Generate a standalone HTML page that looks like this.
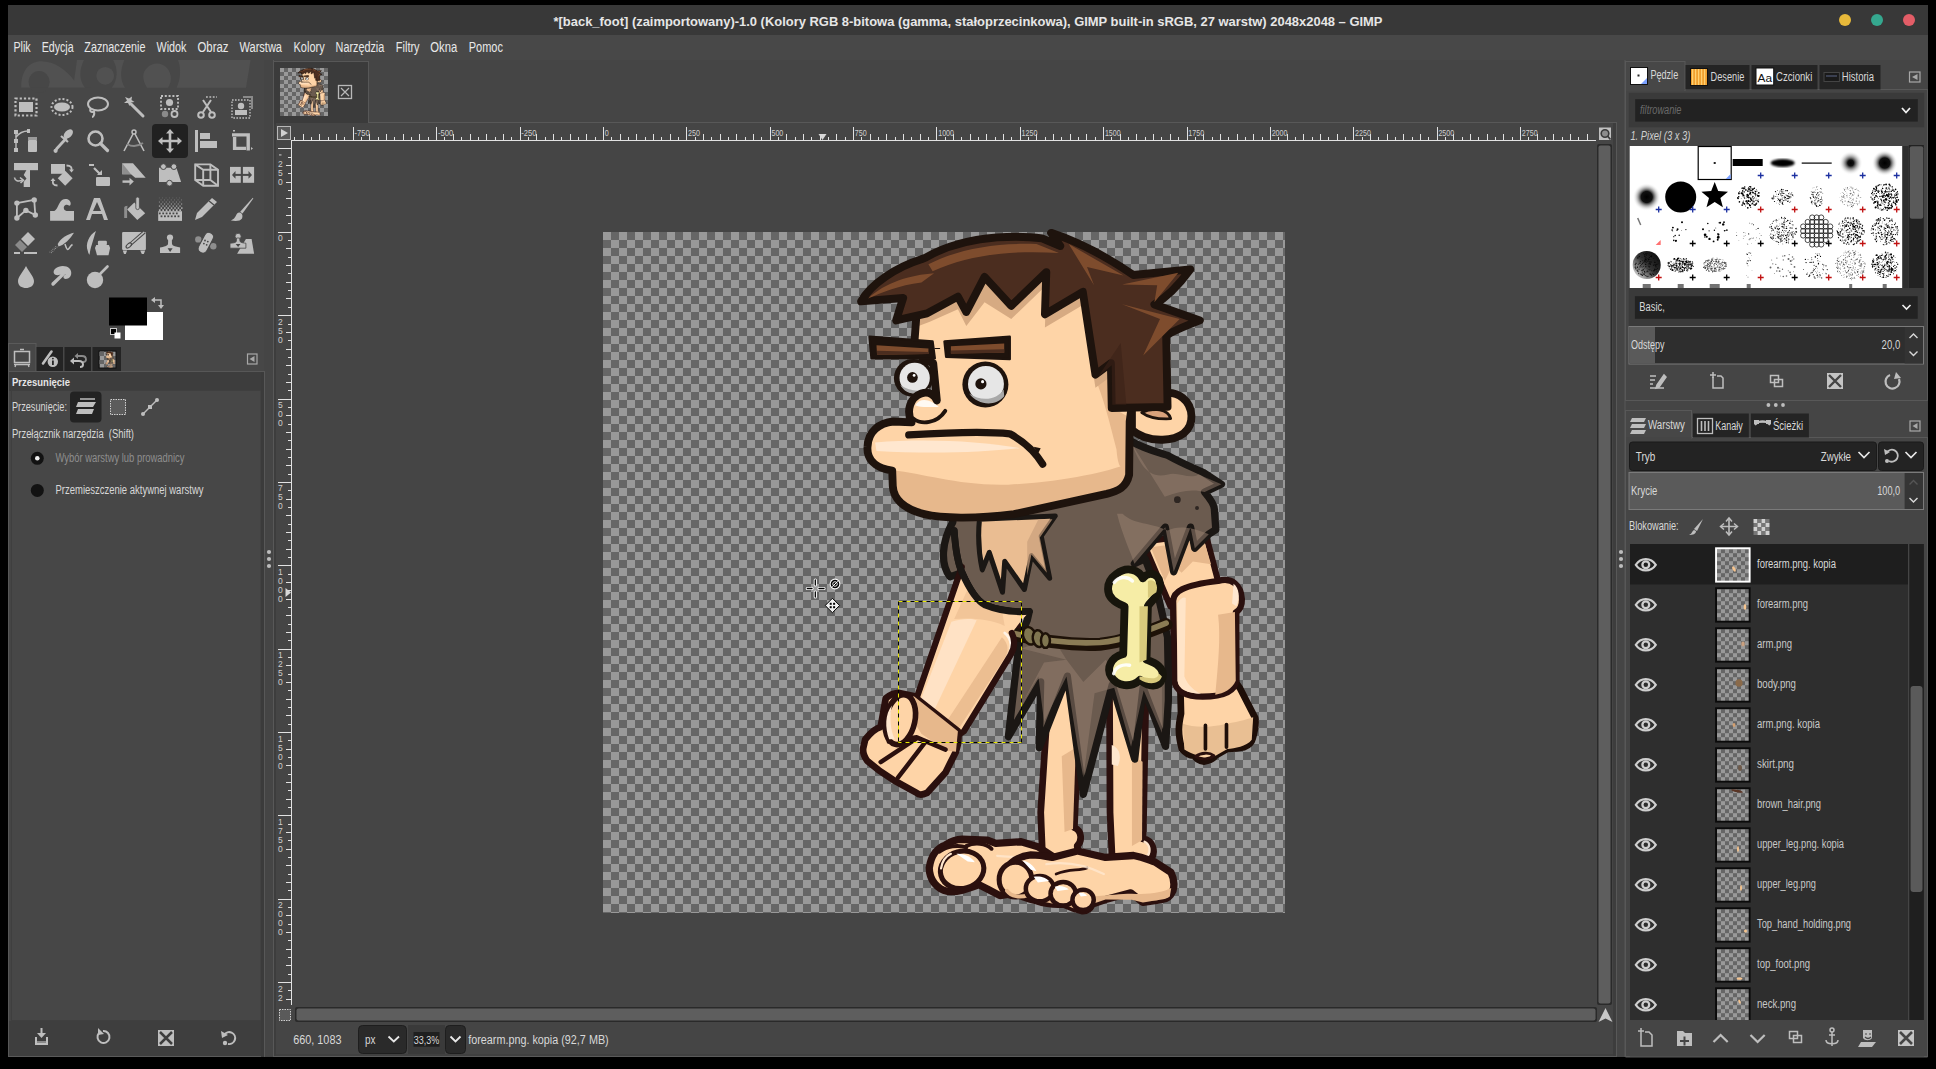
<!DOCTYPE html>
<html><head><meta charset="utf-8"><title>GIMP</title>
<style>
html,body{margin:0;padding:0;background:#000;width:1936px;height:1069px;overflow:hidden}
svg{display:block;font-family:"Liberation Sans",sans-serif}
</style></head><body>
<svg width="1936" height="1069" viewBox="0 0 1936 1069">
<defs>
<pattern id="chk" patternUnits="userSpaceOnUse" x="603" y="232" width="16" height="16"><rect width="16" height="16" fill="#999999"/><rect x="8" width="8" height="8" fill="#666666"/><rect y="8" width="8" height="8" fill="#666666"/></pattern>
<pattern id="chk4" patternUnits="userSpaceOnUse" width="8" height="8"><rect width="8" height="8" fill="#999"/><rect x="4" width="4" height="4" fill="#666"/><rect y="4" width="4" height="4" fill="#666"/></pattern>
<pattern id="chkth" patternUnits="userSpaceOnUse" x="280" y="68" width="8" height="8"><rect width="8" height="8" fill="#999"/><rect x="4" width="4" height="4" fill="#666"/><rect y="4" width="4" height="4" fill="#666"/></pattern>
<g id="cave"><g transform="translate(840,700) scale(0.280702)" stroke-linejoin="round" stroke-linecap="round">
<path d="M960,-60 L1090,-40 L1080,495 C1115,500 1125,540 1110,565 L1040,590 L970,575 L962,400 Z" fill="#fed4a7" stroke="#2b100e" stroke-width="24"/>
<path d="M1040,200 L1078,220 L1076,500 L1040,520 Z" fill="#e7b88c"/>
<path d="M968,160 C995,170 1005,200 990,235 L968,230 Z" fill="#ffe7cf"/>
<path d="M1085,505 C1105,515 1108,540 1095,555" fill="none" stroke="#ffe7cf" stroke-width="8"/>
<path d="M745,-60 L855,-40 L835,455 C860,465 865,500 845,520 L855,570 L722,570 L715,400 Z" fill="#fed4a7" stroke="#2b100e" stroke-width="24"/>
<path d="M790,200 L840,170 L830,460 L800,470 Z" fill="#e7b88c"/>
<path d="M318,598 C325,550 350,525 375,517 C400,500 420,496 435,496 L525,499 L555,511 L645,505 L705,523 L770,565 L760,640 C700,665 620,690 570,697 L525,673 L495,658 C450,675 420,685 384,682 C345,675 318,640 318,598 Z" fill="#fed4a7" stroke="#2b100e" stroke-width="26"/>
<ellipse cx="435" cy="605" rx="78" ry="66" transform="rotate(-15 435 605)" fill="#fed4a7" stroke="#2b100e" stroke-width="18"/>
<path d="M360,600 C365,570 380,555 395,548" fill="none" stroke="#ffe7cf" stroke-width="8"/>
<path d="M355,540 C380,520 420,515 450,525 M450,520 C480,505 520,510 540,530" fill="none" stroke="#2b100e" stroke-width="14"/>
<path d="M415,548 C440,545 470,560 480,578 L455,575 Z" fill="#fff"/>
<path d="M560,555 C620,560 680,560 720,570" fill="none" stroke="#ffe7cf" stroke-width="8" opacity="0.8"/>
<path d="M590,640 C585,590 620,560 680,552 C700,552 730,556 756,561 L846,538 L946,561 L1046,554 C1080,560 1100,570 1122,577 L1179,614 C1192,640 1192,660 1186,680 C1175,705 1160,711 1146,711 L1079,721 L1036,687 L946,711 L899,727 C890,745 875,752 862,751 L829,741 L796,727 C760,730 730,725 700,715 C650,705 600,685 590,640 Z" fill="#fed4a7" stroke="#2b100e" stroke-width="26"/>
<path d="M640,690 C700,705 800,700 900,700 C960,695 1000,690 1040,690 C1100,695 1150,685 1180,670 L1175,700 C1160,711 1146,711 1079,721 L1040,712 L946,711 L899,727 C880,745 850,745 829,741 L796,727 C760,730 700,715 640,690Z" fill="#e7b88c"/>
<ellipse cx="625" cy="640" rx="58" ry="62" fill="#fed4a7" stroke="#2b100e" stroke-width="18"/>
<path d="M595,680 C610,700 640,705 670,695" fill="none" stroke="#e7b88c" stroke-width="14"/>
<ellipse cx="712" cy="672" rx="50" ry="45" fill="#fed4a7" stroke="#2b100e" stroke-width="16"/>
<ellipse cx="795" cy="690" rx="45" ry="42" fill="#fed4a7" stroke="#2b100e" stroke-width="16"/>
<ellipse cx="866" cy="712" rx="38" ry="36" fill="#fed4a7" stroke="#2b100e" stroke-width="16"/>

<path d="M650,572 C670,575 690,590 700,610 L680,605 Z M690,630 C710,625 735,632 745,645 L705,650 Z M765,665 C785,660 805,665 815,675 L775,680 Z M850,688 C862,685 875,690 880,697 L858,700 Z" fill="#fff"/>
<path d="M770,620 C820,600 850,610 880,598" fill="none" stroke="#2b100e" stroke-width="10"/>
<path d="M735,585 C800,575 870,585 940,620" fill="none" stroke="#ffe7cf" stroke-width="8" opacity="0.8"/>
</g>
<g transform="translate(870,480) scale(0.280702)" stroke-linejoin="round" stroke-linecap="round">
<path d="M327,300 L470,330 L540,560 L440,600 L250,560 Z" fill="#fed4a7" stroke="#2b100e" stroke-width="20"/>
<path d="M340,380 L420,420 L470,500 L360,510 Z" fill="#e7b88c" opacity="0.6"/>
<path d="M972,220 L1195,190 L1240,360 L1305,470 L1305,720 L1085,720 L1080,425 L1070,450 Z" fill="#fed4a7" stroke="#2b100e" stroke-width="22"/>
<path d="M1000,240 L1190,215 L1215,300 L1150,290 L1110,330 L1080,300 L1050,360 Z" fill="#e7b88c"/>
<path d="M1105,712 L1108,832 C1100,870 1095,900 1111,958 C1125,975 1140,982 1153,982 C1165,995 1180,1003 1189,1003 C1210,1000 1225,990 1231,982 L1273,958 C1300,958 1320,955 1333,952 C1350,945 1360,935 1363,922 C1372,890 1375,860 1372,847 L1318,742 L1297,712 Z" fill="#fed4a7" stroke="#1e0e08" stroke-width="24"/>
<path d="M1115,868 C1150,880 1200,885 1270,868 C1320,860 1350,850 1365,845 L1360,925 C1340,950 1300,955 1273,958 L1231,982 C1200,990 1160,985 1120,960 Z" fill="#e9bf93"/>
<path d="M1195,874 L1195,958 M1270,871 L1270,952" fill="none" stroke="#1e0e08" stroke-width="13"/>
<path d="M1160,985 C1180,970 1210,970 1225,982 C1210,995 1180,998 1160,985Z" fill="#fed4a7" stroke="#2b100e" stroke-width="10"/>
<path d="M1080,430 C1082,400 1110,375 1240,360 C1290,345 1322,375 1325,425 C1326,450 1315,465 1303,472 L1305,715 C1300,755 1260,772 1185,772 C1125,772 1088,752 1085,715 Z" fill="#fed4a7" stroke="#2b100e" stroke-width="22"/>
<path d="M1240,480 L1300,470 L1303,715 C1290,745 1260,760 1230,765 C1240,660 1250,560 1240,480 Z" fill="#e7b88c"/>
<path d="M1095,440 C1105,420 1120,415 1125,420 L1120,700 C1130,730 1160,755 1180,762 C1130,760 1100,745 1095,715 Z" fill="#ffe7cf" opacity="0.8"/>
<path d="M1295,370 C1315,385 1320,420 1305,450 L1290,440 Z" fill="#ffe7cf"/>
<path d="M295,120 L700,60 L880,-20 L932,-137 C980,-110 1020,-100 1062,-87 C1110,-60 1160,-40 1187,-27 L1252,15 L1192,43 C1215,70 1228,90 1227,107 L1232,177 L1207,193 L1157,243 L1142,168 L1082,327 L1052,168 L942,298 L980,280 L1022,392 L1060,560 L1063,720 L1063,784 L1053,949 L973,739 L943,994 L863,729 L760,1120 L703,699 L603,954 L608,719 L493,914 L523,649 L535,560 L560,500 L567,470 C520,472 460,465 411,448 C380,432 350,385 327,330 L285,345 C250,300 255,220 295,150 Z" fill="#6b5b4f" stroke="#1b1714" stroke-width="26"/>
<path d="M540,800 L600,700 L620,860 L700,700 L740,950 L760,1060 L800,760 L870,740 L930,950 L975,750 L1040,900 L1040,700 L980,640 L900,720 L840,640 L760,720 L700,640 L620,650 Z" fill="#978070" opacity="0.5"/>
<path d="M540,600 L700,640 L650,560 Z" fill="#978070" opacity="0.45"/>
<path d="M300,180 C305,260 315,300 327,328 C350,380 380,430 411,446 C460,466 520,472 567,468" fill="none" stroke="#1b1714" stroke-width="24"/>
<path d="M390,140 L660,128 L610,200 L640,350 L575,270 L550,390 L480,290 L472,400 L425,258 L400,320 C385,250 385,190 390,140 Z" fill="#eabd92" stroke="#1b1714" stroke-width="18"/>
<path d="M600,140 L650,140 L605,205 L630,330 L575,265 L560,340 L560,220 Z" fill="#c9a07c" opacity="0.7"/>
<path d="M932,-130 C960,-60 990,0 1062,-20 C1100,-30 1140,0 1170,-20 L1252,15 L1192,43 C1150,30 1100,40 1050,60 Z" fill="#978070" opacity="0.5"/>
<path d="M880,120 C900,200 930,260 942,298 L1052,168 L1082,327 L1142,168 L1157,243 L1207,193 C1150,170 1100,160 1060,180 C1000,150 940,160 900,120 Z" fill="#978070" opacity="0.55"/>
<path d="M1095,70 m-12,0 a12,12 0 1,0 24,0 a12,12 0 1,0 -24,0 M1165,100 m-7,0 a7,7 0 1,0 14,0 a7,7 0 1,0 -14,0" fill="#2e2622"/>
<path d="M480,540 C600,575 700,590 820,585 C900,578 980,545 1055,515" fill="none" stroke="#1e1208" stroke-width="46"/>
<path d="M480,538 C600,570 700,585 820,579 C900,572 980,540 1055,510" fill="none" stroke="#8b7c55" stroke-width="20"/>
<g fill="#807650" stroke="#1e1208" stroke-width="9"><ellipse cx="568" cy="555" rx="22" ry="32" transform="rotate(-20 568 555)"/><ellipse cx="600" cy="565" rx="20" ry="30" transform="rotate(-10 600 565)"/><ellipse cx="625" cy="572" rx="16" ry="26"/></g>
<path d="M878,335 C915,305 958,320 972,350 C995,320 1040,335 1032,385 C1025,420 1000,430 990,450 L985,640 C1010,650 1052,665 1042,705 C1030,745 990,735 962,712 C930,742 880,735 860,702 C840,670 858,632 902,620 L907,450 C880,440 848,420 848,388 C848,365 860,348 878,335 Z" fill="#f6eda6" stroke="#17150c" stroke-width="28"/>
<path d="M960,450 L990,450 L985,640 L960,650 Z M990,360 C1010,350 1030,370 1020,400 L990,420 Z M960,700 C980,700 1020,720 1030,690 L1040,700 C1030,730 990,730 960,710 Z" fill="#d8ca7c"/>
<path d="M870,365 C885,345 915,340 935,360 M868,690 C875,665 900,655 925,660" fill="none" stroke="#fff" stroke-width="12" opacity="0.9"/>
<path d="M327,330 L165,780 C140,820 150,865 190,895 C240,925 300,925 335,895 L500,625 C515,600 520,575 505,545 L540,500 L567,470 C520,472 460,466 411,446 C380,430 350,385 327,330 Z" fill="#fed4a7"/>
<path d="M345,395 C380,430 420,450 470,465 L480,520 C430,495 360,490 300,495 Z" fill="#e7b88c" opacity="0.55"/>
<path d="M290,505 C330,493 360,493 380,500 L215,850 C190,840 175,820 178,790 Z" fill="#ffe7cf" opacity="0.75"/>
<path d="M470,560 C490,580 495,600 485,625 L320,880 C300,890 280,890 260,880 Z" fill="#e7b88c" opacity="0.8"/>
<path d="M480,545 C505,565 510,600 490,630" fill="none" stroke="#fff" stroke-width="10" opacity="0.7"/>
<path d="M327,310 L165,780 C140,820 150,865 190,895 C240,925 300,925 335,895 L500,625 C515,600 520,575 505,545" fill="none" stroke="#2b100e" stroke-width="22"/>
<path d="M300,180 C305,260 315,300 327,328 C350,380 380,430 411,446 C460,466 520,472 567,468" fill="none" stroke="#1b1714" stroke-width="24"/>
</g>
<g transform="translate(840,700) scale(0.280702)" stroke-linejoin="round" stroke-linecap="round">
<path d="M90,140 C110,115 130,100 145,96 L163,-6 C180,-20 200,-25 211,-25 L262,-14 L420,111 C425,140 420,165 413,184 L376,258 L310,331 C290,340 280,338 273,331 L193,287 L138,250 L97,217 C85,200 80,185 83,170 Z" fill="#fed4a7" stroke="#2b100e" stroke-width="24"/>
<path d="M262,-14 L420,111 L413,184 L376,180 L290,120 L240,40 Z" fill="#e7b88c"/>
<path d="M145,221 L273,137 M207,276 L303,151 M174,148 L273,133 L376,177" fill="none" stroke="#2b100e" stroke-width="16"/>
<ellipse cx="215" cy="70" rx="52" ry="90" transform="rotate(12 215 70)" fill="#fed4a7" stroke="#2b100e" stroke-width="20"/>
<path d="M185,20 C175,60 180,110 195,140 L175,140 C160,100 160,50 185,20 Z" fill="#ffe7cf"/>
</g>
<g transform="translate(840,225) scale(0.280702)" stroke-linejoin="round" stroke-linecap="round">
<path d="M1150,600 C1205,590 1250,625 1252,680 C1254,735 1210,762 1150,765 C1100,767 1060,748 1040,730 L1040,650 Z" fill="#fed4a7" stroke="#1e130d" stroke-width="28"/>
<path d="M1075,668 C1115,648 1170,655 1178,690 C1140,692 1105,690 1075,668 Z" fill="#d9a27c" stroke="#1e130d" stroke-width="10"/>
<ellipse cx="262" cy="545" rx="70" ry="68" fill="#1e130d"/>
<ellipse cx="266" cy="545" rx="54" ry="54" fill="#e6e6e6"/>
<path d="M215,570 C230,600 270,610 310,595 L320,580 C290,595 250,595 215,570Z" fill="#a9a9a9"/>
<circle cx="258" cy="543" r="19" fill="#1e130d"/><circle cx="264" cy="536" r="5" fill="#fff"/>
<path d="M300,150 L1000,150 L1040,640 L1032,700 L1030,890 C1020,935 990,948 950,958 L620,1030 C480,1048 360,1045 300,1030 C220,1010 190,970 188,930 L186,875 C120,865 95,830 98,790 C100,735 140,705 190,700 L255,703 C235,660 250,615 290,600 C320,590 340,610 345,625 L332,492 C290,480 268,450 265,420 L285,150 Z" fill="#fed4a7"/>
<path d="M188,875 C300,885 420,930 600,925 C800,915 950,880 1030,850 L1030,890 C1020,935 990,948 950,958 L620,1030 C480,1048 360,1045 300,1030 C220,1010 190,970 188,930 Z" fill="#e7b88c"/>
<path d="M905,535 L965,495 L968,650 L1040,690 L1030,860 C1000,880 990,860 985,800 C960,700 940,620 905,535 Z" fill="#e7b88c"/>
<path d="M125,775 C300,760 500,770 640,795 C500,812 300,815 130,805 Z" fill="#ffe7cf"/>
<path d="M280,360 L320,345 L420,300 L450,360 L515,275 L610,335 L735,215 L730,365 L865,285 L910,580 L965,540 L968,150 L280,150 Z" fill="#d6aa82"/>
<path d="M300,150 L1000,150 L1040,640 L1032,700 L1030,890 C1020,935 990,948 950,958 L620,1030 C480,1048 360,1045 300,1030 C220,1010 190,970 188,930 L186,875 C120,865 95,830 98,790 C100,735 140,705 190,700 L255,703 C235,660 250,615 290,600 C320,590 340,610 345,625 L332,492 C290,480 268,450 265,420 L285,150 Z" fill="none" stroke="#1e130d" stroke-width="28"/>
<circle cx="518" cy="568" r="82" fill="#1e130d"/><circle cx="520" cy="566" r="64" fill="#e6e6e6"/>
<path d="M460,600 C490,640 550,650 585,610 L583,585 C560,625 500,630 460,600Z" fill="#a9a9a9"/>
<circle cx="502" cy="566" r="20" fill="#1e130d"/><circle cx="508" cy="558" r="5.5" fill="#fff"/>
<path d="M262,690 C290,712 345,708 375,662" fill="none" stroke="#1e130d" stroke-width="14"/>
<path d="M268,642 C285,615 320,618 352,648 C320,648 290,652 268,642 Z" fill="#fff" opacity="0.85"/>
<path d="M245,748 C400,738 540,736 605,744 C650,768 690,800 722,852" fill="none" stroke="#1e130d" stroke-width="26"/>
<path d="M690,790 L715,795 L705,815 Z" fill="#1e130d"/>
<path d="M105,398 L330,415 L338,475 L112,475 Z" fill="#1e130d" stroke="#1e130d" stroke-width="8"/>
<path d="M130,428 L315,440 L315,460 L132,462 Z" fill="#7e4c2d"/><path d="M132,448 L315,452 L315,460 L132,462 Z" fill="#4b2d1f"/>
<path d="M372,415 L605,398 L605,478 L378,470 Z" fill="#1e130d" stroke="#1e130d" stroke-width="8"/>
<path d="M395,432 L585,422 L585,455 L395,458 Z" fill="#7e4c2d"/><path d="M395,447 L585,443 L585,455 L395,458 Z" fill="#4b2d1f"/>
<path d="M338,440 L355,440" stroke="#1e130d" stroke-width="4"/>
<path d="M75,272 C110,210 200,150 290,122 L305,116 C370,78 460,52 560,44 C630,40 680,42 720,48 L785,75 L752,28 C850,60 960,120 1045,178 L1248,158 C1210,210 1160,260 1120,283 L1282,340 C1230,360 1180,380 1162,395 L1167,648 L968,652 L965,492 L910,533 L865,238 L730,318 L735,168 L610,288 L515,185 L450,310 L420,255 L310,315 L200,340 L225,260 Z" fill="#4b2d1f" stroke="#1e130d" stroke-width="28"/>
<path d="M315,140 C420,85 560,62 700,68 L780,100 C640,90 470,100 330,165 Z" fill="#7e4c2d"/>
<path d="M100,262 C160,205 250,178 335,172 L290,205 C210,215 150,240 100,262 Z" fill="#7e4c2d"/>
<path d="M815,68 L1010,180 L880,150 L905,215 Z" fill="#7e4c2d"/>
<path d="M1005,212 L1205,170 L1120,275 L1130,215 Z" fill="#7e4c2d"/>
<path d="M1005,282 L1210,335 L1080,465 L1140,335 Z" fill="#7e4c2d"/>
<path d="M920,540 L968,500 L970,640 L1020,640 L1000,420 Z" fill="#3a2217" opacity="0.6"/>
</g></g>
<filter id="bl1"><feGaussianBlur stdDeviation="1.2"/></filter>
<linearGradient id="lg1" x1="1" y1="0" x2="0" y2="1"><stop offset="0" stop-color="#000"/><stop offset="0.5" stop-color="#333"/><stop offset="1" stop-color="#fff"/></linearGradient>
<radialGradient id="rg1"><stop offset="0" stop-color="#000"/><stop offset="0.25" stop-color="#111"/><stop offset="1" stop-color="#fff" stop-opacity="0"/></radialGradient>
<radialGradient id="rg2"><stop offset="0" stop-color="#000"/><stop offset="0.4" stop-color="#111"/><stop offset="1" stop-color="#fff" stop-opacity="0"/></radialGradient>
<pattern id="chkl0" patternUnits="userSpaceOnUse" x="1717" y="549.2" width="8" height="8"><rect width="8" height="8" fill="#999"/><rect x="4" width="4" height="4" fill="#666"/><rect y="4" width="4" height="4" fill="#666"/></pattern><pattern id="chkl1" patternUnits="userSpaceOnUse" x="1717" y="589.2" width="8" height="8"><rect width="8" height="8" fill="#999"/><rect x="4" width="4" height="4" fill="#666"/><rect y="4" width="4" height="4" fill="#666"/></pattern><pattern id="chkl2" patternUnits="userSpaceOnUse" x="1717" y="629.2" width="8" height="8"><rect width="8" height="8" fill="#999"/><rect x="4" width="4" height="4" fill="#666"/><rect y="4" width="4" height="4" fill="#666"/></pattern><pattern id="chkl3" patternUnits="userSpaceOnUse" x="1717" y="669.2" width="8" height="8"><rect width="8" height="8" fill="#999"/><rect x="4" width="4" height="4" fill="#666"/><rect y="4" width="4" height="4" fill="#666"/></pattern><pattern id="chkl4" patternUnits="userSpaceOnUse" x="1717" y="709.2" width="8" height="8"><rect width="8" height="8" fill="#999"/><rect x="4" width="4" height="4" fill="#666"/><rect y="4" width="4" height="4" fill="#666"/></pattern><pattern id="chkl5" patternUnits="userSpaceOnUse" x="1717" y="749.2" width="8" height="8"><rect width="8" height="8" fill="#999"/><rect x="4" width="4" height="4" fill="#666"/><rect y="4" width="4" height="4" fill="#666"/></pattern><pattern id="chkl6" patternUnits="userSpaceOnUse" x="1717" y="789.2" width="8" height="8"><rect width="8" height="8" fill="#999"/><rect x="4" width="4" height="4" fill="#666"/><rect y="4" width="4" height="4" fill="#666"/></pattern><pattern id="chkl7" patternUnits="userSpaceOnUse" x="1717" y="829.2" width="8" height="8"><rect width="8" height="8" fill="#999"/><rect x="4" width="4" height="4" fill="#666"/><rect y="4" width="4" height="4" fill="#666"/></pattern><pattern id="chkl8" patternUnits="userSpaceOnUse" x="1717" y="869.2" width="8" height="8"><rect width="8" height="8" fill="#999"/><rect x="4" width="4" height="4" fill="#666"/><rect y="4" width="4" height="4" fill="#666"/></pattern><pattern id="chkl9" patternUnits="userSpaceOnUse" x="1717" y="909.2" width="8" height="8"><rect width="8" height="8" fill="#999"/><rect x="4" width="4" height="4" fill="#666"/><rect y="4" width="4" height="4" fill="#666"/></pattern><pattern id="chkl10" patternUnits="userSpaceOnUse" x="1717" y="949.2" width="8" height="8"><rect width="8" height="8" fill="#999"/><rect x="4" width="4" height="4" fill="#666"/><rect y="4" width="4" height="4" fill="#666"/></pattern><pattern id="chkl11" patternUnits="userSpaceOnUse" x="1717" y="989.2" width="8" height="8"><rect width="8" height="8" fill="#999"/><rect x="4" width="4" height="4" fill="#666"/><rect y="4" width="4" height="4" fill="#666"/></pattern>
</defs>
<rect x="0" y="0" width="1936" height="1069" fill="#000" />
<rect x="8" y="5" width="1920" height="1052" fill="#454545" />
<rect x="8" y="5" width="1920" height="30" fill="#383838" />
<text x="553.5" y="25.5" font-size="13.5" fill="#e6e6e6" textLength="829.0" lengthAdjust="spacingAndGlyphs" font-weight="bold">*[back_foot] (zaimportowany)-1.0 (Kolory RGB 8-bitowa (gamma, stałoprzecinkowa), GIMP built-in sRGB, 27 warstw) 2048x2048 – GIMP</text>
<circle cx="1845" cy="20" r="6" fill="#e8b93a"/>
<circle cx="1877" cy="20" r="6" fill="#35a88f"/>
<circle cx="1909" cy="20" r="6" fill="#e35d67"/>
<rect x="8" y="35" width="1920" height="25" fill="#484848" />
<text x="13.5" y="52" font-size="14" fill="#e8e8e8" textLength="17.2" lengthAdjust="spacingAndGlyphs">Plik</text>
<text x="41.7" y="52" font-size="14" fill="#e8e8e8" textLength="31.9" lengthAdjust="spacingAndGlyphs">Edycja</text>
<text x="84.3" y="52" font-size="14" fill="#e8e8e8" textLength="61.2" lengthAdjust="spacingAndGlyphs">Zaznaczenie</text>
<text x="156.5" y="52" font-size="14" fill="#e8e8e8" textLength="30.0" lengthAdjust="spacingAndGlyphs">Widok</text>
<text x="197.5" y="52" font-size="14" fill="#e8e8e8" textLength="31.0" lengthAdjust="spacingAndGlyphs">Obraz</text>
<text x="239.5" y="52" font-size="14" fill="#e8e8e8" textLength="42.5" lengthAdjust="spacingAndGlyphs">Warstwa</text>
<text x="293.5" y="52" font-size="14" fill="#e8e8e8" textLength="31.2" lengthAdjust="spacingAndGlyphs">Kolory</text>
<text x="335.6" y="52" font-size="14" fill="#e8e8e8" textLength="48.7" lengthAdjust="spacingAndGlyphs">Narzędzia</text>
<text x="395.8" y="52" font-size="14" fill="#e8e8e8" textLength="23.8" lengthAdjust="spacingAndGlyphs">Filtry</text>
<text x="430.3" y="52" font-size="14" fill="#e8e8e8" textLength="26.9" lengthAdjust="spacingAndGlyphs">Okna</text>
<text x="468.7" y="52" font-size="14" fill="#e8e8e8" textLength="34.2" lengthAdjust="spacingAndGlyphs">Pomoc</text>
<rect x="8" y="60" width="256" height="997" fill="#474747" />
<path d="M21.2,87.8 C21,70 30,61.3 41,61.3 C55,61.3 66,70 74.1,80.5 L77,60 L84,60 C79,70 79,80 85,87.8 Z" fill="#515151"/>
<ellipse cx="39.1" cy="82" rx="10.5" ry="11" fill="#474747"/>
<rect x="21" y="87.8" width="70" height="2" fill="#474747"/>
<circle cx="105.2" cy="75.8" r="8.9" fill="#515151"/>
<path d="M113.1,60 L124.4,60 C120,70 120,80 125,87.8 L111.8,87.8 C118,80 118,68 113.1,60 Z" fill="#515151"/>
<path d="M147,87.8 C142,80 142,72 147,68 C152,62 162,62 167,68 C172,74 172,82 168,87.8 Z" fill="#515151"/>
<path d="M178,60 L250.6,60 L246,87.8 L176.6,87.8 C181,78 181,68 178,60 Z" fill="#515151"/>
<rect x="152" y="124" width="36" height="34" fill="#212121" rx="4" />
<g transform="translate(14,95)" fill="#bebebe" stroke="none"><rect x="1.5" y="3.5" width="21" height="17" stroke="#bebebe" fill="none" stroke-width="2.2" stroke-dasharray="2.2,2"/><rect x="5" y="7" width="14" height="10"/></g>
<g transform="translate(50,95)" fill="#bebebe" stroke="none"><ellipse cx="12" cy="12" rx="10.5" ry="8" stroke="#bebebe" fill="none" stroke-width="2" stroke-dasharray="2,2"/><ellipse cx="12" cy="12" rx="8" ry="4.5"/></g>
<g transform="translate(86,95)" fill="#bebebe" stroke="none"><ellipse cx="12" cy="9" rx="10" ry="6.5" stroke="#bebebe" fill="none" stroke-width="2"/><path d="M5,13 C2,17 8,18 8,16 C9,20 7,22 6,22" stroke="#bebebe" fill="none" stroke-width="2"/></g>
<g transform="translate(122,95)" fill="#bebebe" stroke="none"><path d="M3,2 L5,5.5 L2,8 L6,8 L7.5,11 L9,7.5 L12.5,7 L9.5,5 L10,1.5 L7,3.5 Z"/><path d="M9,9 L21,21" stroke="#bebebe" stroke-width="3" stroke-linecap="round"/></g>
<g transform="translate(158,95)" fill="#bebebe" stroke="none"><rect x="3" y="1" width="17" height="13" stroke="#bebebe" fill="none" stroke-width="1.8" stroke-dasharray="2,1.8"/><circle cx="11.5" cy="7.5" r="3.6"/><circle cx="7" cy="19" r="3.2" fill="#8a8a8a"/><circle cx="16.5" cy="19" r="3" stroke="#bebebe" fill="none" stroke-width="1.8"/></g>
<g transform="translate(194,95)" fill="#bebebe" stroke="none"><path d="M9,5 L17,17 M17,5 L9,17" stroke="#bebebe" stroke-width="2"/><circle cx="7" cy="20" r="2.8" stroke="#bebebe" fill="none" stroke-width="2"/><circle cx="18" cy="20" r="2.8" stroke="#bebebe" fill="none" stroke-width="2"/><path d="M12,2 L23,2" stroke="#bebebe" stroke-width="1.6" stroke-dasharray="1.8,1.6"/></g>
<g transform="translate(230,95)" fill="#bebebe" stroke="none"><rect x="2" y="5" width="18" height="18" stroke="#bebebe" fill="none" stroke-width="1.4" stroke-dasharray="1.6,1.4"/><path d="M13,1 L23,1 L23,14 L21,14 L21,3 L13,3Z" fill="#8a8a8a"/><circle cx="11" cy="11" r="3.2"/><rect x="5" y="15" width="12" height="5"/></g>
<g transform="translate(14,129)" fill="#bebebe" stroke="none"><rect x="0" y="1" width="4" height="4"/><rect x="0" y="10" width="4" height="4"/><rect x="0" y="19" width="4" height="4"/><rect x="1.3" y="2" width="1.4" height="20"/><path d="M2,8 C6,3 10,2 14,2" stroke="#bebebe" stroke-width="1.5" fill="none"/><rect x="13" y="0" width="3" height="4"/><rect x="14" y="8" width="9" height="3" fill="#9a9a9a"/><rect x="14" y="11" width="9" height="12" rx="1"/></g>
<g transform="translate(50,129)" fill="#bebebe" stroke="none"><ellipse cx="18.3" cy="5" rx="3.6" ry="5.5" transform="rotate(45 18.3 5)"/><path d="M11,7 L18,13" stroke="#bebebe" stroke-width="2.2"/><path d="M16.5,9 L6,20.5" stroke="#bebebe" stroke-width="2.8"/><circle cx="5.6" cy="21.8" r="2.1"/></g>
<g transform="translate(86,129)" fill="#bebebe" stroke="none"><circle cx="9.5" cy="9.5" r="7" stroke="#bebebe" fill="none" stroke-width="2.6"/><path d="M14.5,14.5 L21.5,21.5" stroke="#bebebe" stroke-width="3.2" stroke-linecap="round"/></g>
<g transform="translate(122,129)" fill="#bebebe" stroke="none"><circle cx="12" cy="3" r="2" stroke="#bebebe" fill="none" stroke-width="1.5"/><path d="M11,5 L2,22 M13,5 L22,22" stroke="#bebebe" stroke-width="1.6"/><path d="M5,15 C10,18 15,18 21,14" stroke="#8a8a8a" stroke-width="2" fill="none"/></g>
<g transform="translate(158,129)" fill="#bebebe" stroke="none"><path d="M12,0 L16,4.5 L13.3,4.5 L13.3,10.7 L19.5,10.7 L19.5,8 L24,12 L19.5,16 L19.5,13.3 L13.3,13.3 L13.3,19.5 L16,19.5 L12,24 L8,19.5 L10.7,19.5 L10.7,13.3 L4.5,13.3 L4.5,16 L0,12 L4.5,8 L4.5,10.7 L10.7,10.7 L10.7,4.5 L8,4.5Z"/></g>
<g transform="translate(194,129)" fill="#bebebe" stroke="none"><rect x="1" y="1" width="3" height="22"/><rect x="6" y="4" width="10" height="6"/><rect x="6" y="12" width="17" height="7"/></g>
<g transform="translate(230,129)" fill="#bebebe" stroke="none"><path d="M4.6,8 V19.4 H16" fill="none" stroke="#bebebe" stroke-width="3.4"/><path d="M2,5.9 H18.2 V21.5" fill="none" stroke="#bebebe" stroke-width="3.4"/><rect x="3" y="1" width="2" height="1.5"/><path d="M21,18 L23,19.5 L21,21Z"/></g>
<g transform="translate(14,163)" fill="#bebebe" stroke="none"><rect x="0" y="0" width="24" height="7.2"/><path d="M16,0.6 L16,23.9 L9.7,23.9 L9.7,19 L12.5,15.5 L9.7,12 Z"/><path d="M0.5,14.5 C1,18 4,18.5 8,17.5" stroke="#bebebe" stroke-width="1.6" fill="none"/><path d="M6,14.5 L9.5,17.3 L6.5,20" stroke="#bebebe" stroke-width="1.6" fill="none"/></g>
<g transform="translate(50,163)" fill="#bebebe" stroke="none"><rect x="1" y="1" width="14" height="9.8"/><rect x="10" y="10" width="10.5" height="10.5" transform="rotate(45 15.2 15.2)"/><path d="M16.5,2.5 C21,2.5 22,4.5 21.5,7.5" stroke="#bebebe" stroke-width="1.8" fill="none"/><path d="M19,6.5 L21.5,9.5 L24,6.5Z"/><path d="M7.5,22.5 C3,22.5 2.5,20 3,17.5" stroke="#bebebe" stroke-width="1.8" fill="none"/><path d="M0.5,18 L3,15 L5.5,18Z"/></g>
<g transform="translate(86,163)" fill="#bebebe" stroke="none"><rect x="10" y="14" width="14" height="9" rx="1"/><path d="M3,2 L8,2 M8,5 L14,11" stroke="#bebebe" stroke-width="2.2"/><path d="M11,12 L16,12 L16,7Z"/></g>
<g transform="translate(122,163)" fill="#bebebe" stroke="none"><path d="M0.2,0.3 L11,0.3 L23.7,14.8 L13.2,14.8 L9,11.2 L0.2,11.2Z"/><path d="M0.2,0.3 L9,11.2 L0.2,11.2Z" fill="#8e8e8e"/><path d="M0.5,18.6 H9" stroke="#bebebe" stroke-width="2.4"/><path d="M7.5,14.8 L11.8,18.6 L7.5,22.5Z"/></g>
<g transform="translate(158,163)" fill="#bebebe" stroke="none"><path d="M1,4.7 L18.4,4.7 L23.1,19.1 L1,19.1Z"/><circle cx="5.4" cy="3.6" r="2.9" stroke="#474747" stroke-width="1"/><circle cx="15.9" cy="3.6" r="2.9" stroke="#474747" stroke-width="1"/><circle cx="11.5" cy="20.2" r="2.9" stroke="#474747" stroke-width="1"/></g>
<g transform="translate(194,163)" fill="#bebebe" stroke="none"><g fill="none" stroke="#bebebe" stroke-width="1.9"><path d="M1.2,1.4 H16.4 L24,6.8 V22.7 H9.2 L1.2,17 Z"/><path d="M1.2,1.4 L9.2,6.8 H24 M9.2,6.8 V22.7 M1.2,17 H16.4 V1.4 M16.4,17 L24,22.7"/></g></g>
<g transform="translate(230,163)" fill="#bebebe" stroke="none"><rect x="0" y="3.9" width="10.8" height="15.9"/><rect x="12.9" y="3.9" width="11.2" height="15.9"/><path d="M2,11.9 L5.5,8 L5.5,15.8Z M22,11.9 L18.5,8 L18.5,15.8Z" fill="#474747"/><rect x="5" y="10.9" width="14" height="2" fill="#474747"/></g>
<g transform="translate(14,197)" fill="#bebebe" stroke="none"><path d="M2.9,6.1 L20.2,2.9 L21.3,18 L11.9,13.4 L2.9,21 Z" stroke="#bebebe" fill="none" stroke-width="1.8"/><circle cx="2.9" cy="6.1" r="2.7"/><circle cx="20.2" cy="2.9" r="2.7"/><circle cx="21.3" cy="18" r="2.7"/><circle cx="2.9" cy="21" r="2.7"/><circle cx="11.9" cy="13.4" r="2.7"/></g>
<g transform="translate(50,197)" fill="#bebebe" stroke="none"><path d="M0.1,14.1 L3.4,14.1 C6,14 7,11 9.2,6.8 C11,3.5 13,2.1 15.5,2.1 C18.5,2.1 20.7,4 20.7,6.5 C20.7,8 20,8.7 19.3,8.7 C18,8 17,7.5 15.5,8 C13.8,8.6 13.5,10.5 14,12 C14.5,13.5 16,14.1 18,14.1 L24,14.1 L24,23.8 L0.1,23.8Z"/></g>
<g transform="translate(86,197)" fill="#bebebe" stroke="none"><path d="M8,1 L14,1 L22,23 L18,23 L16,17 L6,17 L4,23 L0,23 Z M11,5 L7,14 L15,14Z"/></g>
<g transform="translate(122,197)" fill="#bebebe" stroke="none"><path d="M5.1,12.6 L12.3,5.4 L23.2,16.2 L15.3,23.1Z"/><rect x="13.8" y="0" width="3.6" height="12.6" rx="1.8" stroke="#474747" stroke-width="0.8"/><path d="M2.2,10.8 C2.2,9.5 3.5,9 5.5,8.8 L5.1,12.6 L5.1,21 L2.2,21Z" fill="#8e8e8e"/></g>
<g transform="translate(158,197)" fill="#bebebe" stroke="none"><rect x="0.2" y="14.2" width="23.8" height="9.7"/><rect x="0.9" y="0.6" width="0.70" height="0.70" opacity="0.45"/><rect x="4.3" y="0.6" width="0.70" height="0.70" opacity="0.45"/><rect x="7.7" y="0.6" width="0.70" height="0.70" opacity="0.45"/><rect x="11.1" y="0.6" width="0.70" height="0.70" opacity="0.45"/><rect x="14.5" y="0.6" width="0.70" height="0.70" opacity="0.45"/><rect x="17.9" y="0.6" width="0.70" height="0.70" opacity="0.45"/><rect x="21.3" y="0.6" width="0.70" height="0.70" opacity="0.45"/><rect x="2.6" y="2.5" width="0.87" height="0.87" opacity="0.53"/><rect x="6.0" y="2.5" width="0.87" height="0.87" opacity="0.53"/><rect x="9.4" y="2.5" width="0.87" height="0.87" opacity="0.53"/><rect x="12.8" y="2.5" width="0.87" height="0.87" opacity="0.53"/><rect x="16.2" y="2.5" width="0.87" height="0.87" opacity="0.53"/><rect x="19.6" y="2.5" width="0.87" height="0.87" opacity="0.53"/><rect x="23.0" y="2.5" width="0.87" height="0.87" opacity="0.53"/><rect x="0.9" y="4.5" width="1.04" height="1.04" opacity="0.61"/><rect x="4.3" y="4.5" width="1.04" height="1.04" opacity="0.61"/><rect x="7.7" y="4.5" width="1.04" height="1.04" opacity="0.61"/><rect x="11.1" y="4.5" width="1.04" height="1.04" opacity="0.61"/><rect x="14.5" y="4.5" width="1.04" height="1.04" opacity="0.61"/><rect x="17.9" y="4.5" width="1.04" height="1.04" opacity="0.61"/><rect x="21.3" y="4.5" width="1.04" height="1.04" opacity="0.61"/><rect x="2.6" y="6.4" width="1.21" height="1.21" opacity="0.69"/><rect x="6.0" y="6.4" width="1.21" height="1.21" opacity="0.69"/><rect x="9.4" y="6.4" width="1.21" height="1.21" opacity="0.69"/><rect x="12.8" y="6.4" width="1.21" height="1.21" opacity="0.69"/><rect x="16.2" y="6.4" width="1.21" height="1.21" opacity="0.69"/><rect x="19.6" y="6.4" width="1.21" height="1.21" opacity="0.69"/><rect x="23.0" y="6.4" width="1.21" height="1.21" opacity="0.69"/><rect x="0.9" y="8.4" width="1.38" height="1.38" opacity="0.77"/><rect x="4.3" y="8.4" width="1.38" height="1.38" opacity="0.77"/><rect x="7.7" y="8.4" width="1.38" height="1.38" opacity="0.77"/><rect x="11.1" y="8.4" width="1.38" height="1.38" opacity="0.77"/><rect x="14.5" y="8.4" width="1.38" height="1.38" opacity="0.77"/><rect x="17.9" y="8.4" width="1.38" height="1.38" opacity="0.77"/><rect x="21.3" y="8.4" width="1.38" height="1.38" opacity="0.77"/><rect x="2.6" y="10.3" width="1.55" height="1.55" opacity="0.85"/><rect x="6.0" y="10.3" width="1.55" height="1.55" opacity="0.85"/><rect x="9.4" y="10.3" width="1.55" height="1.55" opacity="0.85"/><rect x="12.8" y="10.3" width="1.55" height="1.55" opacity="0.85"/><rect x="16.2" y="10.3" width="1.55" height="1.55" opacity="0.85"/><rect x="19.6" y="10.3" width="1.55" height="1.55" opacity="0.85"/><rect x="23.0" y="10.3" width="1.55" height="1.55" opacity="0.85"/><rect x="0.9" y="12.3" width="1.72" height="1.72" opacity="0.93"/><rect x="4.3" y="12.3" width="1.72" height="1.72" opacity="0.93"/><rect x="7.7" y="12.3" width="1.72" height="1.72" opacity="0.93"/><rect x="11.1" y="12.3" width="1.72" height="1.72" opacity="0.93"/><rect x="14.5" y="12.3" width="1.72" height="1.72" opacity="0.93"/><rect x="17.9" y="12.3" width="1.72" height="1.72" opacity="0.93"/><rect x="21.3" y="12.3" width="1.72" height="1.72" opacity="0.93"/><rect x="0.9" y="15.5" width="1.8" height="1.8" fill="#474747"/><rect x="4.3" y="15.5" width="1.8" height="1.8" fill="#474747"/><rect x="7.7" y="15.5" width="1.8" height="1.8" fill="#474747"/><rect x="11.1" y="15.5" width="1.8" height="1.8" fill="#474747"/><rect x="14.5" y="15.5" width="1.8" height="1.8" fill="#474747"/><rect x="17.9" y="15.5" width="1.8" height="1.8" fill="#474747"/><rect x="2.6" y="18.4" width="1.8" height="1.8" fill="#474747"/><rect x="6.0" y="18.4" width="1.8" height="1.8" fill="#474747"/><rect x="9.4" y="18.4" width="1.8" height="1.8" fill="#474747"/><rect x="12.8" y="18.4" width="1.8" height="1.8" fill="#474747"/><rect x="16.2" y="18.4" width="1.8" height="1.8" fill="#474747"/><rect x="19.6" y="18.4" width="1.8" height="1.8" fill="#474747"/></g>
<g transform="translate(194,197)" fill="#bebebe" stroke="none"><path d="M18,1 L23,5 L8,20 L1,23 L3,16Z"/><path d="M15,4 L20,8" stroke="#454545" stroke-width="1.2"/></g>
<g transform="translate(230,197)" fill="#bebebe" stroke="none"><path d="M22.8,0.7 L23.3,1.5 L12.5,16.5 L10.2,14.8 Z"/><path d="M9.5,15.5 C12.5,16 13,19 12,21.5 C10.5,24 6,24.5 0.9,23.5 C3.5,22.5 5,20.5 6,18.5 C6.8,16.5 8,15.3 9.5,15.5Z"/></g>
<g transform="translate(14,231)" fill="#bebebe" stroke="none"><path d="M14,1 L21,8 L14,15 L7,8Z"/><path d="M6,9 L13,16 L8,21 L1,14Z" fill="#8a8a8a"/><rect x="0" y="21" width="6" height="2"/><rect x="10" y="21" width="13" height="2"/></g>
<g transform="translate(50,231)" fill="#bebebe" stroke="none"><path d="M24,1.8 C18,3 11,7 7.7,13 L8.5,15.5 C14,14 19.5,9 24,1.8Z"/><path d="M15,13 C16,16 16.5,18.5 17.8,18.5 C19,18.5 20,15 22.5,13.5" stroke="#bebebe" stroke-width="1.5" fill="none"/><circle cx="7.0" cy="16.0" r="0.55" opacity="0.7"/><circle cx="5.5" cy="15.5" r="0.5" opacity="0.6"/><circle cx="5.6" cy="17.4" r="0.55" opacity="0.7"/><circle cx="4.1" cy="16.9" r="0.5" opacity="0.6"/><circle cx="4.2" cy="18.8" r="0.55" opacity="0.7"/><circle cx="2.7" cy="18.3" r="0.5" opacity="0.6"/><circle cx="2.8" cy="20.2" r="0.55" opacity="0.7"/><circle cx="1.3" cy="19.7" r="0.5" opacity="0.6"/><circle cx="1.4" cy="21.6" r="0.55" opacity="0.7"/><circle cx="-0.1" cy="21.1" r="0.5" opacity="0.6"/></g>
<g transform="translate(86,231)" fill="#bebebe" stroke="none"><path d="M10,0 C3,4 -1,13 1.8,20 C2.2,22 3,23.5 3.5,23.8 C4,21 4.5,17 6,13 C7.5,8 8.5,4 10,0Z"/><rect x="11.9" y="9.7" width="9" height="4.6" rx="1.2"/><path d="M10.2,14.1 L22.9,14.1 L24.1,17 L22.5,24.2 L11,24.2 L9,17Z"/></g>
<g transform="translate(122,231)" fill="#bebebe" stroke="none"><rect x="0.1" y="1" width="23.8" height="18.1" rx="1"/><path d="M0.8,19.5 H5.1 L3.8,23.1 H2Z M18.2,19.5 H23.2 L21.8,23.1 H19.8Z"/><path d="M22.5,0.8 L7.5,14" stroke="#474747" stroke-width="3.6"/><path d="M22.3,1 L7.8,13.7" stroke="#bebebe" stroke-width="1.6"/><ellipse cx="6.8" cy="14.5" rx="3.8" ry="2.2" transform="rotate(-40 6.8 14.5)" fill="#474747"/><ellipse cx="6.8" cy="14.5" rx="2.6" ry="1.2" transform="rotate(-40 6.8 14.5)"/></g>
<g transform="translate(158,231)" fill="#bebebe" stroke="none"><circle cx="12" cy="6.5" r="3.1"/><path d="M10.2,8.4 L13.8,8.4 L14,13 C14.5,15 17,15.5 20,16 L22.1,16.5 L22.1,21.9 L2,21.9 L2,16.5 C6,15.8 9.5,15 10,13Z"/><path d="M9.6,17.2 L14.6,17.2 L12.1,20.9Z" fill="#474747"/></g>
<g transform="translate(194,231)" fill="#bebebe" stroke="none"><circle cx="4.3" cy="8.4" r="3.2" fill="#8e8e8e"/><circle cx="19.3" cy="15.3" r="3.2" fill="#8e8e8e"/><rect x="7.2" y="0.8" width="9.2" height="22" rx="4.6" transform="rotate(28 11.8 11.8)" stroke="#474747" stroke-width="1"/><circle cx="11" cy="9.5" r="0.9" fill="#474747"/><circle cx="13.8" cy="10.6" r="0.9" fill="#474747"/><circle cx="9.9" cy="12.6" r="0.9" fill="#474747"/><circle cx="12.7" cy="13.8" r="0.9" fill="#474747"/></g>
<g transform="translate(230,231)" fill="#bebebe" stroke="none"><path d="M7.1,22.8 L15.9,8.1 L21.6,8.1 L24.1,22.8Z"/><circle cx="8.1" cy="5.3" r="3" stroke="#474747" stroke-width="0.8"/><path d="M6.5,7 L9.7,7 L10,10.5 C11,11.8 14,12 15.9,12.2 L15.9,17.2 L0,17.2 L0,12.2 C3,12 5.5,11.8 6.3,10.5Z" stroke="#474747" stroke-width="0.8"/><path d="M5.7,13 L10.5,13 L8.1,16Z" fill="#474747"/></g>
<g transform="translate(14,265)" fill="#bebebe" stroke="none"><path d="M12,1 C15,7 20,12 20,16 C20,21 16,23 12,23 C8,23 4,21 4,16 C4,12 9,7 12,1Z"/></g>
<g transform="translate(50,265)" fill="#bebebe" stroke="none"><path d="M5.5,3.5 C9,0.5 16,0 19.5,3.5 C22.5,7 21.5,12 18,13.5 C15,14.5 13,13.5 13.5,11.5 C14,10 16,10 15.5,9 L5,19.5 C4,21 2.5,21 1.8,20.2 C1,19.3 1.2,18 2.5,17 L10.5,9.5 C8,10.5 5,10.5 4,8.5 C3,6.8 4,4.8 5.5,3.5Z"/></g>
<g transform="translate(86,265)" fill="#bebebe" stroke="none"><circle cx="9" cy="15" r="8.2"/><path d="M13.5,9.5 L21.5,1.5" stroke="#bebebe" stroke-width="2.6" stroke-linecap="round"/></g>
<rect x="125" y="312" width="38" height="28" fill="#fff" />
<rect x="109" y="297.5" width="38" height="28" fill="#000" />
<path d="M154,300 L161,300 L161,307" stroke="#bebebe" stroke-width="1.5" fill="none"/><path d="M151,300 L155,297 L155,303Z M158,305 L164,305 L161,309Z" fill="#bebebe"/>
<rect x="110.5" y="328.5" width="6" height="6" fill="#000" stroke="#ccc" stroke-width="1" />
<rect x="114.5" y="332.5" width="6" height="6" fill="#fff" />
<rect x="8.5" y="343.5" width="27.5" height="28" fill="#474747" stroke="#5a5a5a" stroke-width="1" />
<rect x="36.5" y="347" width="26.5" height="24.5" fill="#242424" />
<rect x="64.5" y="347" width="26.5" height="24.5" fill="#242424" />
<rect x="92.5" y="347" width="28.5" height="24.5" fill="#242424" />
<rect x="14.5" y="351.5" width="15" height="11" fill="none" stroke="#bebebe" stroke-width="1.5"/><path d="M14,364.5 L30,364.5 M16,364 L15,367 M28,364 L29,367 M20,349.5 L24,349.5" stroke="#bebebe" stroke-width="1.3"/>
<path d="M51.5,351.5 L43,363.5" stroke="#bebebe" stroke-width="2.6" stroke-linecap="round"/><circle cx="52.8" cy="361.8" r="5.2" fill="#bebebe"/><rect x="52" y="360.5" width="1.8" height="4.5" fill="#242424"/><circle cx="52.9" cy="358.6" r="0.9" fill="#242424"/>
<path d="M76,356 H82 C85,356 86,358 86,359.5 C86,361 85,362 83,362" stroke="#8a8a8a" stroke-width="1.8" fill="none"/><path d="M78,353 L74.5,356 L78,359Z" fill="#8a8a8a"/><path d="M72,361 H79 C82,361 83,363 83,364.5 C83,366 82,367 80,367" stroke="#bebebe" stroke-width="2" fill="none"/><path d="M74,357.5 L70,361 L74,364.5Z" fill="#bebebe"/>
<rect x="98.5" y="350.5" width="18" height="18" fill="#111"/><rect x="99.5" y="351.5" width="16" height="16" fill="url(#chk4)"/><use href="#cave" transform="translate(99.5,351.5) scale(0.02346) translate(-603,-232)"/>
<rect x="247.5" y="354" width="9.5" height="10" fill="none" stroke="#a8a8a8" stroke-width="1.2"/><path d="M254.5,356 L249.5,359 L254.5,362Z" fill="#a8a8a8"/>
<rect x="8.5" y="371.5" width="256" height="685" fill="#454545" stroke="#575757" stroke-width="1" />
<rect x="9" y="372" width="255" height="19" fill="#3d3d3d" />
<rect x="11.5" y="390.5" width="249.5" height="630" fill="#474747" stroke="#3f3f3f" stroke-width="1" />
<text x="12" y="386" font-size="11.5" fill="#e6e6e6" textLength="58.0" lengthAdjust="spacingAndGlyphs" font-weight="bold">Przesunięcie</text>
<text x="12" y="410.5" font-size="12" fill="#d8d8d8" textLength="55.0" lengthAdjust="spacingAndGlyphs">Przesunięcie:</text>
<rect x="70" y="391.5" width="31.5" height="31" fill="#232323" rx="4" />
<path d="M78,402 L96,402 L93,407 L76,407Z M78,409 L94,409 L92,414 L76,414Z" fill="#bebebe"/><path d="M80,399 L95,399" stroke="#bebebe" stroke-width="1.5"/>
<rect x="110.5" y="399.5" width="15" height="15" fill="#5c5c5c" stroke="#d0d0d0" stroke-width="1" stroke-dasharray="1.5,1"/>
<path d="M143,414 L157,400" stroke="#bebebe" stroke-width="1.4"/><circle cx="143" cy="414" r="2" fill="#bebebe"/><circle cx="157" cy="400" r="2" fill="#bebebe"/><rect x="148" y="405" width="4" height="4" fill="#bebebe"/>
<text xml:space="preserve" x="12" y="438" font-size="12" fill="#d8d8d8" textLength="122.0" lengthAdjust="spacingAndGlyphs">Przełącznik narzędzia  (Shift)</text>
<circle cx="37.3" cy="458.3" r="6.5" fill="#121212"/><circle cx="37.3" cy="458.3" r="2.3" fill="#f0f0f0"/>
<text x="55.5" y="462" font-size="12" fill="#8e8e8e" textLength="129.0" lengthAdjust="spacingAndGlyphs">Wybór warstwy lub prowadnicy</text>
<circle cx="37.3" cy="490.4" r="6.5" fill="#121212"/>
<text x="55.5" y="494" font-size="12" fill="#d8d8d8" textLength="148.0" lengthAdjust="spacingAndGlyphs">Przemieszczenie aktywnej warstwy</text>
<rect x="9" y="1021" width="255" height="36" fill="#3e3e3e" />
<rect x="8" y="1056" width="257" height="1" fill="#5a5a5a" />
<g fill="#bebebe"><rect x="40.5" y="1028" width="2" height="7"/><path d="M37,1033 L46,1033 L41.5,1038Z"/><path d="M35,1037 L35,1045 L48,1045 L48,1037 L46,1037 L46,1043 L37,1043 L37,1037Z"/><rect x="37" y="1041" width="9" height="2" fill="#8a8a8a"/></g>
<path d="M99,1033 A6,6 0 1 0 103,1031" stroke="#bebebe" stroke-width="2" fill="none"/><path d="M98,1028 L98,1035 L104,1034Z" fill="#bebebe"/>
<rect x="158" y="1030" width="16" height="16" fill="#bebebe"/><path d="M160,1032 L172,1044 M172,1032 L160,1044" stroke="#3e3e3e" stroke-width="2.5"/>
<path d="M224,1035 A6,6 0 1 1 228,1044" stroke="#bebebe" stroke-width="2" fill="none"/><path d="M221,1031 L222,1038 L228,1035Z" fill="#bebebe"/><circle cx="225" cy="1043" r="2.2" fill="#bebebe"/>
<rect x="261" y="372" width="3" height="685" fill="#3b3b3b" />
<rect x="264" y="372" width="1" height="685" fill="#585858" />
<rect x="273" y="60" width="1" height="997" fill="#585858" />
<rect x="274" y="122" width="2" height="935" fill="#3d3d3d" />
<circle cx="269" cy="552" r="2.1" fill="#bdbdbd"/>
<circle cx="269" cy="559" r="2.1" fill="#bdbdbd"/>
<circle cx="269" cy="566" r="2.1" fill="#bdbdbd"/>
<rect x="273.5" y="61.5" width="95" height="62" fill="#3b3b3b" stroke="#575757" stroke-width="1" />
<rect x="274" y="121" width="94" height="3" fill="#3b3b3b" />
<rect x="368" y="122" width="1249" height="1" fill="#585858" />
<rect x="280" y="68" width="48" height="48" fill="url(#chkth)"/>
<use href="#cave" transform="translate(280,68) scale(0.07038) translate(-603,-232)"/>
<rect x="338.5" y="85.5" width="13" height="13" fill="none" stroke="#b8b8b8" stroke-width="1.3"/><path d="M341,88 L349,96 M349,88 L341,96" stroke="#b8b8b8" stroke-width="1.2"/>
<rect x="1616" y="122" width="1" height="935" fill="#585858" />
<rect x="1613" y="123" width="3" height="934" fill="#3d3d3d" />
<rect x="276" y="123" width="1337" height="18" fill="#454545" />
<rect x="277.5" y="126.5" width="13" height="13" fill="#5a5a5a" stroke="#b8b8b8" stroke-width="1"/><path d="M281,129 L288,133 L281,137Z" fill="#d0d0d0"/>
<rect x="291" y="140" width="1305" height="1" fill="#e2e2e2" />
<path d="M294.5,137V140 M303.5,134V140 M311.5,137V140 M319.5,134V140 M328.5,137V140 M336.5,134V140 M344.5,137V140 M353.5,127V140 M361.5,137V140 M369.5,134V140 M378.5,137V140 M386.5,134V140 M394.5,137V140 M403.5,134V140 M411.5,137V140 M419.5,134V140 M428.5,137V140 M436.5,127V140 M444.5,137V140 M453.5,134V140 M461.5,137V140 M470.5,134V140 M478.5,137V140 M486.5,134V140 M495.5,137V140 M503.5,134V140 M511.5,137V140 M520.5,127V140 M528.5,137V140 M536.5,134V140 M545.5,137V140 M553.5,134V140 M561.5,137V140 M570.5,134V140 M578.5,137V140 M586.5,134V140 M595.5,137V140 M603.5,127V140 M611.5,137V140 M620.5,134V140 M628.5,137V140 M636.5,134V140 M645.5,137V140 M653.5,134V140 M661.5,137V140 M670.5,134V140 M678.5,137V140 M686.5,127V140 M695.5,137V140 M703.5,134V140 M711.5,137V140 M720.5,134V140 M728.5,137V140 M736.5,134V140 M745.5,137V140 M753.5,134V140 M761.5,137V140 M770.5,127V140 M778.5,137V140 M786.5,134V140 M795.5,137V140 M803.5,134V140 M811.5,137V140 M820.5,134V140 M828.5,137V140 M836.5,134V140 M845.5,137V140 M853.5,127V140 M861.5,137V140 M870.5,134V140 M878.5,137V140 M886.5,134V140 M895.5,137V140 M903.5,134V140 M911.5,137V140 M920.5,134V140 M928.5,137V140 M936.5,127V140 M945.5,137V140 M953.5,134V140 M961.5,137V140 M970.5,134V140 M978.5,137V140 M986.5,134V140 M995.5,137V140 M1003.5,134V140 M1011.5,137V140 M1020.5,127V140 M1028.5,137V140 M1036.5,134V140 M1045.5,137V140 M1053.5,134V140 M1061.5,137V140 M1070.5,134V140 M1078.5,137V140 M1086.5,134V140 M1095.5,137V140 M1103.5,127V140 M1111.5,137V140 M1120.5,134V140 M1128.5,137V140 M1136.5,134V140 M1145.5,137V140 M1153.5,134V140 M1161.5,137V140 M1170.5,134V140 M1178.5,137V140 M1187.5,127V140 M1195.5,137V140 M1203.5,134V140 M1212.5,137V140 M1220.5,134V140 M1228.5,137V140 M1237.5,134V140 M1245.5,137V140 M1253.5,134V140 M1262.5,137V140 M1270.5,127V140 M1278.5,137V140 M1287.5,134V140 M1295.5,137V140 M1303.5,134V140 M1312.5,137V140 M1320.5,134V140 M1328.5,137V140 M1337.5,134V140 M1345.5,137V140 M1353.5,127V140 M1362.5,137V140 M1370.5,134V140 M1378.5,137V140 M1387.5,134V140 M1395.5,137V140 M1403.5,134V140 M1412.5,137V140 M1420.5,134V140 M1428.5,137V140 M1437.5,127V140 M1445.5,137V140 M1453.5,134V140 M1462.5,137V140 M1470.5,134V140 M1478.5,137V140 M1487.5,134V140 M1495.5,137V140 M1503.5,134V140 M1512.5,137V140 M1520.5,127V140 M1528.5,137V140 M1537.5,134V140 M1545.5,137V140 M1553.5,134V140 M1562.5,137V140 M1570.5,134V140 M1578.5,137V140 M1587.5,134V140" stroke="#e2e2e2" stroke-width="1"/>
<text x="354.5832788634696" y="136" font-size="8.5" fill="#cfcfcf" textLength="15.2" lengthAdjust="spacingAndGlyphs">-750</text>
<text x="437.9555192423131" y="136" font-size="8.5" fill="#cfcfcf" textLength="15.2" lengthAdjust="spacingAndGlyphs">-500</text>
<text x="521.3277596211565" y="136" font-size="8.5" fill="#cfcfcf" textLength="15.2" lengthAdjust="spacingAndGlyphs">-250</text>
<text x="604.6999999999999" y="136" font-size="8.5" fill="#cfcfcf" textLength="4.0" lengthAdjust="spacingAndGlyphs">0</text>
<text x="688.0722403788434" y="136" font-size="8.5" fill="#cfcfcf" textLength="11.9" lengthAdjust="spacingAndGlyphs">250</text>
<text x="771.4444807576868" y="136" font-size="8.5" fill="#cfcfcf" textLength="11.9" lengthAdjust="spacingAndGlyphs">500</text>
<text x="854.8167211365303" y="136" font-size="8.5" fill="#cfcfcf" textLength="11.9" lengthAdjust="spacingAndGlyphs">750</text>
<text x="938.1889615153738" y="136" font-size="8.5" fill="#cfcfcf" textLength="15.8" lengthAdjust="spacingAndGlyphs">1000</text>
<text x="1021.5612018942172" y="136" font-size="8.5" fill="#cfcfcf" textLength="15.8" lengthAdjust="spacingAndGlyphs">1250</text>
<text x="1104.9334422730606" y="136" font-size="8.5" fill="#cfcfcf" textLength="15.8" lengthAdjust="spacingAndGlyphs">1500</text>
<text x="1188.3056826519041" y="136" font-size="8.5" fill="#cfcfcf" textLength="15.8" lengthAdjust="spacingAndGlyphs">1750</text>
<text x="1271.6779230307477" y="136" font-size="8.5" fill="#cfcfcf" textLength="15.8" lengthAdjust="spacingAndGlyphs">2000</text>
<text x="1355.050163409591" y="136" font-size="8.5" fill="#cfcfcf" textLength="15.8" lengthAdjust="spacingAndGlyphs">2250</text>
<text x="1438.4224037884344" y="136" font-size="8.5" fill="#cfcfcf" textLength="15.8" lengthAdjust="spacingAndGlyphs">2500</text>
<text x="1521.794644167278" y="136" font-size="8.5" fill="#cfcfcf" textLength="15.8" lengthAdjust="spacingAndGlyphs">2750</text>
<rect x="276" y="141" width="16" height="866" fill="#454545" />
<rect x="291" y="141" width="1" height="864" fill="#e2e2e2" />
<path d="M278,148.5H291 M288,157.5H291 M286,165.5H291 M288,173.5H291 M286,182.5H291 M288,190.5H291 M286,198.5H291 M288,207.5H291 M286,215.5H291 M288,223.5H291 M278,232.5H291 M288,240.5H291 M286,248.5H291 M288,257.5H291 M286,265.5H291 M288,273.5H291 M286,282.5H291 M288,290.5H291 M286,298.5H291 M288,307.5H291 M278,315.5H291 M288,324.5H291 M286,332.5H291 M288,340.5H291 M286,349.5H291 M288,357.5H291 M286,365.5H291 M288,374.5H291 M286,382.5H291 M288,390.5H291 M278,399.5H291 M288,407.5H291 M286,415.5H291 M288,424.5H291 M286,432.5H291 M288,440.5H291 M286,449.5H291 M288,457.5H291 M286,465.5H291 M288,474.5H291 M278,482.5H291 M288,490.5H291 M286,499.5H291 M288,507.5H291 M286,515.5H291 M288,524.5H291 M286,532.5H291 M288,540.5H291 M286,549.5H291 M288,557.5H291 M278,565.5H291 M288,574.5H291 M286,582.5H291 M288,590.5H291 M286,599.5H291 M288,607.5H291 M286,615.5H291 M288,624.5H291 M286,632.5H291 M288,640.5H291 M278,649.5H291 M288,657.5H291 M286,665.5H291 M288,674.5H291 M286,682.5H291 M288,690.5H291 M286,699.5H291 M288,707.5H291 M286,715.5H291 M288,724.5H291 M278,732.5H291 M288,740.5H291 M286,749.5H291 M288,757.5H291 M286,765.5H291 M288,774.5H291 M286,782.5H291 M288,790.5H291 M286,799.5H291 M288,807.5H291 M278,815.5H291 M288,824.5H291 M286,832.5H291 M288,840.5H291 M286,849.5H291 M288,857.5H291 M286,865.5H291 M288,874.5H291 M286,882.5H291 M288,890.5H291 M278,899.5H291 M288,907.5H291 M286,915.5H291 M288,924.5H291 M286,932.5H291 M288,940.5H291 M286,949.5H291 M288,957.5H291 M286,965.5H291 M288,974.5H291 M278,982.5H291 M288,990.5H291 M286,999.5H291" stroke="#e2e2e2" stroke-width="1"/>
<rect x="279" y="154.42775962115655" width="2.5" height="1" fill="#cfcfcf" />
<text x="280.3" y="166.9" font-size="8.5" fill="#cfcfcf" text-anchor="middle">2</text>
<text x="280.3" y="175.9" font-size="8.5" fill="#cfcfcf" text-anchor="middle">5</text>
<text x="280.3" y="184.9" font-size="8.5" fill="#cfcfcf" text-anchor="middle">0</text>
<text x="280.3" y="241.3" font-size="8.5" fill="#cfcfcf" text-anchor="middle">0</text>
<text x="280.3" y="324.7" font-size="8.5" fill="#cfcfcf" text-anchor="middle">2</text>
<text x="280.3" y="333.7" font-size="8.5" fill="#cfcfcf" text-anchor="middle">5</text>
<text x="280.3" y="342.7" font-size="8.5" fill="#cfcfcf" text-anchor="middle">0</text>
<text x="280.3" y="408.0" font-size="8.5" fill="#cfcfcf" text-anchor="middle">5</text>
<text x="280.3" y="417.0" font-size="8.5" fill="#cfcfcf" text-anchor="middle">0</text>
<text x="280.3" y="426.0" font-size="8.5" fill="#cfcfcf" text-anchor="middle">0</text>
<text x="280.3" y="491.4" font-size="8.5" fill="#cfcfcf" text-anchor="middle">7</text>
<text x="280.3" y="500.4" font-size="8.5" fill="#cfcfcf" text-anchor="middle">5</text>
<text x="280.3" y="509.4" font-size="8.5" fill="#cfcfcf" text-anchor="middle">0</text>
<text x="280.3" y="574.8" font-size="8.5" fill="#cfcfcf" text-anchor="middle">1</text>
<text x="280.3" y="583.8" font-size="8.5" fill="#cfcfcf" text-anchor="middle">0</text>
<text x="280.3" y="592.8" font-size="8.5" fill="#cfcfcf" text-anchor="middle">0</text>
<text x="280.3" y="601.8" font-size="8.5" fill="#cfcfcf" text-anchor="middle">0</text>
<text x="280.3" y="658.2" font-size="8.5" fill="#cfcfcf" text-anchor="middle">1</text>
<text x="280.3" y="667.2" font-size="8.5" fill="#cfcfcf" text-anchor="middle">2</text>
<text x="280.3" y="676.2" font-size="8.5" fill="#cfcfcf" text-anchor="middle">5</text>
<text x="280.3" y="685.2" font-size="8.5" fill="#cfcfcf" text-anchor="middle">0</text>
<text x="280.3" y="741.5" font-size="8.5" fill="#cfcfcf" text-anchor="middle">1</text>
<text x="280.3" y="750.5" font-size="8.5" fill="#cfcfcf" text-anchor="middle">5</text>
<text x="280.3" y="759.5" font-size="8.5" fill="#cfcfcf" text-anchor="middle">0</text>
<text x="280.3" y="768.5" font-size="8.5" fill="#cfcfcf" text-anchor="middle">0</text>
<text x="280.3" y="824.9" font-size="8.5" fill="#cfcfcf" text-anchor="middle">1</text>
<text x="280.3" y="833.9" font-size="8.5" fill="#cfcfcf" text-anchor="middle">7</text>
<text x="280.3" y="842.9" font-size="8.5" fill="#cfcfcf" text-anchor="middle">5</text>
<text x="280.3" y="851.9" font-size="8.5" fill="#cfcfcf" text-anchor="middle">0</text>
<text x="280.3" y="908.3" font-size="8.5" fill="#cfcfcf" text-anchor="middle">2</text>
<text x="280.3" y="917.3" font-size="8.5" fill="#cfcfcf" text-anchor="middle">0</text>
<text x="280.3" y="926.3" font-size="8.5" fill="#cfcfcf" text-anchor="middle">0</text>
<text x="280.3" y="935.3" font-size="8.5" fill="#cfcfcf" text-anchor="middle">0</text>
<text x="280.3" y="991.7" font-size="8.5" fill="#cfcfcf" text-anchor="middle">2</text>
<text x="280.3" y="1000.7" font-size="8.5" fill="#cfcfcf" text-anchor="middle">2</text>
<rect x="1599" y="127.5" width="12" height="12.5" fill="#c0c0c0"/><circle cx="1605" cy="133.5" r="3.8" fill="#8c8c8c" stroke="#3a3a3a" stroke-width="1.6"/><path d="M1607.5,136 L1610.5,139.5" stroke="#3a3a3a" stroke-width="1.8"/>
<path d="M818.5,134 L826.5,134 L822.5,140Z" fill="#d8d8d8"/>
<path d="M285.5,588 L285.5,597 L291,592.5Z" fill="#d8d8d8"/>
<rect x="603" y="232" width="682" height="681" fill="url(#chk)"/>
<use href="#cave"/>
<rect x="898.5" y="601.5" width="123" height="141" fill="none" stroke="#000" stroke-width="1"/>
<rect x="898.5" y="601.5" width="123" height="141" fill="none" stroke="#e8e800" stroke-width="1" stroke-dasharray="4,4"/>
<g stroke-linecap="round"><path d="M815.3,580 V585 M815.3,592 V597 M807.3,588.5 H812 M819,588.5 H824" stroke="#fff" stroke-width="3.2"/><path d="M815.3,580 V585 M815.3,592 V597 M807.3,588.5 H812 M819,588.5 H824" stroke="#000" stroke-width="1.3"/></g>
<circle cx="835" cy="584" r="5.4" fill="#fff"/><circle cx="835" cy="584" r="4.3" fill="#000"/><circle cx="835" cy="584" r="2.3" fill="none" stroke="#fff" stroke-width="0.9"/><path d="M832.3,586.7 L837.7,581.3" stroke="#fff" stroke-width="1"/>
<path d="M832.4,598.3 L839.6,605.5 L832.4,612.7 L825.2,605.5Z" fill="#f0f0f0" stroke="#000" stroke-width="1"/><g fill="#000"><rect x="829.7" y="602.8" width="2" height="2"/><rect x="833.1" y="602.8" width="2" height="2"/><rect x="829.7" y="606.2" width="2" height="2"/><rect x="833.1" y="606.2" width="2" height="2"/></g>
<rect x="1597" y="144" width="15" height="861" fill="#2a2a2a" rx="2" />
<rect x="1598.5" y="145.5" width="12" height="858" fill="#5e5e5e" rx="2" />
<rect x="295" y="1007" width="1302" height="15" fill="#2a2a2a" rx="2" />
<rect x="296.5" y="1008.5" width="1299" height="12" fill="#5e5e5e" rx="2" />
<rect x="279.5" y="1009.5" width="11" height="11" fill="#5a5a5a" stroke="#cfcfcf" stroke-width="1" stroke-dasharray="1.5,1"/>
<path d="M1605.5,1008 L1612.5,1022 L1605.5,1018.5 L1598.5,1022Z" fill="#c8c8c8"/>
<rect x="273" y="1056" width="1344" height="1" fill="#5a5a5a" />
<rect x="276" y="1054" width="1337" height="2" fill="#404040" />
<text x="293.2" y="1043.5" font-size="12.5" fill="#d8d8d8" textLength="48.3" lengthAdjust="spacingAndGlyphs">660, 1083</text>
<rect x="358.5" y="1025.5" width="48" height="28" fill="#2a2a2a" rx="4" stroke="#1e1e1e" stroke-width="1" />
<text x="365" y="1043.5" font-size="12.5" fill="#d8d8d8" textLength="10.5" lengthAdjust="spacingAndGlyphs">px</text>
<path d="M388.5,1036.5 L393.8,1041.5 L399,1036.5" stroke="#e8e8e8" stroke-width="1.8" fill="none"/>
<rect x="408" y="1025" width="37" height="29" fill="#3a3a3a" />
<rect x="413.5" y="1032" width="26" height="14.7" fill="#1f1f1f" />
<text x="413.8" y="1043.5" font-size="11.5" fill="#d8d8d8" textLength="25.5" lengthAdjust="spacingAndGlyphs">33,3%</text>
<rect x="445.5" y="1025.5" width="20" height="28" fill="#2a2a2a" rx="4" stroke="#1e1e1e" stroke-width="1" />
<path d="M450.5,1036.5 L455.5,1041.5 L460.5,1036.5" stroke="#e8e8e8" stroke-width="1.8" fill="none"/>
<text x="468.2" y="1043.5" font-size="12.5" fill="#d8d8d8" textLength="140.5" lengthAdjust="spacingAndGlyphs">forearm.png. kopia (92,7 MB)</text>
<rect x="1617" y="60" width="9" height="997" fill="#454545" />
<rect x="1624.5" y="60" width="1" height="997" fill="#585858" />
<circle cx="1621" cy="552" r="2.1" fill="#bdbdbd"/>
<circle cx="1621" cy="559" r="2.1" fill="#bdbdbd"/>
<circle cx="1621" cy="566" r="2.1" fill="#bdbdbd"/>
<rect x="1625.5" y="89.5" width="302" height="311" fill="#454545" stroke="#585858" stroke-width="1" />
<rect x="1625.5" y="61.5" width="59.5" height="29" fill="#474747" stroke="#585858" stroke-width="1" />
<rect x="1626" y="89" width="58.5" height="2" fill="#474747" />
<rect x="1685.5" y="65" width="64" height="24.5" fill="#242424" />
<rect x="1751.5" y="65" width="66" height="24.5" fill="#242424" />
<rect x="1819.5" y="65" width="61" height="24.5" fill="#242424" />
<rect x="1630.5" y="67.5" width="17" height="17" fill="#fff" stroke="#111" stroke-width="1"/><rect x="1637.5" y="74.5" width="2" height="2" fill="#222"/><path d="M1647,78 L1647,84 L1641,84Z" fill="#7aa0ff"/>
<rect x="1690.5" y="68.5" width="17" height="17" fill="#f0a030" stroke="#111" stroke-width="1"/><rect x="1692" y="69" width="1.2" height="16" fill="#ffd070"/><rect x="1695" y="69" width="1.2" height="16" fill="#ffd070"/><rect x="1698" y="69" width="1.2" height="16" fill="#ffd070"/><rect x="1701" y="69" width="1.2" height="16" fill="#ffd070"/><rect x="1704" y="69" width="1.2" height="16" fill="#ffd070"/>
<rect x="1756" y="68" width="17.7" height="17" fill="#fff" stroke="#111" stroke-width="1"/>
<text x="1757.5" y="81.5" font-size="11" fill="#111" textLength="14.5" lengthAdjust="spacingAndGlyphs">Aa</text>
<rect x="1824" y="72.5" width="15.4" height="9" fill="#1a1a1a" stroke="#444" stroke-width="1"/><rect x="1826" y="75" width="11" height="2" fill="#3a3f50"/>
<text x="1650.4" y="78.8" font-size="12" fill="#d8d8d8" textLength="27.8" lengthAdjust="spacingAndGlyphs">Pędzle</text>
<text x="1710.5" y="81" font-size="12" fill="#d8d8d8" textLength="33.8" lengthAdjust="spacingAndGlyphs">Desenie</text>
<text x="1776" y="81" font-size="12" fill="#d8d8d8" textLength="36.3" lengthAdjust="spacingAndGlyphs">Czcionki</text>
<text x="1841.8" y="81" font-size="12" fill="#d8d8d8" textLength="32.2" lengthAdjust="spacingAndGlyphs">Historia</text>
<rect x="1909.5" y="72" width="10.5" height="10" fill="none" stroke="#a8a8a8" stroke-width="1.2"/><path d="M1917.5,74 L1912,77 L1917.5,80Z" fill="#a8a8a8"/>
<rect x="1628.8" y="92.8" width="295.4" height="34.5" fill="#3a3a3a" />
<rect x="1635.2" y="99.2" width="282.6" height="22.4" fill="#222222" />
<text x="1640" y="114" font-size="12" fill="#6a6a6a" textLength="41.5" lengthAdjust="spacingAndGlyphs" font-style="italic">filtrowanie</text>
<path d="M1902,108 L1906,112.5 L1910,108" stroke="#f0f0f0" stroke-width="1.8" fill="none"/>
<text x="1630.4" y="140.2" font-size="12" fill="#d0d0d0" textLength="60.0" lengthAdjust="spacingAndGlyphs" font-style="italic">1. Pixel (3 x 3)</text>
<rect x="1629.7" y="146" width="272.6" height="142" fill="#ffffff" />
<rect x="1902.5" y="146" width="6" height="142" fill="#2e2e2e" />
<rect x="1908.8" y="145" width="15" height="143" fill="#222" />
<rect x="1909.8" y="146.3" width="13.4" height="72.5" fill="#5a5a5a" rx="2" />
<rect x="1698.2" y="146.5" width="33" height="33" fill="none" stroke="#000" stroke-width="1.2"/><rect x="1713.7" y="162" width="2" height="2" fill="#222"/><path d="M1730.7,174 L1730.7,179 L1725.7,179Z" fill="#7aa0ff"/>
<rect x="1732.7" y="159" width="30" height="7" fill="#000"/>
<path d="M1760.7,172.5 V178.5 M1757.7,175.5 H1763.7" stroke="#1b2fa0" stroke-width="1.3"/>
<ellipse cx="1782.7" cy="163" rx="12" ry="4" fill="#000" filter="url(#bl1)"/>
<path d="M1794.7,172.5 V178.5 M1791.7,175.5 H1797.7" stroke="#1b2fa0" stroke-width="1.3"/>
<rect x="1801.7" y="162.5" width="30" height="1.2" fill="#000"/>
<path d="M1828.7,172.5 V178.5 M1825.7,175.5 H1831.7" stroke="#1b2fa0" stroke-width="1.3"/>
<circle cx="1850.7" cy="163" r="12" fill="url(#rg1)"/>
<path d="M1862.7,172.5 V178.5 M1859.7,175.5 H1865.7" stroke="#1b2fa0" stroke-width="1.3"/>
<circle cx="1884.7" cy="163" r="13" fill="url(#rg2)"/>
<path d="M1896.7,172.5 V178.5 M1893.7,175.5 H1899.7" stroke="#1b2fa0" stroke-width="1.3"/>
<circle cx="1646.7" cy="197" r="14" fill="url(#rg2)"/>
<path d="M1658.7,206.5 V212.5 M1655.7,209.5 H1661.7" stroke="#1b2fa0" stroke-width="1.3"/>
<circle cx="1680.7" cy="197" r="15.5" fill="#000"/>
<path d="M1692.7,206.5 V212.5 M1689.7,209.5 H1695.7" stroke="#1b2fa0" stroke-width="1.3"/>
<polygon points="1714.7,182.0 1718.2,191.1 1728.0,191.7 1720.4,197.9 1722.9,207.3 1714.7,202.0 1706.5,207.3 1709.0,197.9 1701.4,191.7 1711.2,191.1" fill="#000"/>
<path d="M1726.7,206.5 V212.5 M1723.7,209.5 H1729.7" stroke="#1b2fa0" stroke-width="1.3"/>
<g fill="#000" opacity="1.0"><circle cx="1746.8" cy="200.8" r="0.69"/><circle cx="1755.9" cy="200.5" r="0.52"/><circle cx="1756.0" cy="199.8" r="0.32"/><circle cx="1746.0" cy="198.2" r="0.35"/><circle cx="1739.8" cy="201.6" r="0.37"/><circle cx="1750.2" cy="205.6" r="0.87"/><circle cx="1742.6" cy="193.8" r="0.89"/><circle cx="1758.5" cy="199.9" r="0.47"/><circle cx="1751.0" cy="200.0" r="0.49"/><circle cx="1750.6" cy="192.7" r="0.65"/><circle cx="1744.4" cy="191.9" r="0.63"/><circle cx="1751.2" cy="198.0" r="0.42"/><circle cx="1745.7" cy="190.5" r="0.49"/><circle cx="1742.3" cy="193.2" r="0.48"/><circle cx="1751.2" cy="188.2" r="0.45"/><circle cx="1741.6" cy="193.4" r="0.83"/><circle cx="1747.9" cy="191.1" r="0.89"/><circle cx="1753.9" cy="201.8" r="0.75"/><circle cx="1753.1" cy="203.3" r="0.32"/><circle cx="1744.0" cy="188.6" r="0.64"/><circle cx="1753.1" cy="192.7" r="0.72"/><circle cx="1741.8" cy="192.3" r="0.57"/><circle cx="1754.4" cy="188.0" r="0.58"/><circle cx="1747.3" cy="194.7" r="0.72"/><circle cx="1742.1" cy="188.3" r="0.79"/><circle cx="1747.2" cy="203.7" r="0.70"/><circle cx="1756.1" cy="198.1" r="0.40"/><circle cx="1750.7" cy="198.8" r="0.76"/><circle cx="1752.5" cy="201.0" r="0.53"/><circle cx="1750.9" cy="194.7" r="0.57"/><circle cx="1738.9" cy="193.8" r="0.79"/><circle cx="1752.5" cy="192.6" r="0.55"/><circle cx="1742.2" cy="205.0" r="0.87"/><circle cx="1751.4" cy="200.8" r="0.44"/><circle cx="1749.5" cy="204.6" r="0.65"/><circle cx="1748.6" cy="197.7" r="0.55"/><circle cx="1743.1" cy="203.1" r="0.87"/><circle cx="1745.8" cy="189.6" r="0.67"/><circle cx="1747.6" cy="194.7" r="0.84"/><circle cx="1750.6" cy="186.9" r="0.78"/><circle cx="1743.3" cy="201.3" r="0.36"/><circle cx="1746.9" cy="194.9" r="0.34"/><circle cx="1749.8" cy="201.3" r="0.50"/><circle cx="1748.9" cy="197.1" r="0.39"/><circle cx="1754.0" cy="200.9" r="0.32"/><circle cx="1754.8" cy="190.9" r="0.39"/><circle cx="1748.6" cy="203.5" r="0.52"/><circle cx="1756.0" cy="204.1" r="0.90"/><circle cx="1741.2" cy="198.6" r="0.35"/><circle cx="1753.9" cy="200.9" r="0.46"/><circle cx="1750.8" cy="193.1" r="0.31"/><circle cx="1756.3" cy="194.6" r="0.39"/><circle cx="1747.0" cy="196.5" r="0.62"/><circle cx="1758.8" cy="195.6" r="0.72"/><circle cx="1748.2" cy="203.6" r="0.40"/><circle cx="1749.8" cy="189.0" r="0.77"/><circle cx="1746.2" cy="201.6" r="0.79"/><circle cx="1758.8" cy="196.0" r="0.78"/><circle cx="1752.6" cy="188.4" r="0.44"/><circle cx="1742.2" cy="196.3" r="0.32"/><circle cx="1754.4" cy="198.0" r="0.46"/><circle cx="1744.9" cy="186.9" r="0.57"/><circle cx="1758.8" cy="192.8" r="0.87"/><circle cx="1745.3" cy="200.9" r="0.44"/><circle cx="1750.3" cy="201.7" r="0.67"/><circle cx="1756.9" cy="191.1" r="0.59"/><circle cx="1743.1" cy="188.9" r="0.35"/><circle cx="1743.1" cy="188.1" r="0.77"/><circle cx="1748.7" cy="189.4" r="0.41"/><circle cx="1750.2" cy="190.8" r="0.78"/><circle cx="1755.5" cy="195.8" r="0.54"/><circle cx="1757.5" cy="193.9" r="0.40"/><circle cx="1751.7" cy="200.1" r="0.84"/><circle cx="1750.2" cy="193.1" r="0.80"/><circle cx="1757.5" cy="195.9" r="0.51"/><circle cx="1744.9" cy="195.8" r="0.31"/><circle cx="1757.4" cy="195.4" r="0.62"/><circle cx="1755.3" cy="194.1" r="0.82"/><circle cx="1751.0" cy="192.5" r="0.45"/><circle cx="1747.3" cy="202.2" r="0.65"/><circle cx="1748.3" cy="204.1" r="0.38"/><circle cx="1754.2" cy="193.5" r="0.57"/><circle cx="1739.6" cy="191.8" r="0.55"/><circle cx="1755.5" cy="193.1" r="0.62"/><circle cx="1747.2" cy="196.8" r="0.56"/><circle cx="1749.0" cy="197.6" r="0.78"/><circle cx="1752.2" cy="203.7" r="0.74"/><circle cx="1742.8" cy="194.8" r="0.61"/><circle cx="1739.5" cy="193.7" r="0.36"/><circle cx="1743.6" cy="195.0" r="0.47"/><circle cx="1749.8" cy="189.2" r="0.64"/><circle cx="1749.4" cy="186.5" r="0.57"/><circle cx="1742.8" cy="191.9" r="0.61"/><circle cx="1746.1" cy="190.1" r="0.62"/><circle cx="1738.1" cy="198.5" r="0.72"/><circle cx="1756.3" cy="189.5" r="0.46"/><circle cx="1738.8" cy="193.1" r="0.80"/><circle cx="1751.2" cy="199.9" r="0.57"/><circle cx="1753.5" cy="199.4" r="0.34"/><circle cx="1744.0" cy="188.5" r="0.84"/><circle cx="1754.0" cy="204.7" r="0.70"/><circle cx="1755.1" cy="205.1" r="0.88"/><circle cx="1750.7" cy="207.5" r="0.54"/><circle cx="1737.8" cy="197.9" r="0.80"/><circle cx="1752.5" cy="203.1" r="0.61"/><circle cx="1746.1" cy="201.1" r="0.49"/><circle cx="1748.4" cy="195.5" r="0.63"/><circle cx="1747.3" cy="197.5" r="0.50"/><circle cx="1743.1" cy="191.5" r="0.34"/><circle cx="1758.4" cy="196.1" r="0.88"/><circle cx="1753.2" cy="200.5" r="0.32"/><circle cx="1749.7" cy="191.4" r="0.38"/><circle cx="1739.4" cy="201.9" r="0.79"/><circle cx="1748.5" cy="201.2" r="0.85"/><circle cx="1740.4" cy="193.1" r="0.35"/><circle cx="1757.2" cy="200.2" r="0.56"/><circle cx="1758.3" cy="201.7" r="0.68"/><circle cx="1749.7" cy="194.0" r="0.81"/><circle cx="1758.0" cy="201.2" r="0.57"/><circle cx="1744.4" cy="203.9" r="0.86"/><circle cx="1748.3" cy="200.9" r="0.62"/><circle cx="1749.0" cy="200.6" r="0.40"/><circle cx="1753.4" cy="198.5" r="0.49"/><circle cx="1745.5" cy="206.0" r="0.47"/><circle cx="1744.1" cy="197.0" r="0.51"/><circle cx="1754.2" cy="197.6" r="0.31"/><circle cx="1747.8" cy="188.9" r="0.41"/><circle cx="1738.2" cy="198.7" r="0.36"/><circle cx="1751.7" cy="190.4" r="0.60"/><circle cx="1752.2" cy="191.1" r="0.60"/><circle cx="1744.5" cy="186.9" r="0.51"/><circle cx="1753.3" cy="189.0" r="0.68"/><circle cx="1743.3" cy="200.7" r="0.33"/><circle cx="1750.7" cy="199.1" r="0.74"/><circle cx="1748.5" cy="201.4" r="0.35"/><circle cx="1754.3" cy="188.4" r="0.70"/><circle cx="1747.6" cy="202.3" r="0.48"/><circle cx="1744.5" cy="198.1" r="0.57"/><circle cx="1747.8" cy="207.8" r="0.88"/><circle cx="1743.5" cy="195.4" r="0.88"/><circle cx="1746.3" cy="203.1" r="0.30"/><circle cx="1743.1" cy="202.1" r="0.60"/><circle cx="1751.1" cy="204.4" r="0.30"/><circle cx="1748.4" cy="200.3" r="0.54"/><circle cx="1750.3" cy="197.4" r="0.48"/><circle cx="1749.6" cy="205.4" r="0.62"/><circle cx="1748.7" cy="188.1" r="0.73"/><circle cx="1753.7" cy="192.3" r="0.50"/><circle cx="1752.9" cy="196.6" r="0.73"/><circle cx="1747.3" cy="195.2" r="0.80"/><circle cx="1755.5" cy="191.5" r="0.74"/><circle cx="1750.3" cy="193.2" r="0.61"/><circle cx="1738.7" cy="196.7" r="0.78"/><circle cx="1752.6" cy="189.5" r="0.84"/><circle cx="1745.0" cy="188.6" r="0.44"/><circle cx="1752.6" cy="197.8" r="0.52"/><circle cx="1756.6" cy="203.2" r="0.64"/><circle cx="1742.7" cy="190.7" r="0.71"/><circle cx="1748.1" cy="197.0" r="0.78"/><circle cx="1748.6" cy="189.2" r="0.62"/></g>
<path d="M1760.7,206.5 V212.5 M1757.7,209.5 H1763.7" stroke="#c01010" stroke-width="1.3"/>
<g fill="#000" opacity="1"><circle cx="1781.2" cy="195.3" r="0.56"/><circle cx="1782.7" cy="199.1" r="0.34"/><circle cx="1782.1" cy="193.5" r="0.56"/><circle cx="1790.3" cy="196.2" r="0.40"/><circle cx="1773.7" cy="197.8" r="0.57"/><circle cx="1776.2" cy="192.9" r="0.26"/><circle cx="1786.0" cy="200.1" r="0.56"/><circle cx="1779.9" cy="202.5" r="0.23"/><circle cx="1788.0" cy="198.5" r="0.53"/><circle cx="1779.5" cy="191.1" r="0.36"/><circle cx="1775.2" cy="196.5" r="0.43"/><circle cx="1790.3" cy="201.9" r="0.31"/><circle cx="1793.2" cy="196.0" r="0.23"/><circle cx="1773.1" cy="198.8" r="0.66"/><circle cx="1777.3" cy="198.2" r="0.32"/><circle cx="1787.5" cy="195.8" r="0.49"/><circle cx="1787.7" cy="201.3" r="0.65"/><circle cx="1789.4" cy="202.2" r="0.45"/><circle cx="1789.7" cy="192.8" r="0.33"/><circle cx="1788.8" cy="193.8" r="0.24"/><circle cx="1790.4" cy="197.1" r="0.43"/><circle cx="1781.4" cy="199.7" r="0.38"/><circle cx="1778.6" cy="203.5" r="0.23"/><circle cx="1782.7" cy="189.9" r="0.28"/><circle cx="1791.0" cy="194.1" r="0.63"/><circle cx="1781.0" cy="201.6" r="0.40"/><circle cx="1791.1" cy="197.0" r="0.39"/><circle cx="1777.5" cy="198.8" r="0.25"/><circle cx="1790.8" cy="201.2" r="0.35"/><circle cx="1787.7" cy="195.5" r="0.34"/><circle cx="1777.9" cy="196.8" r="0.39"/><circle cx="1792.7" cy="195.0" r="0.59"/><circle cx="1775.5" cy="191.6" r="0.65"/><circle cx="1773.8" cy="195.0" r="0.25"/><circle cx="1781.9" cy="191.9" r="0.56"/><circle cx="1779.1" cy="193.8" r="0.25"/><circle cx="1786.2" cy="195.8" r="0.44"/><circle cx="1779.4" cy="200.5" r="0.56"/><circle cx="1788.2" cy="196.4" r="0.52"/><circle cx="1780.1" cy="202.5" r="0.40"/><circle cx="1784.9" cy="199.7" r="0.32"/><circle cx="1789.1" cy="194.0" r="0.32"/><circle cx="1791.8" cy="192.7" r="0.43"/><circle cx="1785.8" cy="199.6" r="0.27"/><circle cx="1780.9" cy="198.9" r="0.33"/><circle cx="1782.3" cy="202.8" r="0.62"/><circle cx="1782.7" cy="192.1" r="0.41"/><circle cx="1776.0" cy="196.3" r="0.38"/><circle cx="1788.1" cy="198.5" r="0.66"/><circle cx="1788.2" cy="200.9" r="0.51"/><circle cx="1786.0" cy="194.3" r="0.35"/><circle cx="1782.8" cy="201.9" r="0.43"/><circle cx="1792.4" cy="195.0" r="0.62"/><circle cx="1784.7" cy="197.2" r="0.54"/><circle cx="1788.7" cy="193.8" r="0.49"/><circle cx="1789.6" cy="197.0" r="0.64"/><circle cx="1787.4" cy="190.7" r="0.66"/><circle cx="1782.7" cy="199.5" r="0.29"/><circle cx="1773.7" cy="196.1" r="0.65"/><circle cx="1781.1" cy="190.9" r="0.57"/><circle cx="1774.8" cy="198.5" r="0.24"/><circle cx="1783.8" cy="193.4" r="0.64"/><circle cx="1779.0" cy="193.6" r="0.28"/><circle cx="1782.6" cy="203.1" r="0.54"/><circle cx="1784.9" cy="198.3" r="0.46"/><circle cx="1776.8" cy="194.6" r="0.33"/><circle cx="1781.8" cy="196.5" r="0.36"/><circle cx="1772.3" cy="198.8" r="0.52"/><circle cx="1788.3" cy="193.5" r="0.33"/><circle cx="1782.9" cy="204.5" r="0.54"/><circle cx="1782.1" cy="198.1" r="0.45"/><circle cx="1779.4" cy="192.6" r="0.34"/><circle cx="1777.4" cy="190.6" r="0.33"/><circle cx="1788.9" cy="198.0" r="0.41"/><circle cx="1780.7" cy="193.9" r="0.58"/><circle cx="1782.2" cy="191.5" r="0.32"/><circle cx="1788.7" cy="196.2" r="0.59"/><circle cx="1783.3" cy="200.6" r="0.57"/><circle cx="1779.7" cy="204.2" r="0.45"/><circle cx="1784.7" cy="200.4" r="0.41"/><circle cx="1777.3" cy="190.5" r="0.29"/><circle cx="1778.7" cy="199.2" r="0.66"/><circle cx="1784.3" cy="198.4" r="0.25"/><circle cx="1774.5" cy="201.5" r="0.62"/><circle cx="1781.5" cy="189.4" r="0.64"/><circle cx="1780.4" cy="199.9" r="0.65"/><circle cx="1782.7" cy="195.6" r="0.52"/><circle cx="1777.8" cy="200.3" r="0.37"/><circle cx="1783.0" cy="197.4" r="0.35"/><circle cx="1776.3" cy="203.0" r="0.28"/><circle cx="1787.6" cy="196.2" r="0.39"/><circle cx="1787.0" cy="190.7" r="0.42"/><circle cx="1789.9" cy="198.6" r="0.39"/><circle cx="1786.9" cy="195.4" r="0.39"/><circle cx="1784.2" cy="196.2" r="0.41"/><circle cx="1786.3" cy="190.8" r="0.24"/><circle cx="1785.4" cy="197.4" r="0.64"/><circle cx="1782.3" cy="203.6" r="0.63"/><circle cx="1779.7" cy="200.4" r="0.66"/><circle cx="1778.5" cy="194.4" r="0.55"/><circle cx="1780.4" cy="200.7" r="0.23"/><circle cx="1783.1" cy="189.6" r="0.51"/><circle cx="1784.3" cy="196.6" r="0.33"/><circle cx="1772.1" cy="198.2" r="0.65"/><circle cx="1778.5" cy="199.5" r="0.42"/><circle cx="1772.1" cy="197.3" r="0.31"/><circle cx="1785.8" cy="190.7" r="0.60"/><circle cx="1783.9" cy="191.1" r="0.37"/><circle cx="1779.9" cy="201.2" r="0.58"/><circle cx="1787.0" cy="198.6" r="0.56"/></g>
<path d="M1794.7,206.5 V212.5 M1791.7,209.5 H1797.7" stroke="#c01010" stroke-width="1.3"/>
<g fill="#000" opacity="1"><circle cx="1816.7" cy="199.8" r="0.22"/><circle cx="1813.1" cy="195.0" r="0.61"/><circle cx="1821.6" cy="189.7" r="0.32"/><circle cx="1818.5" cy="198.7" r="0.41"/><circle cx="1815.6" cy="189.9" r="0.30"/><circle cx="1812.2" cy="201.3" r="0.48"/><circle cx="1816.6" cy="186.9" r="0.48"/><circle cx="1821.1" cy="204.0" r="0.33"/><circle cx="1813.0" cy="194.3" r="0.51"/><circle cx="1817.7" cy="202.2" r="0.31"/><circle cx="1820.2" cy="205.5" r="0.44"/><circle cx="1814.8" cy="203.1" r="0.62"/><circle cx="1813.5" cy="196.8" r="0.54"/><circle cx="1812.9" cy="188.0" r="0.25"/><circle cx="1810.8" cy="198.6" r="0.55"/><circle cx="1817.8" cy="195.9" r="0.33"/><circle cx="1818.8" cy="200.3" r="0.61"/><circle cx="1811.2" cy="191.7" r="0.36"/><circle cx="1819.6" cy="191.5" r="0.31"/><circle cx="1817.8" cy="186.5" r="0.25"/><circle cx="1812.4" cy="192.1" r="0.30"/><circle cx="1815.0" cy="200.0" r="0.29"/><circle cx="1816.5" cy="205.5" r="0.48"/><circle cx="1816.9" cy="198.1" r="0.34"/><circle cx="1815.5" cy="192.7" r="0.34"/><circle cx="1818.4" cy="206.4" r="0.43"/><circle cx="1818.6" cy="198.4" r="0.37"/><circle cx="1811.7" cy="194.3" r="0.24"/><circle cx="1819.5" cy="204.9" r="0.38"/><circle cx="1815.9" cy="203.0" r="0.60"/><circle cx="1814.8" cy="204.7" r="0.35"/><circle cx="1811.4" cy="202.1" r="0.62"/><circle cx="1814.8" cy="200.7" r="0.51"/><circle cx="1816.8" cy="197.8" r="0.58"/><circle cx="1811.4" cy="201.6" r="0.37"/><circle cx="1820.0" cy="192.0" r="0.27"/><circle cx="1821.6" cy="197.8" r="0.47"/><circle cx="1818.4" cy="195.2" r="0.46"/><circle cx="1813.5" cy="202.7" r="0.27"/><circle cx="1815.7" cy="204.8" r="0.59"/><circle cx="1820.3" cy="201.9" r="0.54"/><circle cx="1819.6" cy="196.0" r="0.26"/><circle cx="1822.8" cy="193.2" r="0.41"/><circle cx="1822.7" cy="200.5" r="0.37"/><circle cx="1821.0" cy="192.1" r="0.55"/><circle cx="1819.8" cy="205.2" r="0.30"/><circle cx="1811.7" cy="202.7" r="0.55"/><circle cx="1818.0" cy="201.7" r="0.37"/><circle cx="1812.6" cy="196.2" r="0.26"/><circle cx="1816.8" cy="206.4" r="0.58"/><circle cx="1821.5" cy="199.1" r="0.52"/><circle cx="1822.6" cy="199.4" r="0.25"/><circle cx="1812.7" cy="192.2" r="0.46"/><circle cx="1815.2" cy="203.7" r="0.45"/><circle cx="1811.9" cy="201.0" r="0.39"/><circle cx="1815.8" cy="197.6" r="0.46"/><circle cx="1813.5" cy="197.4" r="0.52"/><circle cx="1817.5" cy="189.7" r="0.28"/><circle cx="1814.6" cy="197.6" r="0.26"/><circle cx="1814.9" cy="198.4" r="0.39"/><circle cx="1815.4" cy="196.9" r="0.47"/><circle cx="1821.6" cy="201.7" r="0.53"/><circle cx="1815.2" cy="196.8" r="0.41"/><circle cx="1812.1" cy="204.4" r="0.26"/><circle cx="1820.8" cy="188.4" r="0.51"/><circle cx="1817.9" cy="192.6" r="0.61"/><circle cx="1810.3" cy="197.6" r="0.58"/><circle cx="1819.7" cy="205.4" r="0.59"/><circle cx="1820.3" cy="199.6" r="0.52"/><circle cx="1820.1" cy="205.8" r="0.32"/><circle cx="1817.7" cy="193.2" r="0.41"/><circle cx="1819.3" cy="194.6" r="0.31"/><circle cx="1813.0" cy="196.8" r="0.22"/><circle cx="1817.8" cy="201.0" r="0.59"/><circle cx="1814.0" cy="187.6" r="0.28"/><circle cx="1817.2" cy="193.4" r="0.43"/><circle cx="1814.1" cy="192.0" r="0.57"/><circle cx="1812.0" cy="194.2" r="0.57"/><circle cx="1821.9" cy="203.7" r="0.47"/><circle cx="1812.1" cy="203.1" r="0.32"/><circle cx="1821.7" cy="196.5" r="0.35"/><circle cx="1817.1" cy="189.7" r="0.28"/><circle cx="1816.6" cy="194.6" r="0.54"/><circle cx="1816.6" cy="205.8" r="0.61"/><circle cx="1812.1" cy="192.4" r="0.34"/><circle cx="1817.9" cy="197.0" r="0.27"/><circle cx="1813.5" cy="192.2" r="0.42"/><circle cx="1818.6" cy="194.6" r="0.30"/><circle cx="1816.1" cy="195.7" r="0.21"/><circle cx="1815.4" cy="199.8" r="0.35"/></g>
<path d="M1828.7,206.5 V212.5 M1825.7,209.5 H1831.7" stroke="#c01010" stroke-width="1.3"/>
<g fill="#000" opacity="0.7"><circle cx="1852.1" cy="205.3" r="0.41"/><circle cx="1853.2" cy="205.3" r="0.37"/><circle cx="1857.8" cy="205.0" r="0.28"/><circle cx="1852.7" cy="199.7" r="0.43"/><circle cx="1857.4" cy="190.0" r="0.34"/><circle cx="1850.6" cy="198.2" r="0.43"/><circle cx="1844.7" cy="194.5" r="0.43"/><circle cx="1840.7" cy="200.7" r="0.46"/><circle cx="1850.8" cy="207.5" r="0.20"/><circle cx="1843.8" cy="195.6" r="0.28"/><circle cx="1859.8" cy="200.5" r="0.19"/><circle cx="1840.6" cy="193.6" r="0.24"/><circle cx="1853.4" cy="205.1" r="0.38"/><circle cx="1844.5" cy="189.3" r="0.25"/><circle cx="1848.5" cy="202.6" r="0.21"/><circle cx="1858.2" cy="190.8" r="0.46"/><circle cx="1860.8" cy="197.4" r="0.47"/><circle cx="1841.5" cy="199.1" r="0.36"/><circle cx="1851.2" cy="200.5" r="0.27"/><circle cx="1856.9" cy="198.5" r="0.47"/><circle cx="1847.3" cy="187.5" r="0.45"/><circle cx="1849.9" cy="205.1" r="0.35"/><circle cx="1852.6" cy="189.3" r="0.29"/><circle cx="1843.9" cy="188.6" r="0.27"/><circle cx="1851.7" cy="196.1" r="0.29"/><circle cx="1851.5" cy="206.5" r="0.54"/><circle cx="1850.5" cy="190.7" r="0.52"/><circle cx="1848.2" cy="201.7" r="0.53"/><circle cx="1844.5" cy="190.3" r="0.44"/><circle cx="1858.2" cy="196.0" r="0.50"/><circle cx="1847.4" cy="187.4" r="0.35"/><circle cx="1849.4" cy="188.8" r="0.30"/><circle cx="1852.8" cy="205.4" r="0.22"/><circle cx="1854.2" cy="194.8" r="0.20"/><circle cx="1859.0" cy="203.6" r="0.32"/><circle cx="1851.9" cy="198.5" r="0.20"/><circle cx="1847.6" cy="188.8" r="0.45"/><circle cx="1850.5" cy="194.2" r="0.41"/><circle cx="1844.2" cy="204.5" r="0.49"/><circle cx="1852.9" cy="195.2" r="0.51"/><circle cx="1859.9" cy="191.5" r="0.23"/><circle cx="1851.7" cy="200.5" r="0.20"/><circle cx="1856.4" cy="188.9" r="0.43"/><circle cx="1854.7" cy="189.2" r="0.30"/><circle cx="1853.5" cy="199.0" r="0.47"/><circle cx="1852.4" cy="203.0" r="0.35"/><circle cx="1856.2" cy="197.7" r="0.29"/><circle cx="1849.3" cy="190.5" r="0.31"/><circle cx="1858.3" cy="195.2" r="0.51"/><circle cx="1849.3" cy="195.7" r="0.34"/><circle cx="1841.8" cy="200.8" r="0.32"/><circle cx="1848.4" cy="189.3" r="0.27"/><circle cx="1852.8" cy="194.5" r="0.49"/><circle cx="1850.9" cy="197.3" r="0.26"/><circle cx="1851.5" cy="186.2" r="0.19"/><circle cx="1843.0" cy="197.4" r="0.49"/><circle cx="1853.8" cy="204.1" r="0.32"/><circle cx="1853.5" cy="192.1" r="0.54"/><circle cx="1849.6" cy="202.0" r="0.45"/><circle cx="1847.1" cy="197.0" r="0.43"/><circle cx="1859.2" cy="201.8" r="0.45"/><circle cx="1852.7" cy="188.5" r="0.32"/><circle cx="1845.1" cy="201.0" r="0.52"/><circle cx="1859.6" cy="202.3" r="0.20"/><circle cx="1852.2" cy="202.4" r="0.53"/><circle cx="1843.9" cy="196.9" r="0.52"/><circle cx="1851.5" cy="204.4" r="0.39"/><circle cx="1851.0" cy="187.5" r="0.43"/><circle cx="1847.1" cy="202.1" r="0.25"/><circle cx="1855.6" cy="189.5" r="0.47"/><circle cx="1854.2" cy="203.4" r="0.48"/><circle cx="1847.3" cy="195.1" r="0.36"/><circle cx="1854.7" cy="193.5" r="0.26"/><circle cx="1847.8" cy="205.7" r="0.50"/><circle cx="1853.2" cy="200.6" r="0.28"/><circle cx="1847.0" cy="204.0" r="0.25"/><circle cx="1848.4" cy="201.2" r="0.55"/><circle cx="1850.2" cy="193.5" r="0.55"/><circle cx="1856.2" cy="201.1" r="0.56"/><circle cx="1853.3" cy="188.0" r="0.35"/><circle cx="1853.6" cy="205.3" r="0.23"/><circle cx="1852.6" cy="203.6" r="0.20"/><circle cx="1842.8" cy="202.8" r="0.45"/><circle cx="1842.0" cy="197.0" r="0.36"/><circle cx="1856.1" cy="203.6" r="0.34"/><circle cx="1850.1" cy="186.5" r="0.35"/><circle cx="1842.2" cy="192.7" r="0.35"/><circle cx="1852.0" cy="206.3" r="0.52"/><circle cx="1852.1" cy="187.9" r="0.51"/><circle cx="1846.9" cy="189.0" r="0.36"/><circle cx="1847.3" cy="205.0" r="0.22"/><circle cx="1842.2" cy="201.7" r="0.45"/><circle cx="1846.9" cy="193.0" r="0.35"/><circle cx="1842.4" cy="199.4" r="0.34"/><circle cx="1845.9" cy="187.5" r="0.26"/><circle cx="1845.2" cy="189.0" r="0.33"/><circle cx="1839.9" cy="197.7" r="0.20"/><circle cx="1846.5" cy="195.8" r="0.48"/><circle cx="1858.1" cy="194.1" r="0.23"/><circle cx="1843.5" cy="193.3" r="0.46"/><circle cx="1841.9" cy="196.3" r="0.50"/><circle cx="1843.7" cy="196.0" r="0.54"/><circle cx="1853.0" cy="205.8" r="0.33"/><circle cx="1851.0" cy="193.2" r="0.56"/><circle cx="1849.1" cy="199.1" r="0.29"/><circle cx="1849.7" cy="197.7" r="0.34"/><circle cx="1842.6" cy="201.4" r="0.32"/><circle cx="1850.2" cy="202.2" r="0.47"/><circle cx="1858.1" cy="194.1" r="0.27"/><circle cx="1852.9" cy="190.5" r="0.27"/><circle cx="1857.4" cy="204.0" r="0.49"/><circle cx="1845.7" cy="191.4" r="0.40"/><circle cx="1852.3" cy="207.7" r="0.32"/><circle cx="1844.3" cy="189.4" r="0.49"/><circle cx="1844.9" cy="198.2" r="0.39"/><circle cx="1857.8" cy="204.1" r="0.32"/><circle cx="1854.1" cy="192.4" r="0.33"/><circle cx="1850.5" cy="204.2" r="0.26"/><circle cx="1860.0" cy="197.2" r="0.29"/><circle cx="1850.9" cy="203.0" r="0.37"/></g>
<path d="M1862.7,206.5 V212.5 M1859.7,209.5 H1865.7" stroke="#c01010" stroke-width="1.3"/>
<g fill="#000" opacity="1.0"><circle cx="1874.6" cy="201.9" r="0.70"/><circle cx="1875.9" cy="207.3" r="0.81"/><circle cx="1896.6" cy="201.5" r="0.84"/><circle cx="1885.8" cy="191.9" r="0.80"/><circle cx="1883.6" cy="195.7" r="0.31"/><circle cx="1895.5" cy="193.6" r="0.45"/><circle cx="1888.9" cy="200.1" r="0.44"/><circle cx="1886.1" cy="188.9" r="0.39"/><circle cx="1895.0" cy="189.9" r="0.40"/><circle cx="1893.2" cy="190.1" r="0.77"/><circle cx="1878.2" cy="185.5" r="0.77"/><circle cx="1888.0" cy="191.7" r="0.72"/><circle cx="1872.9" cy="194.7" r="0.56"/><circle cx="1892.4" cy="190.0" r="0.46"/><circle cx="1885.2" cy="202.2" r="0.60"/><circle cx="1893.6" cy="200.4" r="0.39"/><circle cx="1874.8" cy="197.5" r="0.62"/><circle cx="1885.4" cy="196.1" r="0.80"/><circle cx="1874.4" cy="199.1" r="0.70"/><circle cx="1889.3" cy="189.8" r="0.55"/><circle cx="1888.4" cy="196.1" r="0.68"/><circle cx="1883.1" cy="195.2" r="0.67"/><circle cx="1879.1" cy="184.7" r="0.50"/><circle cx="1894.6" cy="195.9" r="0.59"/><circle cx="1886.8" cy="195.5" r="0.73"/><circle cx="1878.9" cy="191.2" r="0.82"/><circle cx="1878.3" cy="204.2" r="0.62"/><circle cx="1885.5" cy="190.6" r="0.56"/><circle cx="1875.5" cy="201.9" r="0.80"/><circle cx="1881.3" cy="209.3" r="0.54"/><circle cx="1877.4" cy="196.8" r="0.60"/><circle cx="1895.9" cy="195.2" r="0.78"/><circle cx="1880.9" cy="203.9" r="0.48"/><circle cx="1875.2" cy="191.2" r="0.77"/><circle cx="1896.2" cy="200.0" r="0.83"/><circle cx="1881.7" cy="196.1" r="0.48"/><circle cx="1890.8" cy="197.2" r="0.85"/><circle cx="1875.9" cy="189.8" r="0.77"/><circle cx="1893.9" cy="191.1" r="0.67"/><circle cx="1876.5" cy="188.6" r="0.66"/><circle cx="1882.0" cy="191.1" r="0.70"/><circle cx="1872.9" cy="200.2" r="0.36"/><circle cx="1885.8" cy="199.4" r="0.76"/><circle cx="1894.4" cy="191.2" r="0.52"/><circle cx="1890.2" cy="185.9" r="0.64"/><circle cx="1884.3" cy="204.7" r="0.55"/><circle cx="1880.9" cy="205.4" r="0.69"/><circle cx="1887.7" cy="195.7" r="0.64"/><circle cx="1889.4" cy="198.2" r="0.79"/><circle cx="1872.8" cy="190.9" r="0.57"/><circle cx="1893.4" cy="197.8" r="0.66"/><circle cx="1897.5" cy="191.7" r="0.59"/><circle cx="1880.9" cy="199.3" r="0.69"/><circle cx="1886.0" cy="202.3" r="0.31"/><circle cx="1896.3" cy="197.3" r="0.37"/><circle cx="1888.8" cy="196.1" r="0.82"/><circle cx="1886.0" cy="198.4" r="0.73"/><circle cx="1885.3" cy="209.0" r="0.41"/><circle cx="1896.4" cy="200.8" r="0.73"/><circle cx="1892.1" cy="187.6" r="0.35"/><circle cx="1876.6" cy="188.5" r="0.58"/><circle cx="1891.1" cy="194.1" r="0.88"/><circle cx="1884.4" cy="195.5" r="0.31"/><circle cx="1877.3" cy="186.7" r="0.35"/><circle cx="1880.2" cy="208.1" r="0.40"/><circle cx="1891.0" cy="189.5" r="0.34"/><circle cx="1877.6" cy="204.8" r="0.56"/><circle cx="1882.3" cy="192.2" r="0.78"/><circle cx="1877.4" cy="205.5" r="0.68"/><circle cx="1877.1" cy="201.3" r="0.77"/><circle cx="1896.4" cy="192.8" r="0.64"/><circle cx="1883.8" cy="200.3" r="0.88"/><circle cx="1881.0" cy="184.8" r="0.50"/><circle cx="1873.8" cy="188.5" r="0.80"/><circle cx="1878.4" cy="192.4" r="0.56"/><circle cx="1891.3" cy="191.4" r="0.71"/><circle cx="1874.1" cy="189.1" r="0.78"/><circle cx="1884.6" cy="197.6" r="0.46"/><circle cx="1875.2" cy="202.0" r="0.79"/><circle cx="1886.9" cy="195.1" r="0.80"/><circle cx="1889.6" cy="184.9" r="0.64"/><circle cx="1882.8" cy="209.8" r="0.78"/><circle cx="1879.4" cy="184.7" r="0.51"/><circle cx="1893.7" cy="202.3" r="0.78"/><circle cx="1888.4" cy="208.5" r="0.86"/><circle cx="1885.8" cy="207.9" r="0.71"/><circle cx="1878.5" cy="198.4" r="0.45"/><circle cx="1884.8" cy="184.5" r="0.58"/><circle cx="1895.4" cy="203.6" r="0.76"/><circle cx="1885.8" cy="207.6" r="0.84"/><circle cx="1892.3" cy="190.3" r="0.59"/><circle cx="1879.5" cy="193.8" r="0.42"/><circle cx="1889.6" cy="207.6" r="0.52"/><circle cx="1876.5" cy="193.5" r="0.61"/><circle cx="1886.5" cy="199.4" r="0.90"/><circle cx="1881.5" cy="200.2" r="0.68"/><circle cx="1886.0" cy="191.6" r="0.66"/><circle cx="1879.0" cy="205.3" r="0.31"/><circle cx="1898.3" cy="199.9" r="0.82"/><circle cx="1874.2" cy="197.9" r="0.46"/><circle cx="1886.4" cy="188.0" r="0.87"/><circle cx="1886.1" cy="184.4" r="0.88"/><circle cx="1884.6" cy="199.7" r="0.42"/><circle cx="1886.4" cy="200.7" r="0.33"/><circle cx="1872.5" cy="192.4" r="0.57"/><circle cx="1897.3" cy="192.6" r="0.34"/><circle cx="1877.5" cy="191.9" r="0.37"/><circle cx="1891.6" cy="195.2" r="0.64"/><circle cx="1876.0" cy="186.4" r="0.70"/><circle cx="1877.4" cy="202.8" r="0.40"/><circle cx="1898.3" cy="194.0" r="0.43"/><circle cx="1891.6" cy="198.7" r="0.51"/><circle cx="1895.6" cy="189.4" r="0.80"/><circle cx="1896.6" cy="200.6" r="0.73"/><circle cx="1876.3" cy="185.9" r="0.33"/><circle cx="1892.2" cy="206.6" r="0.86"/><circle cx="1881.3" cy="190.1" r="0.65"/><circle cx="1884.9" cy="192.5" r="0.49"/><circle cx="1884.5" cy="201.9" r="0.59"/><circle cx="1888.0" cy="203.0" r="0.39"/><circle cx="1884.0" cy="195.6" r="0.73"/><circle cx="1885.6" cy="199.5" r="0.86"/><circle cx="1887.2" cy="210.3" r="0.82"/><circle cx="1888.7" cy="193.6" r="0.57"/><circle cx="1895.8" cy="204.7" r="0.81"/><circle cx="1878.2" cy="190.2" r="0.50"/><circle cx="1889.0" cy="188.3" r="0.68"/><circle cx="1888.8" cy="202.2" r="0.33"/><circle cx="1882.3" cy="186.9" r="0.39"/><circle cx="1889.7" cy="191.8" r="0.55"/><circle cx="1888.8" cy="203.0" r="0.80"/><circle cx="1881.8" cy="201.9" r="0.59"/><circle cx="1879.2" cy="209.1" r="0.37"/><circle cx="1888.0" cy="196.6" r="0.84"/><circle cx="1881.5" cy="191.4" r="0.59"/><circle cx="1883.1" cy="203.9" r="0.42"/><circle cx="1875.5" cy="207.5" r="0.90"/><circle cx="1888.6" cy="195.0" r="0.47"/><circle cx="1887.4" cy="195.0" r="0.74"/><circle cx="1881.0" cy="210.3" r="0.31"/><circle cx="1887.6" cy="189.3" r="0.38"/><circle cx="1897.5" cy="197.2" r="0.62"/><circle cx="1888.3" cy="205.5" r="0.85"/><circle cx="1886.8" cy="207.4" r="0.38"/><circle cx="1889.9" cy="208.1" r="0.73"/><circle cx="1886.0" cy="200.7" r="0.35"/><circle cx="1877.0" cy="190.8" r="0.46"/><circle cx="1887.7" cy="207.5" r="0.72"/><circle cx="1888.7" cy="187.1" r="0.42"/><circle cx="1895.7" cy="201.8" r="0.54"/><circle cx="1884.1" cy="193.8" r="0.79"/><circle cx="1878.1" cy="208.0" r="0.82"/><circle cx="1883.0" cy="197.1" r="0.85"/><circle cx="1871.8" cy="198.9" r="0.46"/><circle cx="1889.7" cy="208.8" r="0.52"/><circle cx="1889.1" cy="204.3" r="0.66"/><circle cx="1894.8" cy="197.3" r="0.57"/><circle cx="1879.9" cy="196.5" r="0.73"/><circle cx="1890.0" cy="185.1" r="0.49"/><circle cx="1882.6" cy="188.6" r="0.75"/><circle cx="1896.8" cy="201.9" r="0.87"/><circle cx="1874.7" cy="197.3" r="0.62"/><circle cx="1882.7" cy="196.5" r="0.88"/><circle cx="1885.7" cy="202.9" r="0.36"/><circle cx="1884.7" cy="209.7" r="0.32"/><circle cx="1894.3" cy="203.7" r="0.42"/><circle cx="1895.5" cy="198.2" r="0.65"/><circle cx="1873.1" cy="195.3" r="0.36"/><circle cx="1892.8" cy="188.3" r="0.33"/><circle cx="1891.7" cy="203.9" r="0.60"/><circle cx="1883.8" cy="201.8" r="0.54"/><circle cx="1891.7" cy="205.2" r="0.82"/><circle cx="1891.1" cy="205.5" r="0.75"/><circle cx="1891.2" cy="207.9" r="0.86"/><circle cx="1877.8" cy="202.8" r="0.80"/><circle cx="1876.0" cy="195.6" r="0.86"/><circle cx="1886.1" cy="189.0" r="0.44"/><circle cx="1880.0" cy="205.0" r="0.89"/><circle cx="1889.2" cy="184.4" r="0.79"/><circle cx="1886.6" cy="194.4" r="0.61"/><circle cx="1897.8" cy="193.5" r="0.45"/><circle cx="1874.9" cy="202.2" r="0.52"/><circle cx="1881.1" cy="196.3" r="0.56"/><circle cx="1882.7" cy="196.9" r="0.38"/><circle cx="1896.8" cy="194.7" r="0.86"/><circle cx="1876.3" cy="187.6" r="0.83"/><circle cx="1886.6" cy="195.3" r="0.68"/><circle cx="1883.6" cy="208.5" r="0.46"/><circle cx="1871.7" cy="193.5" r="0.67"/><circle cx="1884.7" cy="207.1" r="0.56"/><circle cx="1891.9" cy="194.7" r="0.48"/><circle cx="1881.8" cy="193.1" r="0.66"/><circle cx="1894.4" cy="194.3" r="0.46"/><circle cx="1874.7" cy="199.1" r="0.39"/><circle cx="1888.3" cy="200.6" r="0.48"/><circle cx="1878.4" cy="201.2" r="0.45"/><circle cx="1893.5" cy="202.4" r="0.80"/><circle cx="1876.6" cy="190.3" r="0.69"/><circle cx="1888.3" cy="208.2" r="0.58"/><circle cx="1874.2" cy="193.7" r="0.58"/><circle cx="1882.1" cy="203.4" r="0.43"/><circle cx="1876.1" cy="196.3" r="0.65"/><circle cx="1893.0" cy="197.6" r="0.82"/><circle cx="1885.5" cy="207.4" r="0.59"/><circle cx="1881.7" cy="210.6" r="0.48"/><circle cx="1885.5" cy="191.5" r="0.34"/><circle cx="1891.1" cy="190.3" r="0.34"/><circle cx="1877.6" cy="203.0" r="0.74"/><circle cx="1889.8" cy="201.2" r="0.88"/><circle cx="1884.3" cy="191.5" r="0.50"/><circle cx="1877.8" cy="206.2" r="0.67"/><circle cx="1892.2" cy="186.7" r="0.61"/><circle cx="1883.8" cy="185.0" r="0.76"/><circle cx="1872.4" cy="198.9" r="0.73"/><circle cx="1889.0" cy="194.4" r="0.82"/><circle cx="1896.9" cy="197.3" r="0.65"/><circle cx="1871.0" cy="197.2" r="0.64"/><circle cx="1873.9" cy="203.1" r="0.82"/><circle cx="1878.0" cy="191.6" r="0.57"/><circle cx="1873.2" cy="200.1" r="0.48"/></g>
<path d="M1896.7,206.5 V212.5 M1893.7,209.5 H1899.7" stroke="#c01010" stroke-width="1.3"/>
<path d="M1637.7,218 L1640.7,225" stroke="#777" stroke-width="1.5"/><path d="M1660.7,240 L1660.7,245 L1655.7,245Z" fill="#ff7070"/>
<g fill="#000" opacity="1.0"><circle cx="1673.8" cy="236.7" r="0.60"/><circle cx="1676.0" cy="240.6" r="0.91"/><circle cx="1672.7" cy="231.0" r="0.46"/><circle cx="1679.2" cy="235.3" r="0.73"/><circle cx="1677.6" cy="229.3" r="0.96"/><circle cx="1675.8" cy="240.9" r="0.90"/><circle cx="1685.9" cy="229.6" r="0.63"/><circle cx="1681.7" cy="230.3" r="0.37"/><circle cx="1672.9" cy="227.6" r="0.96"/><circle cx="1682.0" cy="222.3" r="1.01"/><circle cx="1672.1" cy="230.1" r="0.80"/><circle cx="1675.2" cy="235.6" r="0.74"/><circle cx="1673.8" cy="240.4" r="0.79"/><circle cx="1677.0" cy="230.4" r="0.59"/></g>
<path d="M1692.7,240.5 V246.5 M1689.7,243.5 H1695.7" stroke="#000" stroke-width="1.3"/>
<g fill="#000" opacity="1.0"><circle cx="1706.8" cy="236.7" r="0.97"/><circle cx="1724.0" cy="222.2" r="0.89"/><circle cx="1705.1" cy="234.8" r="1.35"/><circle cx="1709.5" cy="238.9" r="1.18"/><circle cx="1718.2" cy="237.4" r="1.33"/><circle cx="1719.0" cy="222.7" r="0.55"/><circle cx="1723.2" cy="224.4" r="1.19"/><circle cx="1726.9" cy="230.2" r="0.83"/><circle cx="1718.6" cy="236.8" r="0.91"/><circle cx="1709.1" cy="230.8" r="0.61"/><circle cx="1707.8" cy="223.6" r="0.77"/><circle cx="1725.1" cy="230.6" r="0.49"/><circle cx="1704.9" cy="237.1" r="0.73"/><circle cx="1714.4" cy="230.2" r="0.72"/><circle cx="1720.1" cy="222.7" r="1.05"/><circle cx="1717.7" cy="239.7" r="0.95"/><circle cx="1713.6" cy="241.4" r="0.93"/><circle cx="1724.6" cy="230.8" r="0.82"/><circle cx="1718.4" cy="234.6" r="1.13"/><circle cx="1717.9" cy="233.6" r="0.60"/><circle cx="1703.0" cy="229.3" r="1.00"/><circle cx="1715.8" cy="228.0" r="0.46"/></g>
<path d="M1726.7,240.5 V246.5 M1723.7,243.5 H1729.7" stroke="#000" stroke-width="1.3"/>
<g fill="#000" opacity="1.0"><circle cx="1749.7" cy="223.1" r="0.46"/><circle cx="1745.2" cy="235.6" r="0.29"/><circle cx="1759.5" cy="238.8" r="0.41"/><circle cx="1743.2" cy="238.6" r="0.33"/><circle cx="1761.1" cy="235.5" r="0.41"/><circle cx="1757.7" cy="228.7" r="0.42"/><circle cx="1748.7" cy="233.9" r="0.54"/><circle cx="1753.5" cy="224.8" r="0.52"/><circle cx="1751.8" cy="223.9" r="0.41"/><circle cx="1758.2" cy="228.5" r="0.54"/><circle cx="1749.1" cy="239.7" r="0.46"/><circle cx="1750.1" cy="238.7" r="0.52"/><circle cx="1736.3" cy="232.2" r="0.28"/><circle cx="1752.6" cy="238.4" r="0.26"/><circle cx="1756.1" cy="229.7" r="0.40"/><circle cx="1756.4" cy="237.8" r="0.33"/><circle cx="1745.8" cy="233.0" r="0.23"/><circle cx="1752.5" cy="223.6" r="0.28"/><circle cx="1751.4" cy="238.0" r="0.28"/><circle cx="1759.8" cy="233.5" r="0.32"/><circle cx="1755.3" cy="240.8" r="0.22"/><circle cx="1747.1" cy="243.7" r="0.24"/><circle cx="1736.7" cy="235.5" r="0.49"/><circle cx="1753.2" cy="238.0" r="0.46"/><circle cx="1738.9" cy="240.6" r="0.27"/><circle cx="1758.2" cy="228.0" r="0.27"/><circle cx="1743.9" cy="232.5" r="0.45"/><circle cx="1747.8" cy="244.2" r="0.41"/><circle cx="1744.0" cy="236.1" r="0.42"/><circle cx="1751.7" cy="243.7" r="0.23"/></g>
<path d="M1760.7,240.5 V246.5 M1757.7,243.5 H1763.7" stroke="#000" stroke-width="1.3"/>
<g fill="#000" opacity="1.0"><circle cx="1772.4" cy="230.2" r="0.35"/><circle cx="1783.9" cy="222.4" r="0.52"/><circle cx="1775.6" cy="227.8" r="0.40"/><circle cx="1787.8" cy="234.0" r="0.61"/><circle cx="1777.8" cy="241.3" r="0.27"/><circle cx="1774.9" cy="227.8" r="0.45"/><circle cx="1781.7" cy="234.4" r="0.37"/><circle cx="1783.4" cy="235.9" r="0.55"/><circle cx="1780.9" cy="239.7" r="0.63"/><circle cx="1784.8" cy="218.0" r="0.61"/><circle cx="1787.7" cy="236.4" r="0.24"/><circle cx="1777.8" cy="220.7" r="0.38"/><circle cx="1773.0" cy="236.9" r="0.54"/><circle cx="1782.8" cy="243.9" r="0.38"/><circle cx="1778.6" cy="226.7" r="0.28"/><circle cx="1792.9" cy="224.7" r="0.55"/><circle cx="1785.4" cy="231.7" r="0.30"/><circle cx="1785.2" cy="238.3" r="0.40"/><circle cx="1790.3" cy="232.9" r="0.51"/><circle cx="1788.2" cy="242.6" r="0.48"/><circle cx="1781.2" cy="224.1" r="0.42"/><circle cx="1779.4" cy="223.4" r="0.23"/><circle cx="1788.9" cy="220.4" r="0.35"/><circle cx="1795.2" cy="234.5" r="0.50"/><circle cx="1789.3" cy="233.0" r="0.28"/><circle cx="1784.4" cy="224.8" r="0.64"/><circle cx="1782.7" cy="226.9" r="0.54"/><circle cx="1773.2" cy="238.5" r="0.60"/><circle cx="1781.9" cy="235.1" r="0.65"/><circle cx="1770.7" cy="237.2" r="0.54"/><circle cx="1781.8" cy="218.3" r="0.51"/><circle cx="1779.6" cy="232.0" r="0.54"/><circle cx="1773.7" cy="235.4" r="0.64"/><circle cx="1791.2" cy="239.8" r="0.24"/><circle cx="1779.0" cy="219.0" r="0.34"/><circle cx="1769.5" cy="227.0" r="0.51"/><circle cx="1776.0" cy="229.1" r="0.25"/><circle cx="1777.1" cy="238.0" r="0.32"/><circle cx="1780.8" cy="235.8" r="0.54"/><circle cx="1779.4" cy="225.0" r="0.33"/><circle cx="1773.4" cy="230.1" r="0.65"/><circle cx="1778.1" cy="237.2" r="0.62"/><circle cx="1789.3" cy="239.2" r="0.38"/><circle cx="1786.8" cy="221.5" r="0.57"/><circle cx="1788.3" cy="241.0" r="0.49"/><circle cx="1770.8" cy="234.0" r="0.60"/><circle cx="1788.4" cy="236.0" r="0.39"/><circle cx="1783.6" cy="234.3" r="0.35"/><circle cx="1786.5" cy="242.1" r="0.43"/><circle cx="1788.7" cy="236.2" r="0.44"/><circle cx="1779.0" cy="235.4" r="0.26"/><circle cx="1796.6" cy="231.9" r="0.56"/><circle cx="1792.9" cy="237.0" r="0.67"/><circle cx="1778.4" cy="229.2" r="0.44"/><circle cx="1777.1" cy="233.4" r="0.47"/><circle cx="1796.1" cy="231.7" r="0.52"/><circle cx="1773.3" cy="221.3" r="0.52"/><circle cx="1782.6" cy="237.9" r="0.29"/><circle cx="1794.8" cy="233.1" r="0.60"/><circle cx="1781.0" cy="236.8" r="0.51"/><circle cx="1790.3" cy="219.9" r="0.30"/><circle cx="1785.5" cy="218.5" r="0.56"/><circle cx="1779.9" cy="236.3" r="0.60"/><circle cx="1779.1" cy="238.7" r="0.47"/><circle cx="1774.0" cy="240.3" r="0.33"/><circle cx="1792.9" cy="233.7" r="0.51"/><circle cx="1787.7" cy="220.4" r="0.63"/><circle cx="1792.0" cy="227.7" r="0.45"/><circle cx="1786.9" cy="237.4" r="0.49"/><circle cx="1792.9" cy="236.6" r="0.30"/><circle cx="1769.8" cy="235.8" r="0.27"/><circle cx="1791.7" cy="233.3" r="0.31"/><circle cx="1782.6" cy="230.3" r="0.60"/><circle cx="1790.3" cy="221.2" r="0.42"/><circle cx="1780.3" cy="242.1" r="0.46"/><circle cx="1775.5" cy="234.9" r="0.42"/><circle cx="1776.3" cy="220.0" r="0.63"/><circle cx="1786.6" cy="237.5" r="0.42"/><circle cx="1775.1" cy="227.8" r="0.31"/><circle cx="1789.6" cy="235.1" r="0.43"/><circle cx="1795.8" cy="228.6" r="0.61"/><circle cx="1796.3" cy="228.8" r="0.50"/><circle cx="1784.0" cy="227.8" r="0.53"/><circle cx="1776.8" cy="226.2" r="0.48"/><circle cx="1792.0" cy="228.2" r="0.52"/><circle cx="1780.2" cy="238.8" r="0.62"/><circle cx="1788.7" cy="232.1" r="0.53"/><circle cx="1778.8" cy="232.3" r="0.52"/><circle cx="1775.3" cy="238.7" r="0.41"/><circle cx="1772.4" cy="229.0" r="0.40"/><circle cx="1787.2" cy="234.9" r="0.63"/><circle cx="1778.2" cy="229.6" r="0.61"/><circle cx="1782.6" cy="235.3" r="0.46"/><circle cx="1782.6" cy="240.8" r="0.47"/><circle cx="1784.3" cy="241.5" r="0.28"/><circle cx="1772.0" cy="230.1" r="0.26"/><circle cx="1779.5" cy="233.1" r="0.42"/><circle cx="1789.5" cy="223.1" r="0.55"/><circle cx="1782.9" cy="226.3" r="0.67"/><circle cx="1781.9" cy="226.6" r="0.60"/><circle cx="1778.2" cy="234.6" r="0.66"/><circle cx="1771.3" cy="226.2" r="0.29"/><circle cx="1783.2" cy="227.7" r="0.33"/><circle cx="1781.5" cy="232.2" r="0.49"/><circle cx="1784.5" cy="238.5" r="0.54"/><circle cx="1770.9" cy="236.9" r="0.50"/><circle cx="1790.0" cy="223.4" r="0.64"/><circle cx="1786.6" cy="226.8" r="0.56"/><circle cx="1776.1" cy="241.3" r="0.53"/><circle cx="1784.9" cy="226.6" r="0.39"/><circle cx="1781.6" cy="217.4" r="0.55"/><circle cx="1793.2" cy="233.9" r="0.27"/><circle cx="1770.7" cy="227.2" r="0.28"/><circle cx="1793.0" cy="225.8" r="0.34"/><circle cx="1786.0" cy="239.8" r="0.60"/><circle cx="1778.6" cy="228.7" r="0.23"/><circle cx="1792.3" cy="239.0" r="0.31"/><circle cx="1775.6" cy="228.5" r="0.53"/><circle cx="1778.8" cy="234.6" r="0.62"/><circle cx="1771.4" cy="228.2" r="0.59"/><circle cx="1784.3" cy="230.5" r="0.38"/><circle cx="1788.5" cy="239.1" r="0.62"/><circle cx="1783.5" cy="228.5" r="0.31"/><circle cx="1787.5" cy="220.5" r="0.40"/><circle cx="1777.2" cy="231.8" r="0.61"/><circle cx="1772.4" cy="239.1" r="0.50"/><circle cx="1789.8" cy="234.7" r="0.32"/><circle cx="1791.1" cy="224.4" r="0.24"/><circle cx="1786.8" cy="238.4" r="0.44"/><circle cx="1775.0" cy="226.9" r="0.38"/><circle cx="1793.3" cy="231.4" r="0.38"/><circle cx="1792.1" cy="232.2" r="0.67"/><circle cx="1787.8" cy="232.5" r="0.53"/><circle cx="1781.7" cy="238.2" r="0.45"/><circle cx="1781.9" cy="241.5" r="0.46"/><circle cx="1796.1" cy="227.3" r="0.24"/><circle cx="1771.3" cy="226.4" r="0.62"/><circle cx="1784.4" cy="220.0" r="0.51"/><circle cx="1777.9" cy="236.6" r="0.58"/><circle cx="1792.2" cy="221.3" r="0.53"/><circle cx="1778.6" cy="242.5" r="0.56"/><circle cx="1771.6" cy="230.4" r="0.38"/><circle cx="1774.2" cy="228.2" r="0.25"/><circle cx="1778.6" cy="237.8" r="0.67"/><circle cx="1774.3" cy="232.0" r="0.33"/><circle cx="1783.5" cy="239.2" r="0.29"/><circle cx="1795.8" cy="231.6" r="0.43"/><circle cx="1772.8" cy="234.5" r="0.36"/><circle cx="1784.5" cy="234.1" r="0.36"/><circle cx="1778.4" cy="242.1" r="0.47"/><circle cx="1790.2" cy="227.9" r="0.64"/><circle cx="1779.3" cy="229.0" r="0.31"/><circle cx="1770.5" cy="224.3" r="0.39"/><circle cx="1784.1" cy="221.9" r="0.62"/><circle cx="1791.6" cy="235.0" r="0.63"/><circle cx="1781.6" cy="238.0" r="0.24"/><circle cx="1786.4" cy="237.2" r="0.54"/><circle cx="1784.5" cy="239.7" r="0.32"/><circle cx="1772.3" cy="223.2" r="0.52"/><circle cx="1786.6" cy="242.3" r="0.66"/><circle cx="1779.5" cy="228.7" r="0.59"/><circle cx="1788.5" cy="225.2" r="0.29"/><circle cx="1786.6" cy="240.5" r="0.62"/><circle cx="1774.1" cy="220.6" r="0.32"/><circle cx="1777.1" cy="241.7" r="0.52"/><circle cx="1773.1" cy="237.5" r="0.38"/><circle cx="1791.1" cy="234.2" r="0.25"/><circle cx="1777.0" cy="225.2" r="0.45"/><circle cx="1776.9" cy="226.9" r="0.43"/><circle cx="1796.1" cy="232.1" r="0.48"/><circle cx="1786.0" cy="230.7" r="0.50"/><circle cx="1781.4" cy="223.1" r="0.27"/><circle cx="1785.6" cy="235.4" r="0.57"/><circle cx="1793.4" cy="237.8" r="0.42"/><circle cx="1772.3" cy="228.4" r="0.47"/><circle cx="1776.7" cy="221.9" r="0.37"/><circle cx="1782.3" cy="223.9" r="0.55"/><circle cx="1783.7" cy="218.7" r="0.36"/><circle cx="1784.7" cy="217.3" r="0.43"/><circle cx="1780.9" cy="241.0" r="0.65"/><circle cx="1783.6" cy="232.0" r="0.44"/><circle cx="1775.8" cy="220.8" r="0.39"/><circle cx="1789.4" cy="230.6" r="0.57"/><circle cx="1784.7" cy="232.3" r="0.29"/><circle cx="1791.9" cy="234.7" r="0.47"/><circle cx="1788.3" cy="243.3" r="0.39"/><circle cx="1786.2" cy="235.8" r="0.56"/><circle cx="1787.7" cy="228.3" r="0.24"/><circle cx="1783.9" cy="224.2" r="0.67"/><circle cx="1771.5" cy="231.1" r="0.38"/><circle cx="1785.7" cy="222.0" r="0.37"/><circle cx="1786.5" cy="228.4" r="0.56"/><circle cx="1793.0" cy="235.5" r="0.41"/><circle cx="1785.0" cy="228.4" r="0.48"/><circle cx="1771.4" cy="238.2" r="0.65"/><circle cx="1778.1" cy="226.3" r="0.34"/><circle cx="1782.0" cy="240.2" r="0.33"/><circle cx="1786.2" cy="242.7" r="0.51"/><circle cx="1778.5" cy="244.3" r="0.32"/><circle cx="1777.7" cy="228.7" r="0.61"/></g>
<path d="M1794.7,240.5 V246.5 M1791.7,243.5 H1797.7" stroke="#000" stroke-width="1.3"/>
<g fill="none" stroke="#000" stroke-width="0.7"><circle cx="1803.2" cy="226.5" r="2.6"/><circle cx="1803.2" cy="231.0" r="2.6"/><circle cx="1803.2" cy="235.5" r="2.6"/><circle cx="1807.7" cy="222.0" r="2.6"/><circle cx="1807.7" cy="226.5" r="2.6"/><circle cx="1807.7" cy="231.0" r="2.6"/><circle cx="1807.7" cy="235.5" r="2.6"/><circle cx="1807.7" cy="240.0" r="2.6"/><circle cx="1812.2" cy="217.5" r="2.6"/><circle cx="1812.2" cy="222.0" r="2.6"/><circle cx="1812.2" cy="226.5" r="2.6"/><circle cx="1812.2" cy="231.0" r="2.6"/><circle cx="1812.2" cy="235.5" r="2.6"/><circle cx="1812.2" cy="240.0" r="2.6"/><circle cx="1812.2" cy="244.5" r="2.6"/><circle cx="1816.7" cy="217.5" r="2.6"/><circle cx="1816.7" cy="222.0" r="2.6"/><circle cx="1816.7" cy="226.5" r="2.6"/><circle cx="1816.7" cy="231.0" r="2.6"/><circle cx="1816.7" cy="235.5" r="2.6"/><circle cx="1816.7" cy="240.0" r="2.6"/><circle cx="1816.7" cy="244.5" r="2.6"/><circle cx="1821.2" cy="217.5" r="2.6"/><circle cx="1821.2" cy="222.0" r="2.6"/><circle cx="1821.2" cy="226.5" r="2.6"/><circle cx="1821.2" cy="231.0" r="2.6"/><circle cx="1821.2" cy="235.5" r="2.6"/><circle cx="1821.2" cy="240.0" r="2.6"/><circle cx="1821.2" cy="244.5" r="2.6"/><circle cx="1825.7" cy="222.0" r="2.6"/><circle cx="1825.7" cy="226.5" r="2.6"/><circle cx="1825.7" cy="231.0" r="2.6"/><circle cx="1825.7" cy="235.5" r="2.6"/><circle cx="1825.7" cy="240.0" r="2.6"/><circle cx="1830.2" cy="226.5" r="2.6"/><circle cx="1830.2" cy="231.0" r="2.6"/><circle cx="1830.2" cy="235.5" r="2.6"/></g>
<path d="M1828.7,240.5 V246.5 M1825.7,243.5 H1831.7" stroke="#000" stroke-width="1.3"/>
<g fill="#000" opacity="1.0"><circle cx="1855.6" cy="225.7" r="0.66"/><circle cx="1854.0" cy="224.3" r="0.44"/><circle cx="1837.5" cy="232.2" r="0.35"/><circle cx="1846.3" cy="221.1" r="0.50"/><circle cx="1839.1" cy="224.7" r="0.37"/><circle cx="1857.0" cy="225.4" r="0.67"/><circle cx="1854.6" cy="226.5" r="0.72"/><circle cx="1858.3" cy="230.8" r="0.28"/><circle cx="1861.3" cy="239.9" r="0.27"/><circle cx="1855.3" cy="228.1" r="0.65"/><circle cx="1855.4" cy="234.3" r="0.62"/><circle cx="1857.6" cy="235.4" r="0.74"/><circle cx="1847.9" cy="218.1" r="0.78"/><circle cx="1857.3" cy="232.4" r="0.68"/><circle cx="1849.7" cy="228.5" r="0.53"/><circle cx="1851.8" cy="240.1" r="0.32"/><circle cx="1864.5" cy="232.7" r="0.43"/><circle cx="1854.2" cy="227.6" r="0.52"/><circle cx="1856.7" cy="237.9" r="0.36"/><circle cx="1848.6" cy="226.1" r="0.65"/><circle cx="1846.0" cy="231.0" r="0.45"/><circle cx="1837.3" cy="231.3" r="0.45"/><circle cx="1853.7" cy="244.4" r="0.73"/><circle cx="1849.8" cy="223.7" r="0.36"/><circle cx="1850.4" cy="234.7" r="0.29"/><circle cx="1841.8" cy="230.5" r="0.55"/><circle cx="1849.8" cy="232.1" r="0.62"/><circle cx="1844.8" cy="222.5" r="0.55"/><circle cx="1845.6" cy="218.1" r="0.72"/><circle cx="1848.9" cy="222.3" r="0.43"/><circle cx="1838.6" cy="237.7" r="0.47"/><circle cx="1844.0" cy="236.9" r="0.34"/><circle cx="1851.7" cy="231.0" r="0.58"/><circle cx="1857.0" cy="227.8" r="0.58"/><circle cx="1845.8" cy="235.8" r="0.37"/><circle cx="1860.3" cy="239.6" r="0.67"/><circle cx="1853.3" cy="229.3" r="0.63"/><circle cx="1845.6" cy="241.0" r="0.55"/><circle cx="1845.2" cy="243.6" r="0.26"/><circle cx="1850.4" cy="218.1" r="0.53"/><circle cx="1839.0" cy="223.4" r="0.39"/><circle cx="1842.4" cy="222.2" r="0.46"/><circle cx="1848.6" cy="222.5" r="0.54"/><circle cx="1842.0" cy="223.5" r="0.43"/><circle cx="1843.6" cy="223.5" r="0.38"/><circle cx="1845.2" cy="226.3" r="0.74"/><circle cx="1839.0" cy="233.0" r="0.54"/><circle cx="1844.2" cy="232.0" r="0.34"/><circle cx="1859.8" cy="226.5" r="0.54"/><circle cx="1838.3" cy="228.8" r="0.39"/><circle cx="1856.6" cy="242.2" r="0.50"/><circle cx="1842.6" cy="221.2" r="0.73"/><circle cx="1852.7" cy="228.8" r="0.46"/><circle cx="1856.9" cy="220.0" r="0.33"/><circle cx="1854.7" cy="236.8" r="0.32"/><circle cx="1842.9" cy="240.8" r="0.54"/><circle cx="1846.7" cy="232.2" r="0.47"/><circle cx="1862.4" cy="230.8" r="0.50"/><circle cx="1838.3" cy="232.7" r="0.66"/><circle cx="1857.5" cy="240.3" r="0.46"/><circle cx="1843.9" cy="230.1" r="0.46"/><circle cx="1846.1" cy="238.3" r="0.27"/><circle cx="1853.9" cy="241.1" r="0.29"/><circle cx="1855.9" cy="241.7" r="0.41"/><circle cx="1847.6" cy="237.2" r="0.70"/><circle cx="1860.1" cy="237.1" r="0.71"/><circle cx="1853.4" cy="239.7" r="0.68"/><circle cx="1844.4" cy="225.2" r="0.29"/><circle cx="1842.8" cy="234.0" r="0.64"/><circle cx="1848.2" cy="239.6" r="0.60"/><circle cx="1853.8" cy="223.3" r="0.46"/><circle cx="1838.8" cy="224.6" r="0.36"/><circle cx="1862.3" cy="228.9" r="0.46"/><circle cx="1846.6" cy="224.1" r="0.30"/><circle cx="1851.0" cy="222.4" r="0.54"/><circle cx="1837.4" cy="231.3" r="0.66"/><circle cx="1861.3" cy="232.7" r="0.51"/><circle cx="1838.2" cy="234.0" r="0.48"/><circle cx="1837.7" cy="233.2" r="0.49"/><circle cx="1840.7" cy="231.6" r="0.70"/><circle cx="1844.9" cy="220.4" r="0.47"/><circle cx="1861.9" cy="233.9" r="0.55"/><circle cx="1852.2" cy="218.8" r="0.32"/><circle cx="1851.4" cy="234.8" r="0.69"/><circle cx="1854.0" cy="233.5" r="0.66"/><circle cx="1847.7" cy="229.7" r="0.62"/><circle cx="1848.3" cy="221.6" r="0.29"/><circle cx="1847.4" cy="222.6" r="0.57"/><circle cx="1863.4" cy="230.8" r="0.72"/><circle cx="1855.6" cy="237.4" r="0.53"/><circle cx="1864.6" cy="231.5" r="0.41"/><circle cx="1850.1" cy="238.8" r="0.40"/><circle cx="1857.3" cy="222.9" r="0.53"/><circle cx="1847.9" cy="232.5" r="0.42"/><circle cx="1859.1" cy="221.7" r="0.71"/><circle cx="1850.4" cy="237.3" r="0.29"/><circle cx="1842.4" cy="229.0" r="0.51"/><circle cx="1840.0" cy="231.7" r="0.45"/><circle cx="1852.7" cy="225.1" r="0.75"/><circle cx="1847.7" cy="229.9" r="0.43"/><circle cx="1841.9" cy="229.2" r="0.56"/><circle cx="1847.4" cy="237.6" r="0.68"/><circle cx="1847.7" cy="242.4" r="0.68"/><circle cx="1842.8" cy="225.8" r="0.75"/><circle cx="1838.4" cy="235.5" r="0.29"/><circle cx="1840.5" cy="235.5" r="0.29"/><circle cx="1853.1" cy="228.1" r="0.58"/><circle cx="1856.4" cy="243.2" r="0.56"/><circle cx="1853.8" cy="221.6" r="0.62"/><circle cx="1847.2" cy="224.2" r="0.37"/><circle cx="1853.5" cy="226.5" r="0.74"/><circle cx="1851.9" cy="235.3" r="0.31"/><circle cx="1853.6" cy="217.7" r="0.48"/><circle cx="1846.8" cy="225.0" r="0.74"/><circle cx="1848.5" cy="225.9" r="0.29"/><circle cx="1849.7" cy="228.3" r="0.70"/><circle cx="1848.9" cy="237.5" r="0.57"/><circle cx="1846.3" cy="240.5" r="0.34"/><circle cx="1857.5" cy="226.8" r="0.70"/><circle cx="1857.9" cy="241.2" r="0.78"/><circle cx="1848.7" cy="232.6" r="0.46"/><circle cx="1846.5" cy="225.9" r="0.55"/><circle cx="1858.6" cy="236.3" r="0.64"/><circle cx="1840.3" cy="235.9" r="0.32"/><circle cx="1853.0" cy="226.7" r="0.75"/><circle cx="1864.3" cy="230.7" r="0.54"/><circle cx="1848.6" cy="239.0" r="0.66"/><circle cx="1837.2" cy="231.3" r="0.31"/><circle cx="1837.7" cy="232.2" r="0.58"/><circle cx="1846.7" cy="229.9" r="0.34"/><circle cx="1848.9" cy="244.1" r="0.71"/><circle cx="1852.6" cy="244.3" r="0.28"/><circle cx="1839.5" cy="223.0" r="0.44"/><circle cx="1861.4" cy="227.1" r="0.29"/><circle cx="1846.0" cy="239.1" r="0.39"/><circle cx="1850.4" cy="225.1" r="0.68"/><circle cx="1849.6" cy="234.5" r="0.56"/><circle cx="1859.3" cy="236.9" r="0.68"/><circle cx="1842.9" cy="225.6" r="0.28"/><circle cx="1846.3" cy="230.6" r="0.60"/><circle cx="1857.9" cy="238.8" r="0.45"/><circle cx="1842.7" cy="239.1" r="0.35"/><circle cx="1857.3" cy="242.9" r="0.44"/><circle cx="1857.9" cy="220.1" r="0.51"/><circle cx="1853.2" cy="234.5" r="0.72"/><circle cx="1858.0" cy="237.6" r="0.54"/><circle cx="1857.8" cy="237.4" r="0.35"/><circle cx="1841.0" cy="228.8" r="0.46"/><circle cx="1853.6" cy="239.4" r="0.37"/><circle cx="1855.5" cy="235.9" r="0.72"/><circle cx="1837.5" cy="230.9" r="0.27"/><circle cx="1859.9" cy="227.6" r="0.68"/><circle cx="1840.2" cy="226.0" r="0.38"/><circle cx="1850.7" cy="225.5" r="0.40"/><circle cx="1859.3" cy="232.7" r="0.53"/><circle cx="1847.3" cy="243.8" r="0.31"/><circle cx="1844.7" cy="227.8" r="0.58"/><circle cx="1853.2" cy="219.5" r="0.30"/><circle cx="1851.0" cy="241.8" r="0.78"/><circle cx="1861.3" cy="233.8" r="0.63"/><circle cx="1853.9" cy="223.5" r="0.69"/><circle cx="1837.7" cy="234.2" r="0.27"/><circle cx="1859.1" cy="227.7" r="0.48"/><circle cx="1856.6" cy="234.6" r="0.65"/><circle cx="1848.3" cy="226.1" r="0.44"/><circle cx="1854.7" cy="235.8" r="0.38"/><circle cx="1844.0" cy="243.1" r="0.79"/><circle cx="1853.2" cy="221.6" r="0.52"/><circle cx="1853.1" cy="217.9" r="0.66"/><circle cx="1846.6" cy="226.3" r="0.59"/><circle cx="1857.7" cy="220.8" r="0.31"/><circle cx="1849.0" cy="222.9" r="0.35"/><circle cx="1861.9" cy="228.5" r="0.65"/><circle cx="1859.1" cy="240.6" r="0.75"/><circle cx="1860.7" cy="224.2" r="0.70"/><circle cx="1854.2" cy="220.8" r="0.49"/><circle cx="1856.3" cy="220.0" r="0.72"/><circle cx="1846.5" cy="244.1" r="0.54"/><circle cx="1855.2" cy="229.4" r="0.77"/><circle cx="1852.3" cy="224.2" r="0.70"/><circle cx="1851.4" cy="237.2" r="0.50"/><circle cx="1851.5" cy="240.8" r="0.74"/><circle cx="1846.0" cy="220.2" r="0.47"/><circle cx="1853.3" cy="218.8" r="0.62"/><circle cx="1862.6" cy="226.4" r="0.48"/><circle cx="1860.4" cy="236.9" r="0.70"/><circle cx="1844.9" cy="240.1" r="0.70"/><circle cx="1851.0" cy="230.1" r="0.52"/><circle cx="1855.3" cy="231.5" r="0.69"/><circle cx="1841.2" cy="236.3" r="0.50"/><circle cx="1847.4" cy="236.6" r="0.45"/><circle cx="1856.9" cy="221.9" r="0.42"/><circle cx="1856.9" cy="234.8" r="0.63"/><circle cx="1840.1" cy="235.1" r="0.69"/><circle cx="1859.1" cy="239.0" r="0.28"/><circle cx="1853.4" cy="225.6" r="0.41"/><circle cx="1858.8" cy="228.8" r="0.38"/><circle cx="1859.1" cy="224.0" r="0.73"/><circle cx="1842.9" cy="237.1" r="0.76"/><circle cx="1836.8" cy="230.4" r="0.36"/><circle cx="1853.4" cy="226.1" r="0.54"/><circle cx="1856.6" cy="231.0" r="0.76"/><circle cx="1838.6" cy="234.5" r="0.39"/><circle cx="1848.0" cy="234.6" r="0.55"/><circle cx="1857.2" cy="223.4" r="0.46"/><circle cx="1862.6" cy="225.3" r="0.61"/><circle cx="1860.5" cy="236.1" r="0.50"/><circle cx="1858.8" cy="228.8" r="0.61"/><circle cx="1844.9" cy="224.7" r="0.54"/><circle cx="1844.8" cy="219.1" r="0.52"/><circle cx="1841.6" cy="241.4" r="0.29"/><circle cx="1856.6" cy="221.0" r="0.56"/><circle cx="1839.2" cy="234.9" r="0.73"/><circle cx="1849.1" cy="219.0" r="0.28"/><circle cx="1848.3" cy="235.6" r="0.76"/><circle cx="1854.8" cy="227.6" r="0.57"/><circle cx="1848.0" cy="229.6" r="0.47"/><circle cx="1850.5" cy="219.8" r="0.41"/><circle cx="1851.3" cy="223.5" r="0.55"/><circle cx="1838.5" cy="237.6" r="0.60"/><circle cx="1854.6" cy="220.2" r="0.46"/><circle cx="1862.2" cy="228.3" r="0.63"/><circle cx="1849.7" cy="236.5" r="0.56"/><circle cx="1856.4" cy="219.9" r="0.44"/><circle cx="1857.1" cy="238.7" r="0.72"/><circle cx="1857.0" cy="241.2" r="0.35"/><circle cx="1849.5" cy="234.0" r="0.42"/><circle cx="1840.5" cy="240.2" r="0.77"/><circle cx="1853.7" cy="238.2" r="0.76"/><circle cx="1853.3" cy="238.5" r="0.49"/><circle cx="1856.2" cy="235.5" r="0.47"/><circle cx="1840.4" cy="240.1" r="0.40"/><circle cx="1854.5" cy="243.8" r="0.50"/><circle cx="1856.5" cy="221.5" r="0.67"/><circle cx="1848.5" cy="236.0" r="0.66"/><circle cx="1840.4" cy="232.9" r="0.61"/><circle cx="1850.8" cy="223.7" r="0.45"/><circle cx="1859.5" cy="226.0" r="0.41"/><circle cx="1845.8" cy="225.8" r="0.67"/><circle cx="1863.0" cy="234.3" r="0.56"/></g>
<path d="M1862.7,240.5 V246.5 M1859.7,243.5 H1865.7" stroke="#c01010" stroke-width="1.3"/>
<g fill="#000" opacity="1.0"><circle cx="1876.5" cy="241.8" r="0.37"/><circle cx="1884.9" cy="234.7" r="0.51"/><circle cx="1885.0" cy="219.5" r="0.44"/><circle cx="1886.4" cy="226.6" r="0.39"/><circle cx="1876.2" cy="220.1" r="0.55"/><circle cx="1880.3" cy="219.5" r="0.44"/><circle cx="1895.9" cy="226.6" r="0.41"/><circle cx="1874.9" cy="238.9" r="0.41"/><circle cx="1889.8" cy="243.0" r="0.50"/><circle cx="1873.3" cy="229.5" r="0.68"/><circle cx="1890.1" cy="237.1" r="0.28"/><circle cx="1876.2" cy="236.1" r="0.66"/><circle cx="1879.4" cy="221.7" r="0.44"/><circle cx="1878.1" cy="227.7" r="0.66"/><circle cx="1887.8" cy="218.6" r="0.32"/><circle cx="1878.9" cy="220.3" r="0.49"/><circle cx="1895.4" cy="223.1" r="0.61"/><circle cx="1889.6" cy="220.8" r="0.67"/><circle cx="1892.7" cy="239.6" r="0.59"/><circle cx="1879.1" cy="226.2" r="0.28"/><circle cx="1874.6" cy="223.3" r="0.38"/><circle cx="1886.2" cy="237.4" r="0.29"/><circle cx="1878.5" cy="218.6" r="0.63"/><circle cx="1877.3" cy="240.0" r="0.28"/><circle cx="1888.9" cy="224.2" r="0.25"/><circle cx="1881.1" cy="227.2" r="0.38"/><circle cx="1893.4" cy="234.4" r="0.51"/><circle cx="1885.7" cy="228.4" r="0.65"/><circle cx="1889.8" cy="235.2" r="0.55"/><circle cx="1880.4" cy="237.8" r="0.52"/><circle cx="1887.2" cy="243.2" r="0.35"/><circle cx="1891.4" cy="220.3" r="0.51"/><circle cx="1896.8" cy="233.4" r="0.26"/><circle cx="1875.6" cy="230.7" r="0.27"/><circle cx="1876.5" cy="222.3" r="0.53"/><circle cx="1876.6" cy="236.9" r="0.53"/><circle cx="1886.6" cy="243.9" r="0.73"/><circle cx="1889.3" cy="218.1" r="0.40"/><circle cx="1888.4" cy="230.7" r="0.48"/><circle cx="1891.0" cy="238.0" r="0.58"/><circle cx="1882.3" cy="221.9" r="0.41"/><circle cx="1888.0" cy="239.3" r="0.38"/><circle cx="1888.8" cy="242.3" r="0.50"/><circle cx="1878.9" cy="233.3" r="0.59"/><circle cx="1887.1" cy="237.8" r="0.52"/><circle cx="1880.5" cy="217.8" r="0.61"/><circle cx="1897.4" cy="226.7" r="0.60"/><circle cx="1884.0" cy="227.6" r="0.34"/><circle cx="1897.7" cy="232.1" r="0.60"/><circle cx="1879.8" cy="225.8" r="0.42"/><circle cx="1890.4" cy="240.5" r="0.73"/><circle cx="1883.7" cy="233.8" r="0.33"/><circle cx="1876.5" cy="241.5" r="0.64"/><circle cx="1880.4" cy="232.2" r="0.30"/><circle cx="1891.7" cy="241.2" r="0.47"/><circle cx="1898.0" cy="230.2" r="0.63"/><circle cx="1872.1" cy="232.9" r="0.31"/><circle cx="1892.8" cy="237.6" r="0.49"/><circle cx="1886.5" cy="237.8" r="0.25"/><circle cx="1894.6" cy="224.6" r="0.70"/><circle cx="1893.9" cy="229.9" r="0.60"/><circle cx="1875.3" cy="239.4" r="0.65"/><circle cx="1885.8" cy="232.2" r="0.35"/><circle cx="1877.3" cy="226.6" r="0.25"/><circle cx="1890.7" cy="220.1" r="0.47"/><circle cx="1897.4" cy="234.5" r="0.50"/><circle cx="1891.9" cy="234.4" r="0.55"/><circle cx="1892.0" cy="224.6" r="0.56"/><circle cx="1886.6" cy="237.6" r="0.69"/><circle cx="1881.4" cy="234.0" r="0.53"/><circle cx="1889.1" cy="235.5" r="0.47"/><circle cx="1875.1" cy="225.3" r="0.59"/><circle cx="1881.3" cy="232.3" r="0.60"/><circle cx="1893.8" cy="234.2" r="0.44"/><circle cx="1879.2" cy="220.5" r="0.36"/><circle cx="1877.8" cy="221.6" r="0.47"/><circle cx="1893.1" cy="241.4" r="0.54"/><circle cx="1891.0" cy="233.6" r="0.72"/><circle cx="1885.9" cy="239.7" r="0.63"/><circle cx="1889.7" cy="221.0" r="0.61"/><circle cx="1888.9" cy="232.0" r="0.72"/><circle cx="1885.6" cy="228.4" r="0.27"/><circle cx="1885.5" cy="244.5" r="0.35"/><circle cx="1878.3" cy="219.1" r="0.56"/><circle cx="1891.0" cy="227.5" r="0.32"/><circle cx="1896.8" cy="232.4" r="0.29"/><circle cx="1896.3" cy="229.0" r="0.33"/><circle cx="1886.7" cy="225.7" r="0.49"/><circle cx="1894.5" cy="238.7" r="0.68"/><circle cx="1885.3" cy="230.7" r="0.66"/><circle cx="1872.8" cy="226.6" r="0.49"/><circle cx="1876.8" cy="223.6" r="0.63"/><circle cx="1887.6" cy="232.5" r="0.51"/><circle cx="1882.5" cy="239.5" r="0.25"/><circle cx="1884.6" cy="228.8" r="0.65"/><circle cx="1888.3" cy="222.2" r="0.30"/><circle cx="1881.0" cy="225.8" r="0.45"/><circle cx="1895.3" cy="239.8" r="0.51"/><circle cx="1882.1" cy="234.4" r="0.60"/><circle cx="1892.3" cy="220.6" r="0.29"/><circle cx="1879.5" cy="236.7" r="0.62"/><circle cx="1891.2" cy="239.7" r="0.72"/><circle cx="1884.8" cy="229.8" r="0.28"/><circle cx="1893.5" cy="238.6" r="0.54"/><circle cx="1875.3" cy="229.8" r="0.44"/><circle cx="1876.1" cy="223.8" r="0.69"/><circle cx="1883.3" cy="218.6" r="0.69"/><circle cx="1890.9" cy="220.9" r="0.26"/><circle cx="1879.3" cy="219.3" r="0.45"/><circle cx="1889.0" cy="226.9" r="0.70"/><circle cx="1873.7" cy="235.2" r="0.37"/><circle cx="1882.1" cy="238.9" r="0.40"/><circle cx="1892.4" cy="236.2" r="0.72"/><circle cx="1877.0" cy="219.9" r="0.62"/><circle cx="1891.9" cy="219.1" r="0.61"/><circle cx="1883.6" cy="237.9" r="0.44"/><circle cx="1891.4" cy="231.9" r="0.68"/><circle cx="1891.8" cy="227.2" r="0.62"/><circle cx="1886.8" cy="218.0" r="0.63"/><circle cx="1880.3" cy="230.1" r="0.65"/><circle cx="1880.4" cy="241.2" r="0.42"/><circle cx="1871.3" cy="227.8" r="0.32"/><circle cx="1873.6" cy="228.8" r="0.51"/><circle cx="1893.0" cy="227.6" r="0.69"/><circle cx="1879.6" cy="218.2" r="0.29"/><circle cx="1886.5" cy="238.3" r="0.69"/><circle cx="1891.8" cy="231.6" r="0.59"/><circle cx="1890.6" cy="230.6" r="0.46"/><circle cx="1880.2" cy="220.3" r="0.61"/><circle cx="1884.8" cy="224.0" r="0.37"/><circle cx="1896.2" cy="233.0" r="0.35"/><circle cx="1883.9" cy="244.7" r="0.56"/><circle cx="1875.2" cy="224.9" r="0.54"/><circle cx="1882.1" cy="223.7" r="0.27"/><circle cx="1886.2" cy="231.7" r="0.42"/><circle cx="1887.6" cy="234.7" r="0.48"/><circle cx="1896.1" cy="228.8" r="0.38"/><circle cx="1885.4" cy="225.1" r="0.29"/><circle cx="1881.8" cy="239.5" r="0.58"/><circle cx="1873.5" cy="235.1" r="0.29"/><circle cx="1892.2" cy="227.6" r="0.65"/><circle cx="1897.2" cy="233.4" r="0.35"/><circle cx="1892.4" cy="221.1" r="0.57"/><circle cx="1884.5" cy="232.4" r="0.34"/><circle cx="1889.3" cy="227.9" r="0.57"/><circle cx="1875.0" cy="225.1" r="0.33"/><circle cx="1887.4" cy="234.4" r="0.72"/><circle cx="1876.3" cy="238.6" r="0.52"/><circle cx="1885.3" cy="234.5" r="0.25"/><circle cx="1887.7" cy="227.0" r="0.71"/><circle cx="1876.9" cy="240.0" r="0.31"/><circle cx="1886.4" cy="224.2" r="0.42"/><circle cx="1880.1" cy="230.3" r="0.36"/><circle cx="1886.8" cy="223.8" r="0.43"/><circle cx="1885.3" cy="224.4" r="0.34"/><circle cx="1886.4" cy="239.5" r="0.42"/><circle cx="1878.6" cy="223.5" r="0.67"/><circle cx="1895.5" cy="234.6" r="0.65"/><circle cx="1884.9" cy="233.4" r="0.46"/><circle cx="1891.8" cy="237.3" r="0.59"/><circle cx="1888.7" cy="233.7" r="0.48"/><circle cx="1887.8" cy="237.0" r="0.46"/><circle cx="1887.4" cy="233.5" r="0.42"/><circle cx="1871.4" cy="233.6" r="0.51"/><circle cx="1890.6" cy="233.9" r="0.61"/><circle cx="1872.6" cy="226.0" r="0.71"/><circle cx="1887.6" cy="227.4" r="0.70"/><circle cx="1877.9" cy="229.9" r="0.33"/><circle cx="1889.0" cy="226.2" r="0.28"/><circle cx="1883.4" cy="244.4" r="0.47"/><circle cx="1884.3" cy="227.2" r="0.46"/><circle cx="1882.1" cy="236.8" r="0.57"/><circle cx="1881.6" cy="234.7" r="0.72"/><circle cx="1878.8" cy="231.7" r="0.25"/><circle cx="1878.9" cy="222.8" r="0.26"/><circle cx="1872.9" cy="233.2" r="0.51"/><circle cx="1885.7" cy="240.8" r="0.54"/><circle cx="1881.6" cy="226.7" r="0.64"/><circle cx="1896.0" cy="227.0" r="0.66"/><circle cx="1875.7" cy="240.8" r="0.33"/><circle cx="1886.3" cy="241.7" r="0.68"/><circle cx="1890.4" cy="234.2" r="0.26"/><circle cx="1879.8" cy="233.0" r="0.34"/><circle cx="1884.6" cy="220.3" r="0.70"/><circle cx="1875.3" cy="237.7" r="0.25"/><circle cx="1891.1" cy="228.8" r="0.48"/><circle cx="1871.1" cy="230.0" r="0.48"/><circle cx="1895.7" cy="230.4" r="0.35"/><circle cx="1887.9" cy="225.6" r="0.73"/><circle cx="1878.3" cy="232.8" r="0.71"/><circle cx="1880.8" cy="239.0" r="0.41"/><circle cx="1883.7" cy="229.1" r="0.43"/><circle cx="1891.4" cy="241.8" r="0.24"/><circle cx="1879.2" cy="226.6" r="0.47"/><circle cx="1873.8" cy="226.5" r="0.31"/><circle cx="1885.0" cy="235.9" r="0.71"/><circle cx="1887.8" cy="235.2" r="0.50"/><circle cx="1873.2" cy="224.5" r="0.27"/><circle cx="1885.3" cy="236.7" r="0.53"/><circle cx="1876.1" cy="233.6" r="0.68"/><circle cx="1877.9" cy="220.0" r="0.71"/><circle cx="1883.1" cy="244.5" r="0.44"/><circle cx="1897.4" cy="235.3" r="0.29"/><circle cx="1892.2" cy="231.8" r="0.38"/><circle cx="1897.5" cy="228.3" r="0.45"/><circle cx="1872.0" cy="228.6" r="0.64"/><circle cx="1879.0" cy="222.8" r="0.30"/><circle cx="1885.1" cy="242.3" r="0.53"/><circle cx="1888.9" cy="218.4" r="0.71"/><circle cx="1886.1" cy="234.6" r="0.68"/><circle cx="1879.3" cy="228.5" r="0.58"/><circle cx="1884.5" cy="237.8" r="0.42"/><circle cx="1873.3" cy="229.3" r="0.28"/><circle cx="1884.1" cy="220.0" r="0.47"/><circle cx="1878.8" cy="220.0" r="0.25"/><circle cx="1873.3" cy="232.8" r="0.59"/><circle cx="1881.1" cy="226.2" r="0.71"/><circle cx="1886.2" cy="224.4" r="0.45"/><circle cx="1890.9" cy="229.3" r="0.44"/><circle cx="1897.6" cy="227.8" r="0.36"/></g>
<path d="M1896.7,240.5 V246.5 M1893.7,243.5 H1899.7" stroke="#c01010" stroke-width="1.3"/>
<circle cx="1646.7" cy="265" r="14" fill="url(#lg1)"/>
<g fill="#000" opacity="0.8"><circle cx="1646.0" cy="257.8" r="0.61"/><circle cx="1647.2" cy="260.7" r="0.38"/><circle cx="1648.1" cy="271.0" r="0.28"/><circle cx="1651.7" cy="270.8" r="0.48"/><circle cx="1654.8" cy="269.3" r="0.76"/><circle cx="1640.4" cy="261.7" r="0.63"/><circle cx="1642.1" cy="266.9" r="0.52"/><circle cx="1656.5" cy="266.1" r="0.35"/><circle cx="1638.7" cy="273.6" r="0.67"/><circle cx="1651.6" cy="256.7" r="0.60"/><circle cx="1643.4" cy="253.7" r="0.37"/><circle cx="1647.4" cy="258.5" r="0.40"/><circle cx="1650.7" cy="256.6" r="0.71"/><circle cx="1653.2" cy="258.5" r="0.37"/><circle cx="1655.4" cy="265.8" r="0.64"/><circle cx="1646.3" cy="268.1" r="0.26"/><circle cx="1651.3" cy="273.9" r="0.26"/><circle cx="1647.5" cy="271.1" r="0.64"/><circle cx="1648.4" cy="264.9" r="0.32"/><circle cx="1657.5" cy="260.3" r="0.34"/><circle cx="1642.3" cy="272.5" r="0.43"/><circle cx="1639.5" cy="269.1" r="0.40"/><circle cx="1650.0" cy="266.2" r="0.35"/><circle cx="1654.7" cy="270.1" r="0.63"/><circle cx="1645.8" cy="275.6" r="0.65"/><circle cx="1642.1" cy="272.1" r="0.36"/><circle cx="1654.8" cy="261.1" r="0.29"/><circle cx="1652.4" cy="273.2" r="0.46"/><circle cx="1645.5" cy="259.4" r="0.68"/><circle cx="1647.9" cy="261.5" r="0.57"/><circle cx="1650.3" cy="274.4" r="0.68"/><circle cx="1648.2" cy="259.4" r="0.31"/><circle cx="1642.0" cy="257.3" r="0.34"/><circle cx="1649.9" cy="273.6" r="0.32"/><circle cx="1642.8" cy="260.6" r="0.40"/><circle cx="1638.9" cy="269.1" r="0.64"/><circle cx="1656.7" cy="267.0" r="0.38"/><circle cx="1644.3" cy="274.3" r="0.63"/><circle cx="1638.1" cy="257.5" r="0.37"/><circle cx="1643.0" cy="274.1" r="0.40"/><circle cx="1649.8" cy="269.8" r="0.67"/><circle cx="1651.4" cy="256.0" r="0.77"/><circle cx="1648.5" cy="258.6" r="0.43"/><circle cx="1646.2" cy="262.2" r="0.58"/><circle cx="1649.0" cy="266.4" r="0.53"/><circle cx="1653.4" cy="274.4" r="0.72"/><circle cx="1641.5" cy="266.3" r="0.33"/><circle cx="1638.0" cy="264.6" r="0.45"/><circle cx="1644.9" cy="256.5" r="0.67"/><circle cx="1649.2" cy="267.0" r="0.47"/><circle cx="1640.7" cy="265.6" r="0.61"/><circle cx="1647.9" cy="271.7" r="0.51"/><circle cx="1644.2" cy="254.8" r="0.46"/><circle cx="1635.8" cy="268.8" r="0.75"/><circle cx="1643.8" cy="262.4" r="0.50"/><circle cx="1642.6" cy="260.2" r="0.28"/><circle cx="1658.1" cy="263.6" r="0.33"/><circle cx="1637.5" cy="267.0" r="0.42"/><circle cx="1656.1" cy="269.3" r="0.67"/><circle cx="1643.5" cy="266.3" r="0.47"/><circle cx="1656.5" cy="271.6" r="0.29"/><circle cx="1644.2" cy="275.2" r="0.33"/><circle cx="1649.2" cy="267.0" r="0.35"/><circle cx="1636.0" cy="262.8" r="0.35"/><circle cx="1651.5" cy="274.3" r="0.49"/><circle cx="1644.5" cy="268.6" r="0.39"/><circle cx="1650.7" cy="264.3" r="0.40"/><circle cx="1646.0" cy="253.7" r="0.74"/><circle cx="1635.1" cy="267.0" r="0.58"/><circle cx="1644.7" cy="272.9" r="0.64"/><circle cx="1646.3" cy="260.7" r="0.36"/><circle cx="1650.5" cy="264.0" r="0.69"/><circle cx="1643.5" cy="270.1" r="0.40"/><circle cx="1635.0" cy="267.3" r="0.34"/><circle cx="1650.9" cy="259.6" r="0.35"/><circle cx="1646.5" cy="258.0" r="0.36"/><circle cx="1637.2" cy="270.3" r="0.72"/><circle cx="1645.6" cy="264.4" r="0.66"/><circle cx="1637.8" cy="257.9" r="0.76"/><circle cx="1641.6" cy="274.8" r="0.69"/><circle cx="1646.0" cy="272.2" r="0.46"/><circle cx="1642.3" cy="270.9" r="0.32"/><circle cx="1648.3" cy="276.3" r="0.48"/><circle cx="1639.3" cy="256.5" r="0.66"/><circle cx="1647.1" cy="276.5" r="0.68"/><circle cx="1656.9" cy="264.4" r="0.66"/><circle cx="1649.0" cy="259.4" r="0.61"/><circle cx="1638.7" cy="272.5" r="0.33"/><circle cx="1639.9" cy="263.3" r="0.69"/><circle cx="1640.5" cy="274.1" r="0.71"/><circle cx="1649.9" cy="261.9" r="0.76"/><circle cx="1646.3" cy="255.1" r="0.61"/><circle cx="1657.4" cy="268.3" r="0.55"/><circle cx="1640.0" cy="266.9" r="0.67"/><circle cx="1648.9" cy="254.0" r="0.37"/><circle cx="1643.5" cy="270.1" r="0.32"/><circle cx="1645.8" cy="266.7" r="0.68"/><circle cx="1647.2" cy="268.2" r="0.30"/><circle cx="1646.4" cy="259.7" r="0.51"/><circle cx="1637.9" cy="271.2" r="0.76"/><circle cx="1643.2" cy="273.9" r="0.73"/><circle cx="1635.5" cy="267.1" r="0.65"/><circle cx="1642.5" cy="275.4" r="0.56"/><circle cx="1653.9" cy="270.7" r="0.70"/><circle cx="1638.4" cy="264.0" r="0.48"/><circle cx="1653.9" cy="258.3" r="0.37"/><circle cx="1642.0" cy="270.5" r="0.77"/><circle cx="1645.3" cy="261.0" r="0.74"/><circle cx="1655.7" cy="267.0" r="0.49"/><circle cx="1645.1" cy="257.3" r="0.31"/><circle cx="1636.0" cy="263.4" r="0.68"/><circle cx="1643.2" cy="269.4" r="0.65"/><circle cx="1648.5" cy="259.7" r="0.73"/><circle cx="1654.6" cy="264.6" r="0.46"/><circle cx="1643.8" cy="253.8" r="0.37"/><circle cx="1644.5" cy="271.5" r="0.65"/><circle cx="1650.1" cy="273.2" r="0.53"/><circle cx="1644.5" cy="261.0" r="0.76"/><circle cx="1655.7" cy="265.0" r="0.68"/><circle cx="1651.4" cy="275.5" r="0.55"/><circle cx="1647.4" cy="253.8" r="0.45"/><circle cx="1651.6" cy="262.5" r="0.27"/><circle cx="1635.3" cy="264.8" r="0.74"/><circle cx="1654.9" cy="262.6" r="0.75"/><circle cx="1642.5" cy="263.3" r="0.59"/><circle cx="1649.3" cy="257.6" r="0.58"/><circle cx="1646.3" cy="271.3" r="0.48"/><circle cx="1638.5" cy="264.3" r="0.31"/><circle cx="1653.7" cy="265.2" r="0.64"/><circle cx="1646.6" cy="259.2" r="0.40"/><circle cx="1641.7" cy="264.5" r="0.58"/><circle cx="1651.1" cy="261.9" r="0.57"/><circle cx="1644.8" cy="254.8" r="0.64"/><circle cx="1645.2" cy="258.9" r="0.70"/><circle cx="1649.2" cy="263.8" r="0.76"/><circle cx="1643.4" cy="266.2" r="0.30"/><circle cx="1649.6" cy="255.5" r="0.34"/><circle cx="1637.4" cy="267.4" r="0.79"/><circle cx="1641.3" cy="274.0" r="0.39"/><circle cx="1648.2" cy="269.6" r="0.48"/></g>
<path d="M1658.7,274.5 V280.5 M1655.7,277.5 H1661.7" stroke="#c01010" stroke-width="1.3"/>
<g fill="#000" opacity="1"><circle cx="1675.4" cy="262.3" r="0.35"/><circle cx="1681.4" cy="267.0" r="0.36"/><circle cx="1677.0" cy="269.7" r="0.36"/><circle cx="1672.1" cy="265.6" r="0.77"/><circle cx="1668.1" cy="265.6" r="0.51"/><circle cx="1683.9" cy="270.2" r="0.34"/><circle cx="1682.4" cy="266.7" r="0.63"/><circle cx="1688.8" cy="264.1" r="0.45"/><circle cx="1673.8" cy="266.9" r="0.63"/><circle cx="1676.8" cy="266.8" r="0.72"/><circle cx="1679.8" cy="264.7" r="0.71"/><circle cx="1679.7" cy="260.8" r="0.59"/><circle cx="1687.9" cy="262.8" r="0.49"/><circle cx="1677.8" cy="270.1" r="0.61"/><circle cx="1679.5" cy="258.1" r="0.34"/><circle cx="1672.7" cy="269.9" r="0.68"/><circle cx="1671.7" cy="261.8" r="0.44"/><circle cx="1689.8" cy="263.2" r="0.47"/><circle cx="1682.5" cy="267.2" r="0.73"/><circle cx="1681.4" cy="263.9" r="0.43"/><circle cx="1671.6" cy="265.6" r="0.45"/><circle cx="1686.8" cy="262.4" r="0.54"/><circle cx="1690.1" cy="262.5" r="0.51"/><circle cx="1676.7" cy="268.9" r="0.58"/><circle cx="1682.2" cy="261.4" r="0.46"/><circle cx="1674.7" cy="267.8" r="0.74"/><circle cx="1674.1" cy="264.1" r="0.44"/><circle cx="1683.0" cy="262.4" r="0.62"/><circle cx="1686.4" cy="265.4" r="0.29"/><circle cx="1682.4" cy="262.4" r="0.38"/><circle cx="1686.9" cy="266.3" r="0.65"/><circle cx="1678.4" cy="258.3" r="0.76"/><circle cx="1668.9" cy="262.8" r="0.31"/><circle cx="1688.3" cy="262.9" r="0.36"/><circle cx="1680.6" cy="258.4" r="0.47"/><circle cx="1690.8" cy="268.7" r="0.66"/><circle cx="1670.2" cy="261.0" r="0.28"/><circle cx="1685.0" cy="265.9" r="0.27"/><circle cx="1678.0" cy="259.5" r="0.32"/><circle cx="1683.6" cy="267.6" r="0.58"/><circle cx="1674.7" cy="258.8" r="0.45"/><circle cx="1689.2" cy="264.4" r="0.47"/><circle cx="1680.6" cy="268.4" r="0.77"/><circle cx="1691.6" cy="264.8" r="0.35"/><circle cx="1682.9" cy="267.5" r="0.45"/><circle cx="1680.4" cy="263.3" r="0.54"/><circle cx="1679.7" cy="263.8" r="0.49"/><circle cx="1683.2" cy="259.8" r="0.50"/><circle cx="1688.1" cy="261.2" r="0.44"/><circle cx="1670.7" cy="269.2" r="0.71"/><circle cx="1689.1" cy="262.3" r="0.34"/><circle cx="1684.4" cy="268.9" r="0.63"/><circle cx="1692.3" cy="265.2" r="0.68"/><circle cx="1679.7" cy="265.0" r="0.68"/><circle cx="1671.6" cy="268.0" r="0.56"/><circle cx="1679.6" cy="260.5" r="0.77"/><circle cx="1692.7" cy="263.1" r="0.59"/><circle cx="1677.5" cy="269.0" r="0.40"/><circle cx="1690.2" cy="261.4" r="0.68"/><circle cx="1686.3" cy="258.6" r="0.62"/><circle cx="1676.0" cy="270.7" r="0.40"/><circle cx="1676.7" cy="263.2" r="0.71"/><circle cx="1673.9" cy="265.3" r="0.75"/><circle cx="1691.6" cy="268.4" r="0.66"/><circle cx="1687.4" cy="270.0" r="0.56"/><circle cx="1689.0" cy="262.0" r="0.49"/><circle cx="1684.2" cy="264.1" r="0.67"/><circle cx="1686.2" cy="267.3" r="0.32"/><circle cx="1686.7" cy="261.6" r="0.64"/><circle cx="1680.2" cy="271.1" r="0.60"/><circle cx="1688.2" cy="267.9" r="0.64"/><circle cx="1683.0" cy="270.6" r="0.41"/><circle cx="1672.1" cy="270.0" r="0.76"/><circle cx="1689.2" cy="264.9" r="0.56"/><circle cx="1684.8" cy="259.2" r="0.50"/><circle cx="1686.1" cy="261.6" r="0.76"/><circle cx="1676.3" cy="265.4" r="0.66"/><circle cx="1687.3" cy="269.7" r="0.29"/><circle cx="1690.2" cy="264.6" r="0.65"/><circle cx="1687.7" cy="269.2" r="0.46"/><circle cx="1680.8" cy="271.5" r="0.28"/><circle cx="1676.9" cy="265.3" r="0.71"/><circle cx="1682.6" cy="264.2" r="0.51"/><circle cx="1669.9" cy="266.2" r="0.65"/><circle cx="1673.8" cy="270.8" r="0.36"/><circle cx="1688.4" cy="269.9" r="0.33"/><circle cx="1684.3" cy="269.7" r="0.44"/><circle cx="1687.2" cy="270.9" r="0.51"/><circle cx="1682.2" cy="261.5" r="0.74"/><circle cx="1682.9" cy="271.7" r="0.58"/><circle cx="1691.9" cy="263.9" r="0.59"/><circle cx="1668.9" cy="263.6" r="0.50"/><circle cx="1690.8" cy="269.0" r="0.69"/><circle cx="1676.0" cy="259.4" r="0.38"/><circle cx="1669.2" cy="266.5" r="0.77"/><circle cx="1685.3" cy="263.7" r="0.62"/><circle cx="1672.9" cy="263.5" r="0.35"/><circle cx="1686.5" cy="268.7" r="0.52"/><circle cx="1679.8" cy="269.3" r="0.55"/><circle cx="1681.4" cy="259.5" r="0.35"/><circle cx="1686.6" cy="262.2" r="0.77"/><circle cx="1685.5" cy="264.7" r="0.57"/><circle cx="1688.6" cy="264.1" r="0.55"/><circle cx="1679.8" cy="266.1" r="0.37"/><circle cx="1685.6" cy="267.7" r="0.59"/><circle cx="1669.0" cy="262.3" r="0.62"/><circle cx="1672.5" cy="270.3" r="0.60"/><circle cx="1669.1" cy="263.2" r="0.61"/><circle cx="1674.2" cy="269.3" r="0.42"/><circle cx="1687.0" cy="264.3" r="0.77"/><circle cx="1681.9" cy="265.3" r="0.55"/><circle cx="1683.2" cy="269.9" r="0.32"/><circle cx="1686.2" cy="260.0" r="0.62"/><circle cx="1692.3" cy="261.8" r="0.62"/><circle cx="1680.6" cy="264.7" r="0.29"/><circle cx="1669.2" cy="268.1" r="0.43"/><circle cx="1679.6" cy="264.7" r="0.48"/><circle cx="1688.9" cy="261.8" r="0.70"/><circle cx="1686.5" cy="265.3" r="0.36"/><circle cx="1682.7" cy="263.0" r="0.75"/><circle cx="1679.4" cy="271.7" r="0.53"/><circle cx="1675.0" cy="271.3" r="0.48"/><circle cx="1679.6" cy="263.2" r="0.70"/><circle cx="1685.0" cy="264.7" r="0.65"/><circle cx="1680.1" cy="267.7" r="0.45"/><circle cx="1674.0" cy="259.1" r="0.78"/><circle cx="1691.0" cy="264.8" r="0.61"/><circle cx="1686.6" cy="270.2" r="0.55"/><circle cx="1672.9" cy="270.3" r="0.40"/><circle cx="1684.0" cy="267.2" r="0.34"/><circle cx="1670.8" cy="261.6" r="0.35"/><circle cx="1670.8" cy="264.9" r="0.56"/><circle cx="1672.5" cy="267.7" r="0.27"/><circle cx="1688.6" cy="266.7" r="0.39"/><circle cx="1681.0" cy="261.5" r="0.70"/><circle cx="1680.9" cy="267.2" r="0.51"/><circle cx="1675.0" cy="267.7" r="0.66"/><circle cx="1682.5" cy="270.8" r="0.70"/><circle cx="1671.9" cy="266.5" r="0.75"/><circle cx="1676.3" cy="263.2" r="0.30"/><circle cx="1687.2" cy="267.0" r="0.31"/><circle cx="1675.7" cy="261.3" r="0.42"/><circle cx="1668.2" cy="264.5" r="0.39"/><circle cx="1684.7" cy="268.3" r="0.43"/><circle cx="1689.9" cy="261.8" r="0.49"/><circle cx="1682.1" cy="266.3" r="0.33"/><circle cx="1686.7" cy="260.3" r="0.34"/><circle cx="1678.5" cy="263.8" r="0.53"/><circle cx="1678.6" cy="267.0" r="0.65"/><circle cx="1678.8" cy="260.0" r="0.35"/><circle cx="1676.6" cy="260.9" r="0.61"/><circle cx="1691.1" cy="268.7" r="0.26"/><circle cx="1682.1" cy="269.4" r="0.37"/><circle cx="1689.9" cy="268.1" r="0.78"/><circle cx="1677.3" cy="268.2" r="0.61"/><circle cx="1682.1" cy="269.5" r="0.62"/><circle cx="1676.0" cy="266.2" r="0.30"/><circle cx="1668.2" cy="263.1" r="0.75"/><circle cx="1688.2" cy="268.0" r="0.52"/><circle cx="1684.4" cy="270.5" r="0.52"/><circle cx="1683.2" cy="261.4" r="0.75"/><circle cx="1684.2" cy="260.5" r="0.34"/><circle cx="1676.1" cy="265.3" r="0.62"/><circle cx="1677.5" cy="259.9" r="0.78"/><circle cx="1691.3" cy="266.7" r="0.68"/><circle cx="1686.3" cy="267.6" r="0.29"/><circle cx="1671.1" cy="262.0" r="0.45"/><circle cx="1678.1" cy="260.9" r="0.64"/><circle cx="1678.5" cy="272.0" r="0.49"/><circle cx="1684.6" cy="265.0" r="0.64"/><circle cx="1687.5" cy="260.7" r="0.34"/><circle cx="1688.3" cy="260.6" r="0.32"/><circle cx="1672.9" cy="269.0" r="0.26"/><circle cx="1688.2" cy="266.1" r="0.72"/><circle cx="1688.0" cy="264.9" r="0.74"/><circle cx="1683.4" cy="258.5" r="0.57"/><circle cx="1690.9" cy="263.9" r="0.76"/><circle cx="1675.4" cy="263.7" r="0.53"/><circle cx="1673.2" cy="265.4" r="0.46"/><circle cx="1670.8" cy="264.6" r="0.38"/><circle cx="1679.1" cy="270.0" r="0.53"/><circle cx="1671.5" cy="267.8" r="0.36"/><circle cx="1674.0" cy="264.3" r="0.67"/><circle cx="1677.4" cy="258.9" r="0.53"/><circle cx="1680.8" cy="271.9" r="0.53"/><circle cx="1675.7" cy="267.7" r="0.47"/><circle cx="1677.7" cy="258.7" r="0.52"/><circle cx="1680.0" cy="261.7" r="0.50"/><circle cx="1676.2" cy="268.1" r="0.45"/><circle cx="1681.0" cy="258.9" r="0.37"/><circle cx="1681.9" cy="271.3" r="0.61"/><circle cx="1676.1" cy="259.9" r="0.63"/><circle cx="1680.2" cy="266.7" r="0.45"/><circle cx="1693.2" cy="266.4" r="0.54"/><circle cx="1674.6" cy="258.8" r="0.68"/><circle cx="1681.7" cy="269.1" r="0.32"/><circle cx="1683.9" cy="259.1" r="0.52"/><circle cx="1676.1" cy="267.7" r="0.52"/><circle cx="1677.8" cy="258.4" r="0.71"/><circle cx="1686.5" cy="261.5" r="0.48"/><circle cx="1675.7" cy="271.5" r="0.36"/><circle cx="1684.5" cy="268.2" r="0.75"/><circle cx="1685.2" cy="261.7" r="0.71"/><circle cx="1687.3" cy="262.0" r="0.36"/><circle cx="1681.8" cy="260.7" r="0.33"/><circle cx="1687.8" cy="262.3" r="0.47"/><circle cx="1675.3" cy="263.0" r="0.27"/><circle cx="1674.5" cy="267.8" r="0.27"/><circle cx="1672.8" cy="269.5" r="0.44"/><circle cx="1676.3" cy="259.9" r="0.36"/><circle cx="1691.3" cy="265.7" r="0.58"/><circle cx="1679.1" cy="268.1" r="0.71"/><circle cx="1686.0" cy="263.1" r="0.57"/><circle cx="1674.1" cy="263.2" r="0.28"/><circle cx="1675.9" cy="270.1" r="0.58"/><circle cx="1676.2" cy="264.8" r="0.37"/><circle cx="1677.5" cy="269.3" r="0.45"/><circle cx="1684.3" cy="263.6" r="0.78"/><circle cx="1681.4" cy="271.6" r="0.39"/><circle cx="1673.9" cy="262.7" r="0.28"/></g>
<path d="M1692.7,274.5 V280.5 M1689.7,277.5 H1695.7" stroke="#000" stroke-width="1.3"/>
<g fill="#000" opacity="0.8"><circle cx="1717.8" cy="258.8" r="0.32"/><circle cx="1716.1" cy="260.1" r="0.61"/><circle cx="1721.7" cy="266.5" r="0.30"/><circle cx="1707.2" cy="260.5" r="0.55"/><circle cx="1707.6" cy="263.7" r="0.54"/><circle cx="1719.5" cy="267.2" r="0.52"/><circle cx="1703.6" cy="267.6" r="0.24"/><circle cx="1709.3" cy="265.8" r="0.21"/><circle cx="1717.7" cy="266.2" r="0.36"/><circle cx="1706.9" cy="267.1" r="0.33"/><circle cx="1712.1" cy="260.1" r="0.61"/><circle cx="1718.9" cy="269.5" r="0.41"/><circle cx="1707.0" cy="269.8" r="0.29"/><circle cx="1719.9" cy="262.0" r="0.34"/><circle cx="1707.9" cy="261.4" r="0.32"/><circle cx="1724.8" cy="268.6" r="0.36"/><circle cx="1722.0" cy="268.8" r="0.43"/><circle cx="1711.5" cy="268.6" r="0.55"/><circle cx="1710.6" cy="268.9" r="0.60"/><circle cx="1709.8" cy="268.5" r="0.27"/><circle cx="1709.6" cy="260.0" r="0.39"/><circle cx="1709.9" cy="266.9" r="0.53"/><circle cx="1704.1" cy="266.7" r="0.36"/><circle cx="1714.5" cy="263.8" r="0.30"/><circle cx="1724.3" cy="263.5" r="0.48"/><circle cx="1706.5" cy="265.1" r="0.29"/><circle cx="1719.2" cy="270.1" r="0.49"/><circle cx="1714.2" cy="270.8" r="0.26"/><circle cx="1710.9" cy="263.1" r="0.42"/><circle cx="1711.2" cy="269.9" r="0.26"/><circle cx="1705.3" cy="265.6" r="0.26"/><circle cx="1711.1" cy="270.5" r="0.43"/><circle cx="1706.8" cy="260.7" r="0.44"/><circle cx="1716.1" cy="269.7" r="0.55"/><circle cx="1705.2" cy="262.5" r="0.36"/><circle cx="1703.5" cy="267.3" r="0.55"/><circle cx="1712.5" cy="263.1" r="0.46"/><circle cx="1726.0" cy="266.4" r="0.61"/><circle cx="1713.8" cy="261.3" r="0.56"/><circle cx="1719.5" cy="270.9" r="0.42"/><circle cx="1726.0" cy="265.7" r="0.39"/><circle cx="1719.5" cy="259.8" r="0.43"/><circle cx="1718.2" cy="262.5" r="0.58"/><circle cx="1713.7" cy="266.0" r="0.35"/><circle cx="1717.6" cy="265.8" r="0.46"/><circle cx="1718.2" cy="267.0" r="0.33"/><circle cx="1712.6" cy="271.8" r="0.58"/><circle cx="1722.9" cy="259.8" r="0.39"/><circle cx="1716.5" cy="261.3" r="0.59"/><circle cx="1718.5" cy="259.3" r="0.30"/><circle cx="1724.4" cy="268.8" r="0.43"/><circle cx="1706.2" cy="260.7" r="0.27"/><circle cx="1712.1" cy="260.3" r="0.53"/><circle cx="1709.6" cy="265.9" r="0.60"/><circle cx="1712.7" cy="271.1" r="0.55"/><circle cx="1714.8" cy="271.0" r="0.37"/><circle cx="1715.6" cy="268.3" r="0.60"/><circle cx="1708.9" cy="268.8" r="0.41"/><circle cx="1725.0" cy="266.0" r="0.51"/><circle cx="1719.8" cy="262.0" r="0.29"/><circle cx="1708.8" cy="270.0" r="0.48"/><circle cx="1707.5" cy="267.9" r="0.27"/><circle cx="1721.9" cy="262.6" r="0.42"/><circle cx="1715.9" cy="261.9" r="0.50"/><circle cx="1708.2" cy="270.2" r="0.25"/><circle cx="1713.1" cy="270.7" r="0.41"/><circle cx="1708.2" cy="268.8" r="0.30"/><circle cx="1714.2" cy="265.1" r="0.54"/><circle cx="1714.4" cy="271.6" r="0.43"/><circle cx="1707.1" cy="261.6" r="0.26"/><circle cx="1715.8" cy="261.2" r="0.56"/><circle cx="1716.9" cy="259.2" r="0.54"/><circle cx="1705.6" cy="267.3" r="0.60"/><circle cx="1716.1" cy="267.1" r="0.38"/><circle cx="1710.1" cy="264.8" r="0.30"/><circle cx="1719.7" cy="261.7" r="0.27"/><circle cx="1718.4" cy="270.0" r="0.28"/><circle cx="1706.0" cy="265.8" r="0.39"/><circle cx="1703.7" cy="264.8" r="0.21"/><circle cx="1719.5" cy="263.6" r="0.22"/><circle cx="1715.7" cy="259.6" r="0.43"/><circle cx="1716.8" cy="271.2" r="0.33"/><circle cx="1713.9" cy="261.6" r="0.44"/><circle cx="1710.3" cy="261.5" r="0.40"/><circle cx="1723.5" cy="267.3" r="0.49"/><circle cx="1719.8" cy="269.4" r="0.51"/><circle cx="1723.5" cy="268.9" r="0.57"/><circle cx="1720.4" cy="266.1" r="0.24"/><circle cx="1714.6" cy="267.1" r="0.41"/><circle cx="1714.7" cy="268.9" r="0.40"/><circle cx="1707.3" cy="269.6" r="0.50"/><circle cx="1719.0" cy="267.2" r="0.21"/><circle cx="1712.8" cy="267.1" r="0.49"/><circle cx="1717.0" cy="257.9" r="0.29"/><circle cx="1724.9" cy="266.4" r="0.38"/><circle cx="1721.5" cy="263.1" r="0.34"/><circle cx="1725.2" cy="268.1" r="0.42"/><circle cx="1707.3" cy="266.7" r="0.52"/><circle cx="1718.7" cy="260.7" r="0.28"/><circle cx="1705.3" cy="268.8" r="0.37"/><circle cx="1709.9" cy="260.4" r="0.40"/><circle cx="1709.4" cy="263.4" r="0.44"/><circle cx="1716.9" cy="263.5" r="0.36"/><circle cx="1723.4" cy="260.1" r="0.21"/><circle cx="1708.0" cy="260.9" r="0.55"/><circle cx="1710.4" cy="265.5" r="0.33"/><circle cx="1712.3" cy="259.0" r="0.29"/><circle cx="1708.6" cy="260.4" r="0.48"/><circle cx="1722.6" cy="265.7" r="0.34"/><circle cx="1709.0" cy="262.6" r="0.26"/><circle cx="1711.6" cy="261.6" r="0.53"/><circle cx="1711.7" cy="270.0" r="0.54"/><circle cx="1722.4" cy="269.1" r="0.23"/><circle cx="1716.5" cy="264.6" r="0.50"/><circle cx="1711.2" cy="267.2" r="0.37"/><circle cx="1707.0" cy="265.0" r="0.26"/><circle cx="1708.2" cy="264.4" r="0.61"/><circle cx="1708.8" cy="268.2" r="0.30"/><circle cx="1721.4" cy="264.2" r="0.47"/><circle cx="1718.4" cy="261.1" r="0.52"/><circle cx="1714.0" cy="267.3" r="0.22"/><circle cx="1704.1" cy="267.1" r="0.29"/><circle cx="1704.9" cy="267.3" r="0.32"/><circle cx="1719.7" cy="269.2" r="0.38"/><circle cx="1725.2" cy="262.4" r="0.30"/><circle cx="1707.5" cy="263.3" r="0.22"/><circle cx="1703.9" cy="267.4" r="0.33"/><circle cx="1706.0" cy="261.9" r="0.23"/><circle cx="1718.2" cy="263.9" r="0.33"/><circle cx="1714.3" cy="264.0" r="0.36"/><circle cx="1720.5" cy="268.5" r="0.21"/><circle cx="1718.0" cy="267.8" r="0.24"/><circle cx="1719.2" cy="266.7" r="0.42"/><circle cx="1721.8" cy="269.9" r="0.38"/><circle cx="1714.6" cy="268.5" r="0.55"/><circle cx="1724.6" cy="266.8" r="0.25"/><circle cx="1721.9" cy="263.4" r="0.45"/><circle cx="1717.2" cy="263.3" r="0.23"/><circle cx="1711.5" cy="259.8" r="0.50"/><circle cx="1713.2" cy="270.0" r="0.28"/><circle cx="1708.8" cy="266.5" r="0.45"/><circle cx="1712.8" cy="268.6" r="0.47"/><circle cx="1723.9" cy="268.3" r="0.41"/><circle cx="1715.2" cy="267.4" r="0.42"/><circle cx="1704.5" cy="264.9" r="0.36"/><circle cx="1705.0" cy="268.6" r="0.32"/><circle cx="1726.0" cy="264.2" r="0.61"/><circle cx="1720.4" cy="263.7" r="0.54"/><circle cx="1710.6" cy="262.9" r="0.62"/><circle cx="1708.2" cy="259.8" r="0.44"/><circle cx="1724.5" cy="268.2" r="0.28"/><circle cx="1714.2" cy="270.6" r="0.29"/><circle cx="1704.8" cy="266.4" r="0.25"/><circle cx="1712.6" cy="263.0" r="0.40"/><circle cx="1708.8" cy="260.2" r="0.22"/><circle cx="1719.0" cy="271.6" r="0.37"/><circle cx="1708.2" cy="267.0" r="0.49"/><circle cx="1714.1" cy="259.2" r="0.37"/><circle cx="1706.9" cy="262.8" r="0.28"/><circle cx="1725.9" cy="262.8" r="0.53"/><circle cx="1722.9" cy="264.8" r="0.55"/><circle cx="1715.3" cy="271.2" r="0.50"/><circle cx="1724.8" cy="262.5" r="0.57"/><circle cx="1713.5" cy="271.3" r="0.40"/><circle cx="1711.9" cy="269.0" r="0.54"/><circle cx="1720.8" cy="259.5" r="0.48"/><circle cx="1717.0" cy="267.5" r="0.44"/><circle cx="1716.3" cy="269.1" r="0.25"/><circle cx="1720.4" cy="270.0" r="0.30"/><circle cx="1718.7" cy="261.6" r="0.56"/><circle cx="1712.7" cy="268.5" r="0.37"/><circle cx="1722.6" cy="265.4" r="0.36"/><circle cx="1725.8" cy="265.5" r="0.36"/><circle cx="1726.5" cy="265.0" r="0.30"/><circle cx="1714.7" cy="266.1" r="0.25"/><circle cx="1712.4" cy="259.7" r="0.41"/><circle cx="1714.9" cy="268.9" r="0.61"/><circle cx="1706.4" cy="270.2" r="0.57"/><circle cx="1722.5" cy="269.7" r="0.21"/><circle cx="1712.1" cy="258.7" r="0.49"/><circle cx="1704.4" cy="263.0" r="0.27"/><circle cx="1708.7" cy="264.1" r="0.37"/><circle cx="1718.3" cy="270.7" r="0.44"/><circle cx="1716.4" cy="259.4" r="0.45"/><circle cx="1724.2" cy="261.9" r="0.44"/><circle cx="1709.4" cy="271.2" r="0.36"/><circle cx="1720.3" cy="267.5" r="0.50"/><circle cx="1723.5" cy="262.6" r="0.48"/><circle cx="1724.5" cy="262.6" r="0.39"/><circle cx="1704.5" cy="266.5" r="0.34"/><circle cx="1722.0" cy="268.6" r="0.54"/><circle cx="1714.8" cy="271.0" r="0.57"/><circle cx="1717.8" cy="266.9" r="0.41"/><circle cx="1708.8" cy="271.1" r="0.62"/><circle cx="1704.6" cy="267.1" r="0.47"/><circle cx="1720.2" cy="271.3" r="0.28"/><circle cx="1721.9" cy="267.2" r="0.21"/><circle cx="1707.1" cy="265.6" r="0.60"/><circle cx="1705.2" cy="268.4" r="0.53"/><circle cx="1709.7" cy="263.2" r="0.33"/><circle cx="1707.2" cy="265.2" r="0.47"/><circle cx="1707.9" cy="264.9" r="0.46"/><circle cx="1720.1" cy="264.9" r="0.34"/><circle cx="1718.4" cy="265.2" r="0.23"/><circle cx="1705.0" cy="268.1" r="0.49"/><circle cx="1725.4" cy="263.6" r="0.45"/><circle cx="1713.5" cy="264.6" r="0.36"/><circle cx="1714.0" cy="270.7" r="0.23"/><circle cx="1707.6" cy="263.8" r="0.41"/><circle cx="1711.5" cy="266.3" r="0.51"/><circle cx="1717.6" cy="259.7" r="0.25"/><circle cx="1705.6" cy="261.1" r="0.61"/><circle cx="1714.8" cy="263.5" r="0.57"/><circle cx="1711.5" cy="261.7" r="0.59"/><circle cx="1719.9" cy="259.0" r="0.31"/><circle cx="1708.2" cy="262.9" r="0.33"/><circle cx="1715.4" cy="259.4" r="0.34"/><circle cx="1703.6" cy="263.1" r="0.44"/><circle cx="1722.4" cy="262.2" r="0.62"/><circle cx="1722.7" cy="265.9" r="0.43"/><circle cx="1713.0" cy="258.0" r="0.46"/><circle cx="1705.2" cy="265.8" r="0.43"/><circle cx="1711.4" cy="258.3" r="0.21"/><circle cx="1709.9" cy="271.1" r="0.23"/><circle cx="1715.2" cy="263.8" r="0.47"/><circle cx="1716.5" cy="261.7" r="0.36"/><circle cx="1716.2" cy="271.0" r="0.42"/><circle cx="1709.3" cy="262.5" r="0.45"/><circle cx="1724.9" cy="263.2" r="0.60"/><circle cx="1714.9" cy="270.2" r="0.37"/><circle cx="1708.6" cy="270.3" r="0.28"/><circle cx="1704.8" cy="262.7" r="0.59"/><circle cx="1720.9" cy="265.4" r="0.41"/><circle cx="1719.2" cy="263.9" r="0.55"/><circle cx="1707.6" cy="268.2" r="0.59"/><circle cx="1721.0" cy="266.6" r="0.27"/><circle cx="1719.1" cy="268.0" r="0.50"/><circle cx="1711.0" cy="263.8" r="0.54"/><circle cx="1710.2" cy="264.9" r="0.54"/><circle cx="1717.1" cy="262.0" r="0.59"/></g>
<path d="M1726.7,274.5 V280.5 M1723.7,277.5 H1729.7" stroke="#000" stroke-width="1.3"/>
<g fill="#000" opacity="1"><circle cx="1749.4" cy="258.8" r="0.23"/><circle cx="1751.3" cy="255.6" r="0.27"/><circle cx="1749.1" cy="252.8" r="0.51"/><circle cx="1750.8" cy="252.9" r="0.37"/><circle cx="1750.7" cy="253.4" r="0.37"/><circle cx="1747.3" cy="254.4" r="0.61"/><circle cx="1746.7" cy="262.0" r="0.34"/><circle cx="1747.2" cy="263.6" r="0.61"/><circle cx="1750.3" cy="260.6" r="0.54"/><circle cx="1748.0" cy="260.7" r="0.58"/><circle cx="1748.9" cy="257.3" r="0.27"/><circle cx="1748.0" cy="277.1" r="0.44"/><circle cx="1749.4" cy="259.9" r="0.27"/><circle cx="1746.4" cy="275.7" r="0.30"/><circle cx="1752.0" cy="270.4" r="0.27"/><circle cx="1748.1" cy="261.5" r="0.34"/><circle cx="1746.7" cy="253.8" r="0.41"/><circle cx="1748.0" cy="265.8" r="0.38"/></g>
<path d="M1760.7,274.5 V280.5 M1757.7,277.5 H1763.7" stroke="#c01010" stroke-width="1.3"/>
<g fill="#000" opacity="0.6"><circle cx="1783.3" cy="276.5" r="0.82"/><circle cx="1784.7" cy="255.7" r="0.81"/><circle cx="1788.3" cy="270.8" r="0.54"/><circle cx="1780.5" cy="275.9" r="0.48"/><circle cx="1779.6" cy="271.1" r="0.92"/><circle cx="1776.9" cy="258.1" r="0.59"/><circle cx="1793.8" cy="259.0" r="0.64"/><circle cx="1771.7" cy="260.1" r="0.51"/><circle cx="1782.5" cy="269.2" r="0.68"/><circle cx="1783.3" cy="259.9" r="0.63"/><circle cx="1791.7" cy="264.5" r="0.60"/><circle cx="1789.2" cy="254.6" r="0.59"/><circle cx="1790.1" cy="272.3" r="0.84"/><circle cx="1792.1" cy="260.1" r="0.55"/><circle cx="1775.8" cy="264.3" r="0.64"/><circle cx="1770.5" cy="267.5" r="0.95"/><circle cx="1790.7" cy="261.0" r="0.99"/><circle cx="1790.7" cy="274.6" r="0.77"/><circle cx="1788.5" cy="259.0" r="1.01"/><circle cx="1794.5" cy="266.9" r="0.89"/><circle cx="1774.4" cy="273.4" r="0.48"/><circle cx="1782.8" cy="256.1" r="0.61"/><circle cx="1786.5" cy="276.0" r="0.83"/><circle cx="1793.6" cy="271.8" r="0.49"/><circle cx="1776.8" cy="270.9" r="0.73"/><circle cx="1792.5" cy="257.0" r="0.76"/><circle cx="1779.9" cy="268.2" r="0.38"/><circle cx="1772.8" cy="263.8" r="0.64"/><circle cx="1791.0" cy="264.1" r="0.57"/><circle cx="1778.0" cy="267.7" r="0.97"/></g>
<path d="M1794.7,274.5 V280.5 M1791.7,277.5 H1797.7" stroke="#000" stroke-width="1.3"/>
<g fill="#000" opacity="1.0"><circle cx="1808.0" cy="259.4" r="0.42"/><circle cx="1816.7" cy="272.9" r="0.45"/><circle cx="1803.6" cy="269.6" r="0.48"/><circle cx="1817.6" cy="268.1" r="0.30"/><circle cx="1809.7" cy="275.2" r="0.63"/><circle cx="1817.8" cy="277.3" r="0.42"/><circle cx="1806.8" cy="262.6" r="0.24"/><circle cx="1827.2" cy="269.6" r="0.54"/><circle cx="1806.9" cy="274.2" r="0.59"/><circle cx="1815.5" cy="268.4" r="0.47"/><circle cx="1812.9" cy="259.5" r="0.24"/><circle cx="1814.1" cy="265.2" r="0.56"/><circle cx="1811.5" cy="259.8" r="0.43"/><circle cx="1817.3" cy="271.0" r="0.31"/><circle cx="1820.5" cy="256.4" r="0.55"/><circle cx="1809.5" cy="275.3" r="0.49"/><circle cx="1811.7" cy="257.8" r="0.48"/><circle cx="1821.7" cy="277.9" r="0.53"/><circle cx="1805.7" cy="262.7" r="0.27"/><circle cx="1813.3" cy="270.8" r="0.60"/><circle cx="1826.0" cy="265.8" r="0.62"/><circle cx="1819.1" cy="253.4" r="0.36"/><circle cx="1818.0" cy="276.7" r="0.36"/><circle cx="1815.3" cy="256.8" r="0.57"/><circle cx="1805.4" cy="259.4" r="0.67"/><circle cx="1806.6" cy="274.6" r="0.23"/><circle cx="1818.4" cy="263.3" r="0.47"/><circle cx="1807.3" cy="272.9" r="0.37"/><circle cx="1819.9" cy="277.0" r="0.47"/><circle cx="1817.0" cy="255.2" r="0.24"/><circle cx="1817.6" cy="258.5" r="0.44"/><circle cx="1823.8" cy="265.0" r="0.52"/><circle cx="1817.7" cy="253.9" r="0.42"/><circle cx="1815.5" cy="253.6" r="0.32"/><circle cx="1806.1" cy="262.6" r="0.55"/><circle cx="1819.2" cy="272.4" r="0.38"/><circle cx="1823.5" cy="269.7" r="0.55"/><circle cx="1811.6" cy="262.3" r="0.55"/><circle cx="1825.7" cy="273.1" r="0.29"/><circle cx="1822.5" cy="269.0" r="0.46"/><circle cx="1815.0" cy="278.1" r="0.65"/><circle cx="1814.2" cy="276.9" r="0.54"/><circle cx="1810.1" cy="262.4" r="0.65"/><circle cx="1818.2" cy="264.6" r="0.37"/><circle cx="1814.0" cy="270.6" r="0.42"/><circle cx="1818.4" cy="263.7" r="0.60"/><circle cx="1816.1" cy="266.5" r="0.63"/><circle cx="1815.8" cy="271.4" r="0.28"/><circle cx="1813.4" cy="268.6" r="0.31"/><circle cx="1816.7" cy="275.6" r="0.43"/><circle cx="1813.3" cy="274.6" r="0.57"/><circle cx="1815.4" cy="256.9" r="0.64"/><circle cx="1819.4" cy="254.9" r="0.44"/><circle cx="1814.2" cy="269.5" r="0.62"/><circle cx="1813.3" cy="262.2" r="0.64"/><circle cx="1818.6" cy="263.3" r="0.54"/><circle cx="1817.5" cy="275.2" r="0.60"/><circle cx="1810.9" cy="273.0" r="0.52"/><circle cx="1820.6" cy="275.4" r="0.42"/><circle cx="1822.7" cy="264.3" r="0.54"/><circle cx="1823.8" cy="266.9" r="0.28"/><circle cx="1822.7" cy="273.2" r="0.30"/><circle cx="1817.9" cy="260.8" r="0.51"/><circle cx="1819.9" cy="261.2" r="0.32"/><circle cx="1817.6" cy="255.4" r="0.64"/><circle cx="1812.1" cy="272.5" r="0.66"/><circle cx="1809.0" cy="276.4" r="0.63"/><circle cx="1819.9" cy="274.8" r="0.65"/><circle cx="1826.2" cy="273.7" r="0.57"/><circle cx="1816.7" cy="254.1" r="0.27"/></g>
<path d="M1828.7,274.5 V280.5 M1825.7,277.5 H1831.7" stroke="#c01010" stroke-width="1.3"/>
<g fill="#000" opacity="1.0"><circle cx="1855.3" cy="263.8" r="0.43"/><circle cx="1849.3" cy="256.7" r="0.40"/><circle cx="1839.7" cy="271.9" r="0.18"/><circle cx="1859.2" cy="261.2" r="0.44"/><circle cx="1837.4" cy="267.4" r="0.27"/><circle cx="1848.4" cy="264.3" r="0.33"/><circle cx="1862.9" cy="271.6" r="0.40"/><circle cx="1837.5" cy="271.7" r="0.49"/><circle cx="1854.8" cy="263.8" r="0.41"/><circle cx="1849.1" cy="253.4" r="0.17"/><circle cx="1859.5" cy="260.4" r="0.37"/><circle cx="1853.8" cy="257.8" r="0.18"/><circle cx="1857.6" cy="261.4" r="0.18"/><circle cx="1860.5" cy="276.3" r="0.42"/><circle cx="1852.1" cy="270.6" r="0.47"/><circle cx="1844.9" cy="255.1" r="0.21"/><circle cx="1838.2" cy="272.6" r="0.17"/><circle cx="1847.6" cy="266.7" r="0.51"/><circle cx="1862.3" cy="273.9" r="0.45"/><circle cx="1850.3" cy="261.9" r="0.40"/><circle cx="1840.2" cy="265.5" r="0.22"/><circle cx="1837.3" cy="264.0" r="0.21"/><circle cx="1857.6" cy="258.2" r="0.26"/><circle cx="1851.4" cy="275.1" r="0.39"/><circle cx="1837.9" cy="259.0" r="0.34"/><circle cx="1835.8" cy="263.8" r="0.24"/><circle cx="1859.3" cy="265.9" r="0.27"/><circle cx="1857.6" cy="271.8" r="0.18"/><circle cx="1859.9" cy="260.0" r="0.47"/><circle cx="1846.5" cy="252.9" r="0.42"/><circle cx="1846.6" cy="277.1" r="0.24"/><circle cx="1839.8" cy="261.1" r="0.43"/><circle cx="1855.0" cy="272.6" r="0.45"/><circle cx="1855.7" cy="251.0" r="0.21"/><circle cx="1851.9" cy="269.7" r="0.41"/><circle cx="1850.4" cy="252.9" r="0.43"/><circle cx="1839.5" cy="263.9" r="0.48"/><circle cx="1843.5" cy="255.2" r="0.37"/><circle cx="1837.7" cy="265.5" r="0.36"/><circle cx="1857.4" cy="272.1" r="0.31"/><circle cx="1840.5" cy="269.6" r="0.29"/><circle cx="1843.1" cy="271.2" r="0.29"/><circle cx="1855.1" cy="264.2" r="0.17"/><circle cx="1849.0" cy="255.7" r="0.32"/><circle cx="1843.1" cy="260.0" r="0.25"/><circle cx="1864.7" cy="266.4" r="0.49"/><circle cx="1848.4" cy="275.0" r="0.28"/><circle cx="1863.9" cy="270.1" r="0.45"/><circle cx="1851.1" cy="272.6" r="0.40"/><circle cx="1853.7" cy="255.2" r="0.30"/><circle cx="1852.1" cy="278.3" r="0.46"/><circle cx="1853.9" cy="261.0" r="0.37"/><circle cx="1863.3" cy="263.8" r="0.32"/><circle cx="1853.0" cy="267.9" r="0.42"/><circle cx="1863.0" cy="270.6" r="0.39"/><circle cx="1836.7" cy="267.3" r="0.48"/><circle cx="1847.2" cy="261.8" r="0.37"/><circle cx="1844.1" cy="268.6" r="0.48"/><circle cx="1850.1" cy="259.8" r="0.25"/><circle cx="1844.5" cy="274.5" r="0.28"/><circle cx="1838.1" cy="270.0" r="0.23"/><circle cx="1849.1" cy="256.5" r="0.49"/><circle cx="1858.9" cy="262.4" r="0.37"/><circle cx="1858.1" cy="271.2" r="0.38"/><circle cx="1845.0" cy="258.3" r="0.18"/><circle cx="1858.7" cy="272.9" r="0.23"/><circle cx="1846.6" cy="276.1" r="0.47"/><circle cx="1843.2" cy="264.3" r="0.37"/><circle cx="1848.6" cy="278.1" r="0.22"/><circle cx="1850.0" cy="274.9" r="0.48"/><circle cx="1854.0" cy="270.7" r="0.21"/><circle cx="1852.7" cy="273.4" r="0.30"/><circle cx="1851.3" cy="255.5" r="0.33"/><circle cx="1840.2" cy="273.0" r="0.47"/><circle cx="1837.9" cy="271.5" r="0.25"/><circle cx="1861.5" cy="263.5" r="0.40"/><circle cx="1845.0" cy="270.3" r="0.21"/><circle cx="1857.5" cy="259.1" r="0.40"/><circle cx="1840.1" cy="267.7" r="0.24"/><circle cx="1854.5" cy="272.8" r="0.40"/><circle cx="1850.0" cy="264.8" r="0.41"/><circle cx="1847.1" cy="266.6" r="0.26"/><circle cx="1854.0" cy="278.2" r="0.35"/><circle cx="1847.2" cy="271.6" r="0.27"/><circle cx="1849.0" cy="273.7" r="0.44"/><circle cx="1853.7" cy="252.8" r="0.47"/><circle cx="1847.8" cy="260.8" r="0.18"/><circle cx="1854.6" cy="271.5" r="0.35"/><circle cx="1855.7" cy="254.7" r="0.31"/><circle cx="1851.4" cy="279.8" r="0.42"/><circle cx="1849.0" cy="267.7" r="0.50"/><circle cx="1850.2" cy="278.8" r="0.21"/><circle cx="1845.6" cy="257.7" r="0.47"/><circle cx="1849.3" cy="269.6" r="0.24"/><circle cx="1855.8" cy="251.1" r="0.39"/><circle cx="1847.4" cy="257.8" r="0.26"/><circle cx="1863.4" cy="272.7" r="0.18"/><circle cx="1843.9" cy="259.2" r="0.23"/><circle cx="1837.4" cy="270.7" r="0.25"/><circle cx="1856.8" cy="275.2" r="0.39"/><circle cx="1844.4" cy="264.6" r="0.46"/><circle cx="1855.5" cy="269.0" r="0.25"/><circle cx="1840.4" cy="264.1" r="0.36"/><circle cx="1848.7" cy="251.0" r="0.33"/><circle cx="1863.9" cy="268.6" r="0.17"/><circle cx="1848.3" cy="270.2" r="0.37"/><circle cx="1851.8" cy="259.7" r="0.27"/><circle cx="1858.1" cy="255.0" r="0.21"/><circle cx="1845.5" cy="252.7" r="0.31"/><circle cx="1857.5" cy="275.1" r="0.28"/><circle cx="1854.8" cy="269.5" r="0.30"/><circle cx="1857.2" cy="271.7" r="0.35"/><circle cx="1841.7" cy="261.9" r="0.44"/><circle cx="1858.0" cy="269.5" r="0.48"/><circle cx="1860.2" cy="254.2" r="0.43"/><circle cx="1837.7" cy="262.0" r="0.36"/><circle cx="1856.3" cy="270.1" r="0.20"/><circle cx="1856.7" cy="259.0" r="0.31"/><circle cx="1846.1" cy="263.9" r="0.41"/><circle cx="1854.5" cy="252.2" r="0.47"/><circle cx="1848.4" cy="270.2" r="0.43"/><circle cx="1847.5" cy="256.4" r="0.28"/><circle cx="1858.5" cy="276.3" r="0.32"/><circle cx="1854.0" cy="256.9" r="0.28"/><circle cx="1837.8" cy="263.9" r="0.47"/><circle cx="1843.2" cy="275.0" r="0.30"/><circle cx="1859.1" cy="255.0" r="0.36"/><circle cx="1845.6" cy="271.0" r="0.47"/><circle cx="1853.3" cy="257.1" r="0.20"/><circle cx="1855.7" cy="278.9" r="0.18"/><circle cx="1854.7" cy="254.9" r="0.36"/><circle cx="1841.4" cy="262.6" r="0.36"/><circle cx="1862.8" cy="272.7" r="0.20"/><circle cx="1858.6" cy="274.4" r="0.39"/><circle cx="1855.1" cy="253.3" r="0.48"/><circle cx="1852.2" cy="265.5" r="0.25"/><circle cx="1851.8" cy="259.2" r="0.35"/><circle cx="1851.5" cy="259.1" r="0.35"/><circle cx="1861.2" cy="257.4" r="0.30"/><circle cx="1842.9" cy="266.0" r="0.49"/><circle cx="1853.2" cy="252.9" r="0.27"/><circle cx="1849.5" cy="254.6" r="0.44"/><circle cx="1841.5" cy="275.6" r="0.40"/><circle cx="1840.0" cy="268.4" r="0.44"/><circle cx="1836.2" cy="262.3" r="0.17"/><circle cx="1860.8" cy="257.4" r="0.33"/><circle cx="1854.1" cy="260.3" r="0.28"/><circle cx="1847.6" cy="251.7" r="0.29"/><circle cx="1862.8" cy="264.6" r="0.18"/><circle cx="1853.7" cy="267.9" r="0.36"/><circle cx="1847.4" cy="271.9" r="0.32"/><circle cx="1863.3" cy="271.7" r="0.45"/><circle cx="1841.4" cy="261.4" r="0.27"/><circle cx="1843.6" cy="259.7" r="0.50"/><circle cx="1863.0" cy="261.5" r="0.45"/><circle cx="1855.4" cy="267.4" r="0.29"/><circle cx="1857.5" cy="271.9" r="0.50"/><circle cx="1858.1" cy="252.3" r="0.24"/><circle cx="1851.1" cy="267.3" r="0.26"/><circle cx="1860.9" cy="268.8" r="0.27"/><circle cx="1845.5" cy="255.0" r="0.37"/><circle cx="1846.7" cy="277.2" r="0.40"/><circle cx="1848.4" cy="255.0" r="0.33"/><circle cx="1850.0" cy="267.9" r="0.33"/><circle cx="1845.9" cy="260.7" r="0.46"/><circle cx="1860.7" cy="255.4" r="0.44"/><circle cx="1844.4" cy="265.5" r="0.26"/><circle cx="1849.5" cy="250.2" r="0.21"/><circle cx="1859.6" cy="265.4" r="0.29"/><circle cx="1846.6" cy="262.1" r="0.45"/><circle cx="1843.2" cy="277.2" r="0.28"/><circle cx="1848.6" cy="270.9" r="0.49"/><circle cx="1839.2" cy="257.7" r="0.19"/><circle cx="1838.3" cy="261.6" r="0.50"/><circle cx="1855.2" cy="263.1" r="0.29"/><circle cx="1861.7" cy="264.9" r="0.49"/><circle cx="1850.6" cy="267.4" r="0.49"/><circle cx="1849.7" cy="276.2" r="0.29"/><circle cx="1837.9" cy="258.2" r="0.49"/><circle cx="1856.1" cy="259.7" r="0.45"/><circle cx="1860.3" cy="266.1" r="0.49"/><circle cx="1850.4" cy="274.1" r="0.37"/><circle cx="1851.8" cy="277.6" r="0.39"/><circle cx="1862.6" cy="273.1" r="0.19"/><circle cx="1847.8" cy="256.6" r="0.22"/><circle cx="1863.9" cy="272.1" r="0.44"/><circle cx="1837.8" cy="268.4" r="0.50"/><circle cx="1860.5" cy="260.1" r="0.26"/><circle cx="1835.9" cy="263.3" r="0.42"/><circle cx="1844.0" cy="252.9" r="0.31"/><circle cx="1837.8" cy="260.0" r="0.24"/><circle cx="1852.2" cy="263.2" r="0.35"/><circle cx="1845.6" cy="262.4" r="0.48"/><circle cx="1844.7" cy="267.4" r="0.31"/><circle cx="1842.5" cy="259.7" r="0.17"/><circle cx="1861.3" cy="271.9" r="0.21"/><circle cx="1850.2" cy="278.5" r="0.46"/><circle cx="1855.3" cy="260.8" r="0.17"/><circle cx="1851.0" cy="253.4" r="0.29"/><circle cx="1860.5" cy="266.1" r="0.25"/><circle cx="1838.1" cy="257.2" r="0.24"/><circle cx="1861.8" cy="270.7" r="0.21"/><circle cx="1852.4" cy="274.8" r="0.50"/><circle cx="1846.9" cy="272.5" r="0.33"/><circle cx="1855.7" cy="273.1" r="0.41"/><circle cx="1844.7" cy="277.0" r="0.23"/><circle cx="1860.2" cy="272.1" r="0.32"/><circle cx="1854.9" cy="262.6" r="0.42"/><circle cx="1846.3" cy="257.0" r="0.21"/><circle cx="1840.7" cy="256.6" r="0.33"/><circle cx="1838.5" cy="267.1" r="0.37"/><circle cx="1845.0" cy="268.0" r="0.33"/><circle cx="1837.2" cy="260.6" r="0.50"/><circle cx="1842.6" cy="262.0" r="0.24"/><circle cx="1841.9" cy="255.6" r="0.25"/><circle cx="1845.2" cy="251.0" r="0.30"/><circle cx="1859.9" cy="261.3" r="0.39"/><circle cx="1855.2" cy="260.0" r="0.29"/><circle cx="1854.5" cy="264.6" r="0.27"/><circle cx="1837.9" cy="266.9" r="0.38"/><circle cx="1861.8" cy="259.8" r="0.17"/><circle cx="1853.3" cy="266.2" r="0.31"/><circle cx="1861.4" cy="266.8" r="0.38"/><circle cx="1854.8" cy="278.3" r="0.31"/><circle cx="1859.4" cy="262.8" r="0.38"/><circle cx="1843.3" cy="263.0" r="0.43"/><circle cx="1858.2" cy="265.2" r="0.28"/><circle cx="1858.5" cy="257.8" r="0.18"/><circle cx="1847.1" cy="276.2" r="0.44"/><circle cx="1861.0" cy="273.4" r="0.30"/><circle cx="1841.1" cy="263.5" r="0.32"/><circle cx="1865.1" cy="264.1" r="0.48"/><circle cx="1849.6" cy="252.5" r="0.22"/><circle cx="1864.0" cy="268.0" r="0.40"/><circle cx="1845.0" cy="258.9" r="0.26"/><circle cx="1860.3" cy="259.8" r="0.18"/><circle cx="1845.9" cy="272.5" r="0.19"/><circle cx="1864.8" cy="263.0" r="0.44"/><circle cx="1860.4" cy="265.3" r="0.21"/><circle cx="1848.7" cy="251.7" r="0.44"/><circle cx="1852.1" cy="260.0" r="0.17"/><circle cx="1862.2" cy="272.6" r="0.45"/><circle cx="1843.5" cy="264.3" r="0.46"/><circle cx="1856.9" cy="270.9" r="0.17"/><circle cx="1860.3" cy="264.0" r="0.43"/><circle cx="1854.3" cy="254.2" r="0.50"/><circle cx="1852.9" cy="250.7" r="0.49"/><circle cx="1862.0" cy="271.4" r="0.25"/><circle cx="1846.7" cy="272.8" r="0.50"/><circle cx="1859.9" cy="268.7" r="0.21"/><circle cx="1861.3" cy="264.8" r="0.41"/><circle cx="1837.7" cy="263.3" r="0.28"/><circle cx="1839.6" cy="271.7" r="0.41"/><circle cx="1857.0" cy="259.6" r="0.46"/><circle cx="1849.8" cy="253.7" r="0.31"/><circle cx="1846.9" cy="263.3" r="0.20"/><circle cx="1848.7" cy="269.9" r="0.19"/><circle cx="1848.0" cy="252.4" r="0.38"/><circle cx="1854.2" cy="277.3" r="0.45"/><circle cx="1845.5" cy="260.1" r="0.36"/></g>
<path d="M1862.7,274.5 V280.5 M1859.7,277.5 H1865.7" stroke="#c01010" stroke-width="1.3"/>
<g fill="#000" opacity="1.0"><circle cx="1879.4" cy="269.1" r="0.34"/><circle cx="1891.5" cy="257.2" r="0.75"/><circle cx="1887.8" cy="270.9" r="0.53"/><circle cx="1891.4" cy="267.6" r="0.55"/><circle cx="1872.4" cy="266.4" r="0.57"/><circle cx="1878.2" cy="257.4" r="0.67"/><circle cx="1884.5" cy="265.2" r="0.78"/><circle cx="1885.9" cy="260.5" r="0.32"/><circle cx="1886.5" cy="275.4" r="0.33"/><circle cx="1893.8" cy="266.1" r="0.27"/><circle cx="1884.3" cy="273.0" r="0.37"/><circle cx="1891.3" cy="265.1" r="0.39"/><circle cx="1880.9" cy="272.5" r="0.45"/><circle cx="1883.9" cy="266.6" r="0.70"/><circle cx="1884.0" cy="255.9" r="0.26"/><circle cx="1886.0" cy="277.3" r="0.50"/><circle cx="1888.0" cy="276.3" r="0.73"/><circle cx="1891.3" cy="271.4" r="0.56"/><circle cx="1890.1" cy="269.9" r="0.59"/><circle cx="1879.9" cy="255.9" r="0.59"/><circle cx="1882.2" cy="267.4" r="0.27"/><circle cx="1891.0" cy="254.7" r="0.74"/><circle cx="1894.8" cy="270.2" r="0.35"/><circle cx="1881.4" cy="269.8" r="0.71"/><circle cx="1889.7" cy="254.2" r="0.46"/><circle cx="1890.8" cy="262.4" r="0.56"/><circle cx="1881.8" cy="259.4" r="0.46"/><circle cx="1894.1" cy="271.8" r="0.36"/><circle cx="1889.2" cy="270.2" r="0.60"/><circle cx="1878.6" cy="257.9" r="0.71"/><circle cx="1884.8" cy="259.0" r="0.54"/><circle cx="1887.8" cy="270.6" r="0.34"/><circle cx="1891.5" cy="268.6" r="0.73"/><circle cx="1882.6" cy="261.8" r="0.38"/><circle cx="1876.8" cy="259.9" r="0.28"/><circle cx="1892.8" cy="270.4" r="0.58"/><circle cx="1894.7" cy="270.5" r="0.39"/><circle cx="1876.7" cy="260.0" r="0.44"/><circle cx="1892.4" cy="262.3" r="0.48"/><circle cx="1873.2" cy="262.0" r="0.78"/><circle cx="1885.9" cy="255.5" r="0.64"/><circle cx="1876.5" cy="255.3" r="0.77"/><circle cx="1885.1" cy="259.0" r="0.56"/><circle cx="1878.9" cy="267.3" r="0.67"/><circle cx="1886.7" cy="275.8" r="0.52"/><circle cx="1874.9" cy="269.8" r="0.64"/><circle cx="1897.7" cy="264.2" r="0.68"/><circle cx="1883.8" cy="275.6" r="0.52"/><circle cx="1892.8" cy="261.8" r="0.45"/><circle cx="1893.5" cy="266.4" r="0.54"/><circle cx="1883.2" cy="268.9" r="0.52"/><circle cx="1889.6" cy="267.3" r="0.50"/><circle cx="1879.4" cy="272.5" r="0.54"/><circle cx="1881.1" cy="268.1" r="0.27"/><circle cx="1872.8" cy="260.3" r="0.41"/><circle cx="1880.3" cy="270.9" r="0.65"/><circle cx="1873.1" cy="265.5" r="0.27"/><circle cx="1888.7" cy="269.4" r="0.46"/><circle cx="1878.2" cy="269.8" r="0.77"/><circle cx="1875.5" cy="268.7" r="0.77"/><circle cx="1878.4" cy="257.2" r="0.70"/><circle cx="1883.5" cy="267.1" r="0.77"/><circle cx="1875.0" cy="262.9" r="0.30"/><circle cx="1884.5" cy="257.1" r="0.60"/><circle cx="1882.1" cy="277.2" r="0.46"/><circle cx="1882.7" cy="277.1" r="0.38"/><circle cx="1883.5" cy="274.0" r="0.78"/><circle cx="1889.2" cy="269.0" r="0.68"/><circle cx="1892.2" cy="268.8" r="0.67"/><circle cx="1882.0" cy="253.7" r="0.32"/><circle cx="1890.7" cy="260.0" r="0.69"/><circle cx="1872.6" cy="267.2" r="0.51"/><circle cx="1884.5" cy="270.0" r="0.52"/><circle cx="1889.7" cy="266.6" r="0.72"/><circle cx="1873.9" cy="259.6" r="0.34"/><circle cx="1875.9" cy="266.1" r="0.32"/><circle cx="1883.6" cy="277.4" r="0.64"/><circle cx="1874.6" cy="264.4" r="0.71"/><circle cx="1894.3" cy="262.1" r="0.29"/><circle cx="1888.4" cy="261.2" r="0.39"/><circle cx="1890.8" cy="272.1" r="0.57"/><circle cx="1876.1" cy="267.2" r="0.34"/><circle cx="1882.8" cy="255.7" r="0.42"/><circle cx="1891.0" cy="254.1" r="0.75"/><circle cx="1888.1" cy="264.7" r="0.47"/><circle cx="1878.4" cy="267.0" r="0.65"/><circle cx="1888.7" cy="262.3" r="0.53"/><circle cx="1896.7" cy="262.5" r="0.50"/><circle cx="1891.6" cy="270.4" r="0.53"/><circle cx="1885.9" cy="259.5" r="0.41"/><circle cx="1886.1" cy="264.9" r="0.58"/><circle cx="1894.0" cy="271.3" r="0.48"/><circle cx="1890.2" cy="262.2" r="0.72"/><circle cx="1885.1" cy="267.8" r="0.31"/><circle cx="1891.9" cy="268.7" r="0.77"/><circle cx="1878.0" cy="273.7" r="0.28"/><circle cx="1875.2" cy="264.1" r="0.31"/><circle cx="1877.1" cy="260.8" r="0.43"/><circle cx="1889.9" cy="255.5" r="0.33"/><circle cx="1887.0" cy="266.8" r="0.40"/><circle cx="1876.3" cy="255.3" r="0.77"/><circle cx="1887.7" cy="261.5" r="0.68"/><circle cx="1885.4" cy="256.1" r="0.79"/><circle cx="1881.1" cy="262.4" r="0.38"/><circle cx="1891.7" cy="272.4" r="0.59"/><circle cx="1885.5" cy="264.0" r="0.27"/><circle cx="1891.3" cy="263.9" r="0.40"/><circle cx="1887.6" cy="261.8" r="0.68"/><circle cx="1892.5" cy="259.1" r="0.58"/><circle cx="1894.8" cy="265.4" r="0.58"/><circle cx="1885.9" cy="255.7" r="0.32"/><circle cx="1886.5" cy="275.4" r="0.30"/><circle cx="1889.8" cy="269.0" r="0.68"/><circle cx="1877.3" cy="262.8" r="0.77"/><circle cx="1879.2" cy="261.9" r="0.56"/><circle cx="1889.6" cy="258.8" r="0.49"/><circle cx="1873.3" cy="259.0" r="0.60"/><circle cx="1888.9" cy="274.0" r="0.43"/><circle cx="1873.9" cy="266.8" r="0.27"/><circle cx="1877.4" cy="264.7" r="0.58"/><circle cx="1888.5" cy="257.0" r="0.59"/><circle cx="1883.1" cy="271.4" r="0.53"/><circle cx="1878.7" cy="263.8" r="0.66"/><circle cx="1876.9" cy="265.0" r="0.40"/><circle cx="1891.1" cy="254.4" r="0.76"/><circle cx="1884.7" cy="268.5" r="0.59"/><circle cx="1896.6" cy="266.9" r="0.62"/><circle cx="1880.2" cy="272.4" r="0.62"/><circle cx="1888.9" cy="271.6" r="0.68"/><circle cx="1880.5" cy="256.0" r="0.32"/><circle cx="1886.1" cy="271.4" r="0.28"/><circle cx="1878.4" cy="257.4" r="0.75"/><circle cx="1873.0" cy="260.8" r="0.51"/><circle cx="1877.8" cy="264.2" r="0.51"/><circle cx="1893.1" cy="261.5" r="0.26"/><circle cx="1881.2" cy="269.6" r="0.59"/><circle cx="1875.7" cy="264.5" r="0.75"/><circle cx="1885.0" cy="261.2" r="0.28"/><circle cx="1881.6" cy="255.4" r="0.61"/><circle cx="1882.2" cy="265.0" r="0.50"/><circle cx="1889.9" cy="256.3" r="0.29"/><circle cx="1893.5" cy="273.7" r="0.55"/><circle cx="1890.3" cy="274.4" r="0.75"/><circle cx="1891.6" cy="257.2" r="0.69"/><circle cx="1892.2" cy="269.6" r="0.69"/><circle cx="1882.0" cy="269.1" r="0.72"/><circle cx="1884.4" cy="263.9" r="0.30"/><circle cx="1872.8" cy="260.5" r="0.59"/><circle cx="1887.7" cy="262.0" r="0.56"/><circle cx="1887.8" cy="271.8" r="0.34"/><circle cx="1882.0" cy="265.6" r="0.61"/><circle cx="1877.2" cy="255.2" r="0.67"/><circle cx="1895.5" cy="270.5" r="0.55"/><circle cx="1893.1" cy="261.4" r="0.31"/><circle cx="1883.2" cy="259.8" r="0.78"/><circle cx="1872.7" cy="262.0" r="0.52"/><circle cx="1879.8" cy="274.4" r="0.64"/><circle cx="1878.1" cy="266.7" r="0.48"/><circle cx="1883.3" cy="258.9" r="0.35"/><circle cx="1874.2" cy="266.1" r="0.30"/><circle cx="1883.0" cy="277.7" r="0.40"/><circle cx="1885.7" cy="257.9" r="0.31"/><circle cx="1872.6" cy="266.0" r="0.67"/><circle cx="1895.1" cy="268.2" r="0.59"/><circle cx="1874.2" cy="266.2" r="0.54"/><circle cx="1889.1" cy="274.9" r="0.33"/><circle cx="1880.3" cy="276.2" r="0.56"/><circle cx="1873.8" cy="264.2" r="0.52"/><circle cx="1877.5" cy="271.4" r="0.27"/><circle cx="1883.2" cy="267.1" r="0.79"/><circle cx="1893.5" cy="259.2" r="0.35"/><circle cx="1888.9" cy="259.5" r="0.68"/><circle cx="1878.8" cy="256.8" r="0.65"/><circle cx="1883.4" cy="276.8" r="0.55"/><circle cx="1885.2" cy="253.1" r="0.40"/><circle cx="1878.1" cy="269.2" r="0.30"/><circle cx="1892.3" cy="257.4" r="0.52"/><circle cx="1873.0" cy="261.6" r="0.30"/><circle cx="1877.9" cy="273.4" r="0.54"/><circle cx="1878.1" cy="265.1" r="0.38"/><circle cx="1881.1" cy="258.3" r="0.75"/><circle cx="1895.1" cy="257.6" r="0.41"/><circle cx="1880.5" cy="264.6" r="0.45"/><circle cx="1892.9" cy="269.2" r="0.76"/><circle cx="1885.3" cy="257.2" r="0.41"/><circle cx="1887.4" cy="263.8" r="0.71"/><circle cx="1886.8" cy="262.3" r="0.76"/><circle cx="1879.8" cy="258.6" r="0.49"/><circle cx="1877.4" cy="259.1" r="0.72"/><circle cx="1890.6" cy="260.5" r="0.27"/><circle cx="1886.6" cy="254.7" r="0.61"/><circle cx="1887.9" cy="266.6" r="0.73"/><circle cx="1878.8" cy="271.7" r="0.77"/><circle cx="1888.2" cy="274.7" r="0.29"/><circle cx="1874.3" cy="260.8" r="0.35"/><circle cx="1885.5" cy="252.2" r="0.70"/><circle cx="1887.9" cy="252.8" r="0.64"/><circle cx="1873.4" cy="261.5" r="0.69"/><circle cx="1877.4" cy="257.3" r="0.36"/><circle cx="1880.8" cy="271.3" r="0.71"/><circle cx="1886.1" cy="258.1" r="0.78"/><circle cx="1887.7" cy="266.2" r="0.43"/><circle cx="1895.9" cy="270.9" r="0.45"/><circle cx="1875.5" cy="272.8" r="0.54"/><circle cx="1878.8" cy="258.7" r="0.50"/><circle cx="1891.3" cy="263.2" r="0.54"/><circle cx="1879.9" cy="265.7" r="0.34"/><circle cx="1873.1" cy="264.5" r="0.49"/><circle cx="1896.4" cy="269.6" r="0.33"/><circle cx="1886.8" cy="263.2" r="0.60"/><circle cx="1888.7" cy="270.3" r="0.48"/><circle cx="1885.0" cy="256.4" r="0.48"/><circle cx="1877.0" cy="270.4" r="0.41"/><circle cx="1890.1" cy="263.4" r="0.33"/><circle cx="1877.4" cy="262.7" r="0.64"/><circle cx="1895.1" cy="267.6" r="0.45"/><circle cx="1891.1" cy="261.9" r="0.49"/><circle cx="1880.8" cy="273.7" r="0.41"/><circle cx="1880.7" cy="257.7" r="0.63"/><circle cx="1882.4" cy="273.5" r="0.55"/><circle cx="1882.6" cy="254.7" r="0.49"/><circle cx="1888.4" cy="267.2" r="0.34"/><circle cx="1886.9" cy="270.1" r="0.61"/><circle cx="1878.0" cy="275.4" r="0.39"/><circle cx="1884.8" cy="270.6" r="0.34"/><circle cx="1880.6" cy="256.0" r="0.39"/><circle cx="1888.7" cy="255.1" r="0.49"/><circle cx="1876.5" cy="258.4" r="0.49"/><circle cx="1891.3" cy="269.3" r="0.76"/><circle cx="1877.4" cy="272.4" r="0.31"/><circle cx="1886.5" cy="253.1" r="0.46"/><circle cx="1878.2" cy="271.7" r="0.39"/><circle cx="1885.9" cy="269.5" r="0.62"/><circle cx="1872.0" cy="264.3" r="0.77"/><circle cx="1893.6" cy="256.0" r="0.70"/><circle cx="1889.3" cy="265.7" r="0.77"/><circle cx="1891.9" cy="257.7" r="0.59"/><circle cx="1876.9" cy="268.3" r="0.34"/><circle cx="1878.2" cy="263.0" r="0.33"/><circle cx="1891.5" cy="257.8" r="0.72"/></g>
<path d="M1896.7,274.5 V280.5 M1893.7,277.5 H1899.7" stroke="#c01010" stroke-width="1.3"/>
<rect x="1642.7" y="284" width="8" height="4" fill="#000" opacity="0.55"/>
<rect x="1677.7" y="284" width="6" height="4" fill="#000" opacity="0.55"/>
<rect x="1709.7" y="284" width="10" height="4" fill="#000" opacity="0.55"/>
<rect x="1746.7" y="284" width="4" height="4" fill="#000" opacity="0.55"/>
<rect x="1849.2" y="284" width="3" height="4" fill="#000" opacity="0.55"/>
<rect x="1882.7" y="284" width="4" height="4" fill="#000" opacity="0.55"/>
<rect x="1628.8" y="288" width="295.4" height="38" fill="#3a3a3a" />
<rect x="1634.9" y="296.2" width="282.8" height="22.6" fill="#222222" />
<text x="1639.3" y="311" font-size="12" fill="#d8d8d8" textLength="25.5" lengthAdjust="spacingAndGlyphs">Basic,</text>
<path d="M1902.5,305 L1906.5,309 L1910.5,305" stroke="#f0f0f0" stroke-width="1.6" fill="none"/>
<rect x="1629" y="326.5" width="294.5" height="37.5" fill="#2e2e2e" stroke="#7a7a7a" stroke-width="1" />
<rect x="1629.5" y="327" width="25.5" height="36.5" fill="#5a5a5a" />
<rect x="1904.6" y="327" width="18.4" height="36.5" fill="#333333" />
<text x="1631" y="348.8" font-size="12" fill="#d8d8d8" textLength="33.5" lengthAdjust="spacingAndGlyphs">Odstępy</text>
<text x="1881.6" y="348.8" font-size="12" fill="#d8d8d8" textLength="18.6" lengthAdjust="spacingAndGlyphs">20,0</text>
<path d="M1909.5,338 L1913.5,334 L1917.5,338 M1909.5,351.5 L1913.5,355.5 L1917.5,351.5" stroke="#d8d8d8" stroke-width="1.4" fill="none"/>
<g fill="none" stroke="#bebebe" stroke-width="1.5"><path d="M1650,376 H1656 M1650,380 H1655 M1650,384 H1653 M1650,388 H1664"/><path d="M1657,385 L1664,375 L1666,377 L1659,387 L1656,388Z" fill="#bebebe"/><path d="M1713,377 V388 H1723 V378 L1721,376 H1717"/><path d="M1713,372 V378 M1710,375 H1716"/><rect x="1770.5" y="375.5" width="8" height="7"/><rect x="1774.5" y="379.5" width="8" height="7"/><path d="M1890,375 A7,7 0 1 0 1899,379" stroke-width="2.2"/></g>
<rect x="1827" y="373" width="16" height="16" fill="#c4c4c4"/><path d="M1829,375 L1841,387 M1841,375 L1829,387" stroke="#454545" stroke-width="2.4"/>
<path d="M1896,372 L1901,378 L1894,379Z" fill="#bebebe"/>
<circle cx="1768.4" cy="405" r="1.9" fill="#bdbdbd"/>
<circle cx="1775.8" cy="405" r="1.9" fill="#bdbdbd"/>
<circle cx="1783" cy="405" r="1.9" fill="#bdbdbd"/>
<rect x="1625.5" y="437.5" width="302" height="619" fill="#454545" stroke="#585858" stroke-width="1" />
<rect x="1625.5" y="410.5" width="66" height="28" fill="#474747" stroke="#585858" stroke-width="1" />
<rect x="1626" y="437" width="65.5" height="2" fill="#454545" />
<rect x="1693" y="413.5" width="55.8" height="24" fill="#242424" />
<rect x="1750.9" y="413.5" width="58" height="24" fill="#242424" />
<path d="M1632,418 L1646,418 L1644,422 L1630,422Z M1632,424 L1646,424 L1644,428 L1630,428Z M1632,430 L1646,430 L1644,434 L1630,434Z" fill="#bebebe"/>
<text x="1648" y="428.5" font-size="12" fill="#d8d8d8" textLength="36.8" lengthAdjust="spacingAndGlyphs">Warstwy</text>
<rect x="1697.5" y="418.5" width="15" height="15" fill="none" stroke="#bebebe" stroke-width="1.3"/><path d="M1701.5,421 V431 M1705,421 V431 M1708.5,421 V431" stroke="#bebebe" stroke-width="1.6"/>
<text x="1715.3" y="430" font-size="12" fill="#d8d8d8" textLength="27.5" lengthAdjust="spacingAndGlyphs">Kanały</text>
<path d="M1755,425 C1759,420 1766,420 1770,425" stroke="#bebebe" stroke-width="2" fill="none"/><rect x="1754" y="420" width="5" height="4" fill="#bebebe"/><rect x="1766" y="420" width="5" height="4" fill="#bebebe"/><path d="M1759,422 L1766,422" stroke="#bebebe" stroke-width="1.5"/>
<text x="1772.9" y="430" font-size="12" fill="#d8d8d8" textLength="30.3" lengthAdjust="spacingAndGlyphs">Ścieżki</text>
<rect x="1910" y="421" width="10" height="10" fill="none" stroke="#a8a8a8" stroke-width="1.2"/><path d="M1917.5,423 L1912.5,426 L1917.5,429Z" fill="#a8a8a8"/>
<rect x="1629.5" y="442" width="247" height="28.5" fill="#232323" rx="3" stroke="#1a1a1a" stroke-width="1" />
<text x="1635.7" y="461" font-size="12" fill="#d8d8d8" textLength="19.5" lengthAdjust="spacingAndGlyphs">Tryb</text>
<text x="1820.8" y="461" font-size="12" fill="#d8d8d8" textLength="30.2" lengthAdjust="spacingAndGlyphs">Zwykłe</text>
<path d="M1858.5,452 L1864,457.5 L1869.5,452" stroke="#e8e8e8" stroke-width="1.7" fill="none"/>
<rect x="1878.5" y="442" width="45" height="28.5" fill="#232323" rx="3" stroke="#1a1a1a" stroke-width="1" />
<path d="M1886.5,453 A6,6 0 1 1 1889,461" stroke="#bebebe" stroke-width="1.8" fill="none"/><path d="M1884,449 L1885,455 L1890,452Z" fill="#bebebe"/><circle cx="1887" cy="461" r="2" fill="#bebebe"/>
<path d="M1905.5,452 L1911,457.5 L1916.5,452" stroke="#e8e8e8" stroke-width="1.7" fill="none"/>
<rect x="1629" y="472.5" width="294.5" height="37" fill="#5a5a5a" stroke="#7a7a7a" stroke-width="1" />
<rect x="1904.6" y="473" width="18.4" height="36" fill="#353535" />
<text x="1631" y="494.5" font-size="12" fill="#d8d8d8" textLength="26.3" lengthAdjust="spacingAndGlyphs">Krycie</text>
<text x="1877.2" y="494.5" font-size="12" fill="#d8d8d8" textLength="23.0" lengthAdjust="spacingAndGlyphs">100,0</text>
<path d="M1909.5,484.5 L1913.5,480.5 L1917.5,484.5" stroke="#555" stroke-width="1.4" fill="none"/><path d="M1909.5,498 L1913.5,502 L1917.5,498" stroke="#d8d8d8" stroke-width="1.4" fill="none"/>
<text x="1629.1" y="530.3" font-size="12" fill="#d8d8d8" textLength="49.5" lengthAdjust="spacingAndGlyphs">Blokowanie:</text>
<path d="M1703,519 L1694,529 L1697,531Z" fill="#bebebe"/><path d="M1694,530 C1692,531 1692,534 1689,535 C1693,535 1696,534 1696,531Z" fill="#bebebe"/>
<path d="M1729,518.5 V535 M1721,526.5 H1737" stroke="#bebebe" stroke-width="1.6"/><path d="M1726,521.5 L1729,518 L1732,521.5 M1726,531.5 L1729,535 L1732,531.5 M1724,523.5 L1720.5,526.5 L1724,529.5 M1734,523.5 L1737.5,526.5 L1734,529.5" stroke="#bebebe" stroke-width="1.5" fill="none"/>
<g><rect x="1753.5" y="519" width="4" height="4" fill="#d0d0d0"/><rect x="1753.5" y="523" width="4" height="4" fill="#777"/><rect x="1753.5" y="527" width="4" height="4" fill="#d0d0d0"/><rect x="1753.5" y="531" width="4" height="4" fill="#777"/><rect x="1757.5" y="519" width="4" height="4" fill="#777"/><rect x="1757.5" y="523" width="4" height="4" fill="#d0d0d0"/><rect x="1757.5" y="527" width="4" height="4" fill="#777"/><rect x="1757.5" y="531" width="4" height="4" fill="#d0d0d0"/><rect x="1761.5" y="519" width="4" height="4" fill="#d0d0d0"/><rect x="1761.5" y="523" width="4" height="4" fill="#777"/><rect x="1761.5" y="527" width="4" height="4" fill="#d0d0d0"/><rect x="1761.5" y="531" width="4" height="4" fill="#777"/><rect x="1765.5" y="519" width="4" height="4" fill="#777"/><rect x="1765.5" y="523" width="4" height="4" fill="#d0d0d0"/><rect x="1765.5" y="527" width="4" height="4" fill="#777"/><rect x="1765.5" y="531" width="4" height="4" fill="#d0d0d0"/></g>
<rect x="1630" y="544" width="278" height="476" fill="#2e2e2e" />
<rect x="1630" y="544" width="278" height="40.5" fill="#1e1e1e" />
<rect x="1909.3" y="544" width="14.6" height="476" fill="#1f1f1f" />
<rect x="1910.5" y="686" width="12" height="206" fill="#5a5a5a" rx="3" />
<g transform="translate(1645.8,564.8)"><path d="M-10,0 C-5,-7.5 5,-7.5 10,0 C5,7.5 -5,7.5 -10,0Z" fill="none" stroke="#cfcfcf" stroke-width="2.1"/><circle cx="0" cy="0" r="3.4" fill="none" stroke="#cfcfcf" stroke-width="2.3"/></g>
<rect x="1715.1" y="547.3" width="35.5" height="35.3" fill="#ffffff"/>
<rect x="1717" y="549.1999999999999" width="31.7" height="31.5" fill="url(#chkl0)"/>
<ellipse cx="1734" cy="569" rx="1.4" ry="3" fill="#f6c48e" transform="rotate(-30 1734 569)"/>
<text x="1757" y="568.2" font-size="12" fill="#d8d8d8" textLength="79.0" lengthAdjust="spacingAndGlyphs">forearm.png. kopia</text>
<g transform="translate(1645.8,604.8)"><path d="M-10,0 C-5,-7.5 5,-7.5 10,0 C5,7.5 -5,7.5 -10,0Z" fill="none" stroke="#cfcfcf" stroke-width="2.1"/><circle cx="0" cy="0" r="3.4" fill="none" stroke="#cfcfcf" stroke-width="2.3"/></g>
<rect x="1715.1" y="587.3" width="35.5" height="35.3" fill="#0a0a0a"/>
<rect x="1717" y="589.1999999999999" width="31.7" height="31.5" fill="url(#chkl1)"/>
<ellipse cx="1745" cy="607" rx="1.3" ry="3" fill="#f6c48e" transform="rotate(0 1745 607)"/>
<text x="1757" y="608.2" font-size="12" fill="#c8c8c8" textLength="51.0" lengthAdjust="spacingAndGlyphs">forearm.png</text>
<g transform="translate(1645.8,644.8)"><path d="M-10,0 C-5,-7.5 5,-7.5 10,0 C5,7.5 -5,7.5 -10,0Z" fill="none" stroke="#cfcfcf" stroke-width="2.1"/><circle cx="0" cy="0" r="3.4" fill="none" stroke="#cfcfcf" stroke-width="2.3"/></g>
<rect x="1715.1" y="627.3" width="35.5" height="35.3" fill="#0a0a0a"/>
<rect x="1717" y="629.1999999999999" width="31.7" height="31.5" fill="url(#chkl2)"/>
<ellipse cx="1743" cy="644" rx="1.8" ry="2.4" fill="#c9a080" transform="rotate(0 1743 644)"/>
<text x="1757" y="648.2" font-size="12" fill="#c8c8c8" textLength="35.0" lengthAdjust="spacingAndGlyphs">arm.png</text>
<g transform="translate(1645.8,684.8)"><path d="M-10,0 C-5,-7.5 5,-7.5 10,0 C5,7.5 -5,7.5 -10,0Z" fill="none" stroke="#cfcfcf" stroke-width="2.1"/><circle cx="0" cy="0" r="3.4" fill="none" stroke="#cfcfcf" stroke-width="2.3"/></g>
<rect x="1715.1" y="667.3" width="35.5" height="35.3" fill="#0a0a0a"/>
<rect x="1717" y="669.1999999999999" width="31.7" height="31.5" fill="url(#chkl3)"/>
<ellipse cx="1739" cy="683" rx="3.6" ry="3.8" fill="#8a6a4a" transform="rotate(0 1739 683)"/>
<text x="1757" y="688.2" font-size="12" fill="#c8c8c8" textLength="39.0" lengthAdjust="spacingAndGlyphs">body.png</text>
<g transform="translate(1645.8,724.8)"><path d="M-10,0 C-5,-7.5 5,-7.5 10,0 C5,7.5 -5,7.5 -10,0Z" fill="none" stroke="#cfcfcf" stroke-width="2.1"/><circle cx="0" cy="0" r="3.4" fill="none" stroke="#cfcfcf" stroke-width="2.3"/></g>
<rect x="1715.1" y="707.3" width="35.5" height="35.3" fill="#0a0a0a"/>
<rect x="1717" y="709.1999999999999" width="31.7" height="31.5" fill="url(#chkl4)"/>
<ellipse cx="1734" cy="725" rx="1.4" ry="2" fill="#d4a070" transform="rotate(0 1734 725)"/>
<text x="1757" y="728.2" font-size="12" fill="#c8c8c8" textLength="63.0" lengthAdjust="spacingAndGlyphs">arm.png. kopia</text>
<g transform="translate(1645.8,764.8)"><path d="M-10,0 C-5,-7.5 5,-7.5 10,0 C5,7.5 -5,7.5 -10,0Z" fill="none" stroke="#cfcfcf" stroke-width="2.1"/><circle cx="0" cy="0" r="3.4" fill="none" stroke="#cfcfcf" stroke-width="2.3"/></g>
<rect x="1715.1" y="747.3" width="35.5" height="35.3" fill="#0a0a0a"/>
<rect x="1717" y="749.1999999999999" width="31.7" height="31.5" fill="url(#chkl5)"/>
<ellipse cx="1740" cy="768" rx="2" ry="3" fill="#6e5a4a" transform="rotate(0 1740 768)"/>
<text x="1757" y="768.2" font-size="12" fill="#c8c8c8" textLength="37.0" lengthAdjust="spacingAndGlyphs">skirt.png</text>
<g transform="translate(1645.8,804.8)"><path d="M-10,0 C-5,-7.5 5,-7.5 10,0 C5,7.5 -5,7.5 -10,0Z" fill="none" stroke="#cfcfcf" stroke-width="2.1"/><circle cx="0" cy="0" r="3.4" fill="none" stroke="#cfcfcf" stroke-width="2.3"/></g>
<rect x="1715.1" y="787.3" width="35.5" height="35.3" fill="#0a0a0a"/>
<rect x="1717" y="789.1999999999999" width="31.7" height="31.5" fill="url(#chkl6)"/>
<ellipse cx="1737" cy="791" rx="6" ry="1.4" fill="#5a3525" transform="rotate(12 1737 791)"/>
<text x="1757" y="808.2" font-size="12" fill="#c8c8c8" textLength="64.0" lengthAdjust="spacingAndGlyphs">brown_hair.png</text>
<g transform="translate(1645.8,844.8)"><path d="M-10,0 C-5,-7.5 5,-7.5 10,0 C5,7.5 -5,7.5 -10,0Z" fill="none" stroke="#cfcfcf" stroke-width="2.1"/><circle cx="0" cy="0" r="3.4" fill="none" stroke="#cfcfcf" stroke-width="2.3"/></g>
<rect x="1715.1" y="827.3" width="35.5" height="35.3" fill="#0a0a0a"/>
<rect x="1717" y="829.1999999999999" width="31.7" height="31.5" fill="url(#chkl7)"/>
<ellipse cx="1738" cy="849" rx="1" ry="3" fill="#f6c48e" transform="rotate(0 1738 849)"/>
<text x="1757" y="848.2" font-size="12" fill="#c8c8c8" textLength="87.0" lengthAdjust="spacingAndGlyphs">upper_leg.png. kopia</text>
<g transform="translate(1645.8,884.8)"><path d="M-10,0 C-5,-7.5 5,-7.5 10,0 C5,7.5 -5,7.5 -10,0Z" fill="none" stroke="#cfcfcf" stroke-width="2.1"/><circle cx="0" cy="0" r="3.4" fill="none" stroke="#cfcfcf" stroke-width="2.3"/></g>
<rect x="1715.1" y="867.3" width="35.5" height="35.3" fill="#0a0a0a"/>
<rect x="1717" y="869.1999999999999" width="31.7" height="31.5" fill="url(#chkl8)"/>
<ellipse cx="1741" cy="888" rx="1" ry="3" fill="#f6c48e" transform="rotate(0 1741 888)"/>
<text x="1757" y="888.2" font-size="12" fill="#c8c8c8" textLength="59.0" lengthAdjust="spacingAndGlyphs">upper_leg.png</text>
<g transform="translate(1645.8,924.8)"><path d="M-10,0 C-5,-7.5 5,-7.5 10,0 C5,7.5 -5,7.5 -10,0Z" fill="none" stroke="#cfcfcf" stroke-width="2.1"/><circle cx="0" cy="0" r="3.4" fill="none" stroke="#cfcfcf" stroke-width="2.3"/></g>
<rect x="1715.1" y="907.3" width="35.5" height="35.3" fill="#0a0a0a"/>
<rect x="1717" y="909.1999999999999" width="31.7" height="31.5" fill="url(#chkl9)"/>
<ellipse cx="1745.5" cy="931" rx="1.5" ry="1.5" fill="#f6c48e" transform="rotate(0 1745.5 931)"/>
<text x="1757" y="928.2" font-size="12" fill="#c8c8c8" textLength="94.0" lengthAdjust="spacingAndGlyphs">Top_hand_holding.png</text>
<g transform="translate(1645.8,964.8)"><path d="M-10,0 C-5,-7.5 5,-7.5 10,0 C5,7.5 -5,7.5 -10,0Z" fill="none" stroke="#cfcfcf" stroke-width="2.1"/><circle cx="0" cy="0" r="3.4" fill="none" stroke="#cfcfcf" stroke-width="2.3"/></g>
<rect x="1715.1" y="947.3" width="35.5" height="35.3" fill="#0a0a0a"/>
<rect x="1717" y="949.1999999999999" width="31.7" height="31.5" fill="url(#chkl10)"/>
<ellipse cx="1739.5" cy="978.7" rx="3" ry="1.1" fill="#f6c48e" transform="rotate(0 1739.5 978.7)"/>
<text x="1757" y="968.2" font-size="12" fill="#c8c8c8" textLength="53.0" lengthAdjust="spacingAndGlyphs">top_foot.png</text>
<g transform="translate(1645.8,1004.8)"><path d="M-10,0 C-5,-7.5 5,-7.5 10,0 C5,7.5 -5,7.5 -10,0Z" fill="none" stroke="#cfcfcf" stroke-width="2.1"/><circle cx="0" cy="0" r="3.4" fill="none" stroke="#cfcfcf" stroke-width="2.3"/></g>
<rect x="1715.1" y="987.3" width="35.5" height="35.3" fill="#0a0a0a"/>
<rect x="1717" y="989.1999999999999" width="31.7" height="31.5" fill="url(#chkl11)"/>
<ellipse cx="1739.5" cy="1001.7" rx="1" ry="2.2" fill="#f6c48e" transform="rotate(-20 1739.5 1001.7)"/>
<text x="1757" y="1008.2" font-size="12" fill="#c8c8c8" textLength="39.0" lengthAdjust="spacingAndGlyphs">neck.png</text>
<rect x="1630" y="1020" width="294" height="37" fill="#454545" />
<rect x="1625.5" y="1056.5" width="302" height="1" fill="#585858" />
<g fill="none" stroke="#bebebe" stroke-width="1.5"><path d="M1641,1033 V1046 H1652 V1035 L1649,1032 H1645 M1641,1028 V1034 M1638,1031 H1644"/><path d="M1677,1031 H1683 L1685,1033 H1692 V1046 H1677Z" fill="#bebebe" stroke="none"/><path d="M1713.5,1042 L1720.6,1035 L1727.7,1042" stroke-width="2.2"/><path d="M1750.5,1035 L1757.6,1042 L1764.7,1035" stroke-width="2.2"/><rect x="1789.5" y="1031.5" width="8" height="7"/><rect x="1793.5" y="1035.5" width="8" height="7"/><path d="M1832,1032 V1046 M1826,1040 C1826,1045 1838,1045 1838,1040 M1829,1035 H1835"/><circle cx="1832" cy="1030" r="2"/></g>
<path d="M1680,1041 H1689 M1684.5,1036.5 V1045.5" stroke="#454545" stroke-width="2"/>
<path d="M1861,1042 L1876,1042 L1872,1047 L1858,1047Z" fill="#bebebe"/><path d="M1863,1030 H1872 V1038 C1870,1041 1865,1041 1863,1038Z" fill="#bebebe"/><path d="M1865,1034 H1867 M1869,1034 H1871 M1865,1037 C1867,1039 1869,1039 1871,1037" stroke="#454545" stroke-width="1.2" fill="none"/>
<rect x="1898" y="1030" width="16" height="16" fill="#c4c4c4"/><path d="M1900,1032 L1912,1044 M1912,1032 L1900,1044" stroke="#454545" stroke-width="2.6"/>
</svg></body></html>
